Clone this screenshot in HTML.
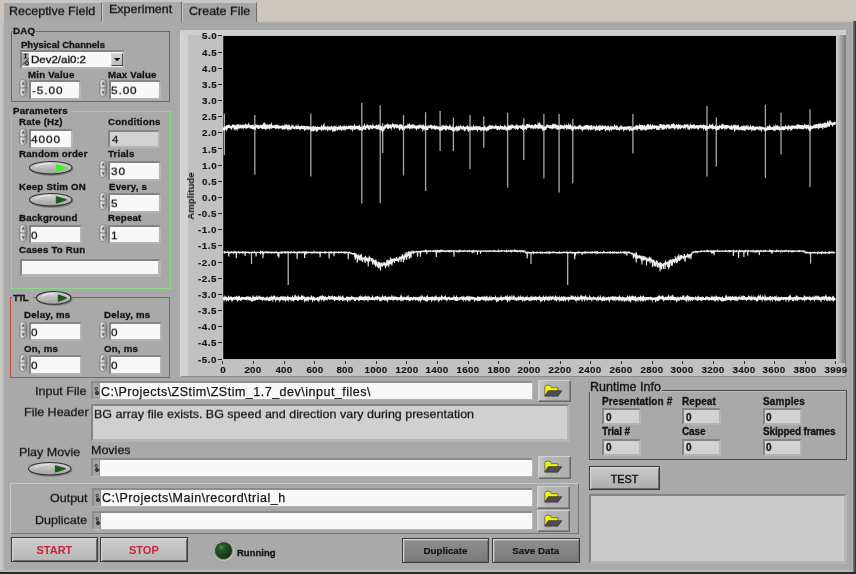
<!DOCTYPE html><html><head><meta charset="utf-8"><style>
*{margin:0;padding:0}
html,body{width:856px;height:574px;overflow:hidden;background:#a9a9a9;font-family:"Liberation Sans",sans-serif}
.r,.t,.tab,.fr,.pc,.fb,.btn,.dd{position:absolute}
.t{white-space:nowrap;will-change:transform}
.tab{box-sizing:border-box;border-top:1.5px solid #c8c8c8;border-left:1.5px solid #c8c8c8;border-right:1.5px solid #6a6a6a}
.fr{box-sizing:border-box;border-style:solid;border-color:#848484 #b4b4b4 #b4b4b4 #848484}
.fr .fi{position:absolute;left:0;top:0;right:0;bottom:0}
.pc{box-sizing:border-box;background:#8c8c8c;border-style:solid;border-width:0 1.8px 1.8px 0;border-color:#b4b4b4}
.pc .pw{position:absolute;left:9px;top:2.2px;right:0;bottom:0;background:#f8f8f8}
.pc:before{content:'';position:absolute;left:2px;top:2.2px;width:7px;bottom:0;background:#a4a4a4;box-shadow:inset -1px 0 0 #8e8e8e}
.pc i{position:absolute;background:#303030;border-radius:50%}
.pc .d1{left:3.5px;top:6px;width:2.2px;height:2.2px}
.pc .d2{left:5px;top:9.5px;width:3px;height:3px}
.dpct{position:absolute;left:2px;top:2px;font-size:9px;line-height:9px;color:#202020;font-weight:bold;transform:scaleX(0.7)}
.fb{box-sizing:border-box;background:linear-gradient(90deg,#c8c8c8,#b4b4b4 30%,#b0b0b0);border:1px solid #6a6a6a;border-top-color:#d0d0d0;border-left-color:#d0d0d0;box-shadow:inset -1px -1px 0 #8a8a8a}
.btn{box-sizing:border-box;text-align:center;border:1px solid #3c3c3c;box-shadow:inset 1.2px 1.2px 0 #d6d6d6, inset -1px -1px 0 #6a6a6a;will-change:transform}
.dd{box-sizing:border-box;background:#8e8e8e;border-top:1px solid #7e7e7e;border-left:1px solid #7e7e7e}
.dd .ddw{position:absolute;left:9px;top:1px;width:81px;bottom:1px;background:#fafafa}
.dd .dda{position:absolute;left:90px;top:1px;width:12px;bottom:1px;background:#c4c4c4;border:1px solid #606060;border-top-color:#e0e0e0;border-left-color:#e0e0e0;box-sizing:border-box}
.dd .dda:after{content:"";position:absolute;left:2px;top:5px;border-left:3.5px solid transparent;border-right:3.5px solid transparent;border-top:4px solid #111}
.yl{font-size:9.8px;line-height:11px;font-weight:bold;color:#141414;text-align:right;letter-spacing:0.5px;-webkit-text-stroke:0.15px #141414}
.xl{width:60px;text-align:center;font-size:9.8px;line-height:10px;font-weight:bold;color:#141414;letter-spacing:0.3px;-webkit-text-stroke:0.15px #141414}
</style></head><body><div class="r" style="left:0;top:0;width:856px;height:574px;background:#a9a9a9"></div>
<div class="r" style="left:0;top:0;width:856px;height:20px;background:#ccc6be"></div>
<div class="r" style="left:0;top:0;width:1.5px;height:574px;background:#ccc6be"></div>
<div class="r" style="left:1.5px;top:21px;width:2.5px;height:553px;background:#bfbfbf"></div>
<div class="r" style="left:1.5px;top:20px;width:854.5px;height:2px;background:#c2c2c2"></div>
<div class="r" style="left:0;top:569.5px;width:856px;height:2.8px;background:#b9b9b9"></div>
<div class="r" style="left:852.5px;top:21px;width:3.5px;height:553px;background:linear-gradient(90deg,#7a7a7a,#2e2e2e)"></div>
<div class="r" style="left:0;top:572.3px;width:856px;height:2px;background:#2c2c2c"></div>
<div class="tab" style="left:3px;top:2px;width:99px;height:19.5px;background:#a6a6a6"></div>
<div class="tab sel" style="left:102px;top:0.5px;width:79.5px;height:22.5px;background:#a9a9a9"></div>
<div class="tab" style="left:182px;top:2px;width:75px;height:19.5px;background:#a6a6a6"></div>
<div class="t" style="left:9.2px;top:4.72px;font-size:12.5px;line-height:12.5px;font-weight:normal;color:#141414;-webkit-text-stroke:0.25px #141414;transform:scaleY(0.92);transform-origin:0 10.58px;-webkit-text-stroke:0.3px #141414">Receptive Field</div>
<div class="t" style="left:109px;top:3.42px;font-size:12.5px;line-height:12.5px;font-weight:normal;color:#141414;-webkit-text-stroke:0.25px #141414;transform:scaleY(0.92);transform-origin:0 10.58px;-webkit-text-stroke:0.3px #141414">Experiment</div>
<div class="t" style="left:188.5px;top:4.72px;font-size:12.5px;line-height:12.5px;font-weight:normal;color:#141414;-webkit-text-stroke:0.25px #141414;transform:scaleY(0.92);transform-origin:0 10.58px;-webkit-text-stroke:0.3px #141414">Create File</div>
<div class="r" style="left:11px;top:30.5px;width:159.00px;height:71.50px;border:1.5px solid #4a66c8;box-sizing:border-box"></div>
<div class="r" style="left:12px;top:25px;width:23.50px;height:11.00px;background:#a9a9a9"></div>
<div class="t" style="left:12.8px;top:25.79px;font-size:9.7px;line-height:9.7px;font-weight:bold;color:#141414;letter-spacing:0.2px;-webkit-text-stroke:0.3px #141414;">DAQ</div>
<div class="t" style="left:20.5px;top:40.26px;font-size:9.5px;line-height:9.5px;font-weight:bold;color:#141414;-webkit-text-stroke:0.3px #141414;">Physical Channels</div>
<div class="fr" style="left:19.5px;top:50.3px;width:105.50px;height:18.30px;border-width:2.3px 2.8px 2.8px 2.3px;background:#f8f8f8"></div>
<div class="r" style="left:21.8px;top:52.6px;width:7.50px;height:13.70px;background:#a6a6a6"></div>
<svg class="r" style="left:22px;top:53px" width="8" height="13" viewBox="0 0 8 13"><path d="M2 1.2 H5 M3.5 1.2 V5 M2 5 H5" stroke="#2a2a2a" stroke-width="1.1" fill="none"/><path d="M1 11.5 L6.5 5.5" stroke="#3a3a3a" stroke-width="0.9"/><ellipse cx="5" cy="10.3" rx="1.5" ry="1.8" fill="none" stroke="#2a2a2a" stroke-width="1.1"/></svg>
<div class="r" style="left:110.5px;top:52.6px;width:12.50px;height:13.70px;background:linear-gradient(#d0d0d0,#bcbcbc);box-sizing:border-box;border-style:solid;border-width:1px 1.5px 1.5px 1px;border-color:#e0e0e0 #4a4a4a #4a4a4a #d8d8d8"></div>
<svg class="r" style="left:113.5px;top:57.8px" width="6.5" height="3.6" viewBox="0 0 6.5 3.6"><path d="M0 0 H6.2 L3.1 3.4 Z" fill="#101010"/></svg>
<div class="t" style="left:30.6px;top:53.67px;font-size:11.5px;line-height:11.5px;font-weight:normal;color:#141414;-webkit-text-stroke:0.25px #141414;transform:scaleY(0.9);transform-origin:0 9.73px;-webkit-text-stroke:0.4px #141414">Dev2/ai0:2</div>
<div class="t" style="left:27.5px;top:70.29px;font-size:9.7px;line-height:9.7px;font-weight:bold;color:#141414;letter-spacing:0.2px;-webkit-text-stroke:0.3px #141414;">Min Value</div>
<div class="t" style="left:107.5px;top:70.29px;font-size:9.7px;line-height:9.7px;font-weight:bold;color:#141414;letter-spacing:0.2px;-webkit-text-stroke:0.3px #141414;">Max Value</div>
<svg class="r" style="left:19.2px;top:79.1px" width="9.2" height="19" viewBox="0 0 9.2 19"><defs><linearGradient id="pg" x1="0" x2="1"><stop offset="0" stop-color="#a8a8a8"/><stop offset="0.22" stop-color="#e8e8e8"/><stop offset="0.55" stop-color="#c6c6c6"/><stop offset="1" stop-color="#777"/></linearGradient></defs><path d="M0.7 9.0 V5.3999999999999995 Q0.7 0.6 4.1 0.6 Q7.699999999999999 0.6 7.699999999999999 5.3999999999999995 V9.0 Z" fill="url(#pg)" stroke="#6e6e6e" stroke-width="0.6"/><path d="M0.7 9.0 V12.600000000000001 Q0.7 17.4 4.1 17.4 Q7.699999999999999 17.4 7.699999999999999 12.600000000000001 V9.0 Z" fill="url(#pg)" stroke="#6e6e6e" stroke-width="0.6"/><path d="M2.3 6.12 L4.3999999999999995 2.5200000000000005 L5.699999999999999 5.58 Z" fill="#6a6a6a"/><path d="M2.3 11.879999999999999 L4.3999999999999995 15.48 L5.699999999999999 12.42 Z" fill="#6a6a6a"/></svg>
<div class="fr" style="left:28.5px;top:79.9px;width:52.70px;height:19.80px;border-width:2.3px 2.8px 2.8px 2.3px;background:#f8f8f8"></div>
<div class="t" style="left:32px;top:84.71px;font-size:11.8px;line-height:11.8px;font-weight:normal;color:#141414;-webkit-text-stroke:0.25px #141414;transform:scaleY(0.92);transform-origin:0 9.99px;letter-spacing:0.9px;-webkit-text-stroke:0.3px #141414">-5.00</div>
<svg class="r" style="left:99.2px;top:79.1px" width="9.2" height="19" viewBox="0 0 9.2 19"><defs><linearGradient id="pg" x1="0" x2="1"><stop offset="0" stop-color="#a8a8a8"/><stop offset="0.22" stop-color="#e8e8e8"/><stop offset="0.55" stop-color="#c6c6c6"/><stop offset="1" stop-color="#777"/></linearGradient></defs><path d="M0.7 9.0 V5.3999999999999995 Q0.7 0.6 4.1 0.6 Q7.699999999999999 0.6 7.699999999999999 5.3999999999999995 V9.0 Z" fill="url(#pg)" stroke="#6e6e6e" stroke-width="0.6"/><path d="M0.7 9.0 V12.600000000000001 Q0.7 17.4 4.1 17.4 Q7.699999999999999 17.4 7.699999999999999 12.600000000000001 V9.0 Z" fill="url(#pg)" stroke="#6e6e6e" stroke-width="0.6"/><path d="M2.3 6.12 L4.3999999999999995 2.5200000000000005 L5.699999999999999 5.58 Z" fill="#6a6a6a"/><path d="M2.3 11.879999999999999 L4.3999999999999995 15.48 L5.699999999999999 12.42 Z" fill="#6a6a6a"/></svg>
<div class="fr" style="left:108.5px;top:79.9px;width:52.70px;height:19.80px;border-width:2.3px 2.8px 2.8px 2.3px;background:#f8f8f8"></div>
<div class="t" style="left:111px;top:84.71px;font-size:11.8px;line-height:11.8px;font-weight:normal;color:#141414;-webkit-text-stroke:0.25px #141414;transform:scaleY(0.92);transform-origin:0 9.99px;letter-spacing:0.9px;-webkit-text-stroke:0.3px #141414">5.00</div>
<div class="r" style="left:11px;top:110.5px;width:160.00px;height:178.50px;border:1.6px solid #8ada8a;box-sizing:border-box"></div>
<div class="r" style="left:12px;top:105px;width:59.00px;height:11.00px;background:#a9a9a9"></div>
<div class="t" style="left:13px;top:105.79px;font-size:9.7px;line-height:9.7px;font-weight:bold;color:#141414;letter-spacing:0.2px;-webkit-text-stroke:0.3px #141414;">Parameters</div>
<div class="t" style="left:19px;top:116.79px;font-size:9.7px;line-height:9.7px;font-weight:bold;color:#141414;letter-spacing:0.2px;-webkit-text-stroke:0.3px #141414;">Rate (Hz)</div>
<div class="t" style="left:108.3px;top:116.79px;font-size:9.7px;line-height:9.7px;font-weight:bold;color:#141414;letter-spacing:0.2px;-webkit-text-stroke:0.3px #141414;">Conditions</div>
<svg class="r" style="left:19.2px;top:128.1px" width="9.2" height="19" viewBox="0 0 9.2 19"><defs><linearGradient id="pg" x1="0" x2="1"><stop offset="0" stop-color="#a8a8a8"/><stop offset="0.22" stop-color="#e8e8e8"/><stop offset="0.55" stop-color="#c6c6c6"/><stop offset="1" stop-color="#777"/></linearGradient></defs><path d="M0.7 9.0 V5.3999999999999995 Q0.7 0.6 4.1 0.6 Q7.699999999999999 0.6 7.699999999999999 5.3999999999999995 V9.0 Z" fill="url(#pg)" stroke="#6e6e6e" stroke-width="0.6"/><path d="M0.7 9.0 V12.600000000000001 Q0.7 17.4 4.1 17.4 Q7.699999999999999 17.4 7.699999999999999 12.600000000000001 V9.0 Z" fill="url(#pg)" stroke="#6e6e6e" stroke-width="0.6"/><path d="M2.3 6.12 L4.3999999999999995 2.5200000000000005 L5.699999999999999 5.58 Z" fill="#6a6a6a"/><path d="M2.3 11.879999999999999 L4.3999999999999995 15.48 L5.699999999999999 12.42 Z" fill="#6a6a6a"/></svg>
<div class="fr" style="left:28.5px;top:128.9px;width:44.20px;height:19.80px;border-width:2.3px 2.8px 2.8px 2.3px;background:#f8f8f8"></div>
<div class="t" style="left:31px;top:133.71px;font-size:11.8px;line-height:11.8px;font-weight:normal;color:#141414;-webkit-text-stroke:0.25px #141414;transform:scaleY(0.92);transform-origin:0 9.99px;letter-spacing:0.9px;-webkit-text-stroke:0.3px #141414">4000</div>
<div class="fr" style="left:108px;top:129.5px;width:52.00px;height:18.50px;border-width:2px 2.5px 2.5px 2px;background:#d2d2d2"></div>
<div class="t" style="left:112px;top:134.47px;font-size:11.5px;line-height:11.5px;font-weight:normal;color:#141414;-webkit-text-stroke:0.25px #141414;transform:scaleY(0.92);transform-origin:0 9.73px;letter-spacing:0.4px">4</div>
<div class="t" style="left:19.3px;top:148.79px;font-size:9.7px;line-height:9.7px;font-weight:bold;color:#141414;letter-spacing:0.2px;-webkit-text-stroke:0.3px #141414;">Random order</div>
<div class="t" style="left:108.3px;top:148.79px;font-size:9.7px;line-height:9.7px;font-weight:bold;color:#141414;letter-spacing:0.2px;-webkit-text-stroke:0.3px #141414;">Trials</div>
<svg class="r" style="left:27.5px;top:159.8px" width="47.5" height="17.599999999999994" viewBox="-1 -1 47.5 17.599999999999994"><defs><linearGradient id="tg28_160" x1="0" y1="0" x2="0" y2="1"><stop offset="0" stop-color="#dadada"/><stop offset="0.55" stop-color="#b8b8b8"/><stop offset="1" stop-color="#a0a0a0"/></linearGradient></defs><ellipse cx="22.75" cy="8.099999999999998" rx="21.75" ry="6.799999999999997" fill="#7c7c7c" opacity="0.8"/><ellipse cx="21.75" cy="6.799999999999997" rx="21.25" ry="6.299999999999997" fill="url(#tg28_160)" stroke="#2e2e2e" stroke-width="1.1"/><path d="M6.96 5.711999999999997 Q13.049999999999999 1.9039999999999995 21.75 2.719999999999999" stroke="#f0f0f0" stroke-width="1" fill="none" opacity="0.8"/><path d="M27.6225 4.079999999999998 L36.975 6.799999999999997 L27.6225 9.791999999999996 Z" fill="#3ef02a" stroke="#3ef02a" stroke-width="1.6" stroke-linejoin="round"/></svg>
<svg class="r" style="left:98.7px;top:160.1px" width="9.2" height="19" viewBox="0 0 9.2 19"><defs><linearGradient id="pg" x1="0" x2="1"><stop offset="0" stop-color="#a8a8a8"/><stop offset="0.22" stop-color="#e8e8e8"/><stop offset="0.55" stop-color="#c6c6c6"/><stop offset="1" stop-color="#777"/></linearGradient></defs><path d="M0.7 9.0 V5.3999999999999995 Q0.7 0.6 4.1 0.6 Q7.699999999999999 0.6 7.699999999999999 5.3999999999999995 V9.0 Z" fill="url(#pg)" stroke="#6e6e6e" stroke-width="0.6"/><path d="M0.7 9.0 V12.600000000000001 Q0.7 17.4 4.1 17.4 Q7.699999999999999 17.4 7.699999999999999 12.600000000000001 V9.0 Z" fill="url(#pg)" stroke="#6e6e6e" stroke-width="0.6"/><path d="M2.3 6.12 L4.3999999999999995 2.5200000000000005 L5.699999999999999 5.58 Z" fill="#6a6a6a"/><path d="M2.3 11.879999999999999 L4.3999999999999995 15.48 L5.699999999999999 12.42 Z" fill="#6a6a6a"/></svg>
<div class="fr" style="left:108.0px;top:160.9px;width:52.70px;height:19.80px;border-width:2.3px 2.8px 2.8px 2.3px;background:#f8f8f8"></div>
<div class="t" style="left:110.5px;top:165.71px;font-size:11.8px;line-height:11.8px;font-weight:normal;color:#141414;-webkit-text-stroke:0.25px #141414;transform:scaleY(0.92);transform-origin:0 9.99px;letter-spacing:0.9px;-webkit-text-stroke:0.3px #141414">30</div>
<div class="t" style="left:19.3px;top:181.79px;font-size:9.7px;line-height:9.7px;font-weight:bold;color:#141414;letter-spacing:0.2px;-webkit-text-stroke:0.3px #141414;">Keep Stim ON</div>
<div class="t" style="left:109px;top:181.79px;font-size:9.7px;line-height:9.7px;font-weight:bold;color:#141414;letter-spacing:0.2px;-webkit-text-stroke:0.3px #141414;">Every, s</div>
<svg class="r" style="left:27.5px;top:191.8px" width="47.5" height="17.599999999999994" viewBox="-1 -1 47.5 17.599999999999994"><defs><linearGradient id="tg28_192" x1="0" y1="0" x2="0" y2="1"><stop offset="0" stop-color="#dadada"/><stop offset="0.55" stop-color="#b8b8b8"/><stop offset="1" stop-color="#a0a0a0"/></linearGradient></defs><ellipse cx="22.75" cy="8.099999999999998" rx="21.75" ry="6.799999999999997" fill="#7c7c7c" opacity="0.8"/><ellipse cx="21.75" cy="6.799999999999997" rx="21.25" ry="6.299999999999997" fill="url(#tg28_192)" stroke="#2e2e2e" stroke-width="1.1"/><path d="M6.96 5.711999999999997 Q13.049999999999999 1.9039999999999995 21.75 2.719999999999999" stroke="#f0f0f0" stroke-width="1" fill="none" opacity="0.8"/><path d="M27.6225 4.079999999999998 L36.975 6.799999999999997 L27.6225 9.791999999999996 Z" fill="#1d5a1d" stroke="#1d5a1d" stroke-width="1.6" stroke-linejoin="round"/></svg>
<svg class="r" style="left:98.7px;top:192.4px" width="9.2" height="19" viewBox="0 0 9.2 19"><defs><linearGradient id="pg" x1="0" x2="1"><stop offset="0" stop-color="#a8a8a8"/><stop offset="0.22" stop-color="#e8e8e8"/><stop offset="0.55" stop-color="#c6c6c6"/><stop offset="1" stop-color="#777"/></linearGradient></defs><path d="M0.7 9.0 V5.3999999999999995 Q0.7 0.6 4.1 0.6 Q7.699999999999999 0.6 7.699999999999999 5.3999999999999995 V9.0 Z" fill="url(#pg)" stroke="#6e6e6e" stroke-width="0.6"/><path d="M0.7 9.0 V12.600000000000001 Q0.7 17.4 4.1 17.4 Q7.699999999999999 17.4 7.699999999999999 12.600000000000001 V9.0 Z" fill="url(#pg)" stroke="#6e6e6e" stroke-width="0.6"/><path d="M2.3 6.12 L4.3999999999999995 2.5200000000000005 L5.699999999999999 5.58 Z" fill="#6a6a6a"/><path d="M2.3 11.879999999999999 L4.3999999999999995 15.48 L5.699999999999999 12.42 Z" fill="#6a6a6a"/></svg>
<div class="fr" style="left:108.0px;top:193.20000000000002px;width:52.70px;height:19.80px;border-width:2.3px 2.8px 2.8px 2.3px;background:#f8f8f8"></div>
<div class="t" style="left:110.5px;top:198.01px;font-size:11.8px;line-height:11.8px;font-weight:normal;color:#141414;-webkit-text-stroke:0.25px #141414;transform:scaleY(0.92);transform-origin:0 9.99px;letter-spacing:0.9px;-webkit-text-stroke:0.3px #141414">5</div>
<div class="t" style="left:19.3px;top:213.29px;font-size:9.7px;line-height:9.7px;font-weight:bold;color:#141414;letter-spacing:0.2px;-webkit-text-stroke:0.3px #141414;">Background</div>
<div class="t" style="left:108px;top:213.29px;font-size:9.7px;line-height:9.7px;font-weight:bold;color:#141414;letter-spacing:0.2px;-webkit-text-stroke:0.3px #141414;">Repeat</div>
<svg class="r" style="left:19.2px;top:223.9px" width="9.2" height="19" viewBox="0 0 9.2 19"><defs><linearGradient id="pg" x1="0" x2="1"><stop offset="0" stop-color="#a8a8a8"/><stop offset="0.22" stop-color="#e8e8e8"/><stop offset="0.55" stop-color="#c6c6c6"/><stop offset="1" stop-color="#777"/></linearGradient></defs><path d="M0.7 9.0 V5.3999999999999995 Q0.7 0.6 4.1 0.6 Q7.699999999999999 0.6 7.699999999999999 5.3999999999999995 V9.0 Z" fill="url(#pg)" stroke="#6e6e6e" stroke-width="0.6"/><path d="M0.7 9.0 V12.600000000000001 Q0.7 17.4 4.1 17.4 Q7.699999999999999 17.4 7.699999999999999 12.600000000000001 V9.0 Z" fill="url(#pg)" stroke="#6e6e6e" stroke-width="0.6"/><path d="M2.3 6.12 L4.3999999999999995 2.5200000000000005 L5.699999999999999 5.58 Z" fill="#6a6a6a"/><path d="M2.3 11.879999999999999 L4.3999999999999995 15.48 L5.699999999999999 12.42 Z" fill="#6a6a6a"/></svg>
<div class="fr" style="left:28.5px;top:224.70000000000002px;width:53.20px;height:19.80px;border-width:2.3px 2.8px 2.8px 2.3px;background:#f8f8f8"></div>
<div class="t" style="left:31px;top:229.51px;font-size:11.8px;line-height:11.8px;font-weight:normal;color:#141414;-webkit-text-stroke:0.25px #141414;transform:scaleY(0.92);transform-origin:0 9.99px;letter-spacing:0.9px;-webkit-text-stroke:0.3px #141414">0</div>
<svg class="r" style="left:98.7px;top:223.9px" width="9.2" height="19" viewBox="0 0 9.2 19"><defs><linearGradient id="pg" x1="0" x2="1"><stop offset="0" stop-color="#a8a8a8"/><stop offset="0.22" stop-color="#e8e8e8"/><stop offset="0.55" stop-color="#c6c6c6"/><stop offset="1" stop-color="#777"/></linearGradient></defs><path d="M0.7 9.0 V5.3999999999999995 Q0.7 0.6 4.1 0.6 Q7.699999999999999 0.6 7.699999999999999 5.3999999999999995 V9.0 Z" fill="url(#pg)" stroke="#6e6e6e" stroke-width="0.6"/><path d="M0.7 9.0 V12.600000000000001 Q0.7 17.4 4.1 17.4 Q7.699999999999999 17.4 7.699999999999999 12.600000000000001 V9.0 Z" fill="url(#pg)" stroke="#6e6e6e" stroke-width="0.6"/><path d="M2.3 6.12 L4.3999999999999995 2.5200000000000005 L5.699999999999999 5.58 Z" fill="#6a6a6a"/><path d="M2.3 11.879999999999999 L4.3999999999999995 15.48 L5.699999999999999 12.42 Z" fill="#6a6a6a"/></svg>
<div class="fr" style="left:108.0px;top:224.70000000000002px;width:52.70px;height:19.80px;border-width:2.3px 2.8px 2.8px 2.3px;background:#f8f8f8"></div>
<div class="t" style="left:110.5px;top:229.51px;font-size:11.8px;line-height:11.8px;font-weight:normal;color:#141414;-webkit-text-stroke:0.25px #141414;transform:scaleY(0.92);transform-origin:0 9.99px;letter-spacing:0.9px;-webkit-text-stroke:0.3px #141414">1</div>
<div class="t" style="left:19.3px;top:244.79px;font-size:9.7px;line-height:9.7px;font-weight:bold;color:#141414;letter-spacing:0.2px;-webkit-text-stroke:0.3px #141414;">Cases To Run</div>
<div class="fr" style="left:20px;top:258.5px;width:141.00px;height:18.00px;border-width:2.5px 3.0px 3.0px 2.5px;background:#f8f8f8"></div>
<div class="r" style="left:10.2px;top:297px;width:160.30px;height:80.50px;border:1.8px solid #c84444;box-sizing:border-box"></div>
<div class="r" style="left:12px;top:292px;width:21.00px;height:12.00px;background:#a9a9a9"></div>
<div class="t" style="left:12.5px;top:293.29px;font-size:9.7px;line-height:9.7px;font-weight:bold;color:#141414;-webkit-text-stroke:0.3px #141414;letter-spacing:-1px">TTL</div>
<svg class="r" style="left:35px;top:290.2px" width="39.5" height="17.80000000000001" viewBox="-1 -1 39.5 17.80000000000001"><defs><linearGradient id="tg36_291" x1="0" y1="0" x2="0" y2="1"><stop offset="0" stop-color="#dadada"/><stop offset="0.55" stop-color="#b8b8b8"/><stop offset="1" stop-color="#a0a0a0"/></linearGradient></defs><ellipse cx="18.75" cy="8.200000000000006" rx="17.75" ry="6.900000000000006" fill="#7c7c7c" opacity="0.8"/><ellipse cx="17.75" cy="6.900000000000006" rx="17.25" ry="6.400000000000006" fill="url(#tg36_291)" stroke="#2e2e2e" stroke-width="1.1"/><path d="M5.68 5.796000000000005 Q10.65 1.9320000000000017 17.75 2.7600000000000025" stroke="#f0f0f0" stroke-width="1" fill="none" opacity="0.8"/><path d="M22.5425 4.140000000000003 L30.175 6.900000000000006 L22.5425 9.936000000000007 Z" fill="#1d5a1d" stroke="#1d5a1d" stroke-width="1.6" stroke-linejoin="round"/></svg>
<div class="t" style="left:24px;top:310.09px;font-size:9.7px;line-height:9.7px;font-weight:bold;color:#141414;letter-spacing:0.2px;-webkit-text-stroke:0.3px #141414;">Delay, ms</div>
<div class="t" style="left:104px;top:310.09px;font-size:9.7px;line-height:9.7px;font-weight:bold;color:#141414;letter-spacing:0.2px;-webkit-text-stroke:0.3px #141414;">Delay, ms</div>
<svg class="r" style="left:19.2px;top:320.90000000000003px" width="9.2" height="19" viewBox="0 0 9.2 19"><defs><linearGradient id="pg" x1="0" x2="1"><stop offset="0" stop-color="#a8a8a8"/><stop offset="0.22" stop-color="#e8e8e8"/><stop offset="0.55" stop-color="#c6c6c6"/><stop offset="1" stop-color="#777"/></linearGradient></defs><path d="M0.7 9.0 V5.3999999999999995 Q0.7 0.6 4.1 0.6 Q7.699999999999999 0.6 7.699999999999999 5.3999999999999995 V9.0 Z" fill="url(#pg)" stroke="#6e6e6e" stroke-width="0.6"/><path d="M0.7 9.0 V12.600000000000001 Q0.7 17.4 4.1 17.4 Q7.699999999999999 17.4 7.699999999999999 12.600000000000001 V9.0 Z" fill="url(#pg)" stroke="#6e6e6e" stroke-width="0.6"/><path d="M2.3 6.12 L4.3999999999999995 2.5200000000000005 L5.699999999999999 5.58 Z" fill="#6a6a6a"/><path d="M2.3 11.879999999999999 L4.3999999999999995 15.48 L5.699999999999999 12.42 Z" fill="#6a6a6a"/></svg>
<div class="fr" style="left:28.5px;top:321.7px;width:53.20px;height:19.80px;border-width:2.3px 2.8px 2.8px 2.3px;background:#f8f8f8"></div>
<div class="t" style="left:31px;top:326.51px;font-size:11.8px;line-height:11.8px;font-weight:normal;color:#141414;-webkit-text-stroke:0.25px #141414;transform:scaleY(0.92);transform-origin:0 9.99px;letter-spacing:0.9px;-webkit-text-stroke:0.3px #141414">0</div>
<svg class="r" style="left:99.2px;top:320.90000000000003px" width="9.2" height="19" viewBox="0 0 9.2 19"><defs><linearGradient id="pg" x1="0" x2="1"><stop offset="0" stop-color="#a8a8a8"/><stop offset="0.22" stop-color="#e8e8e8"/><stop offset="0.55" stop-color="#c6c6c6"/><stop offset="1" stop-color="#777"/></linearGradient></defs><path d="M0.7 9.0 V5.3999999999999995 Q0.7 0.6 4.1 0.6 Q7.699999999999999 0.6 7.699999999999999 5.3999999999999995 V9.0 Z" fill="url(#pg)" stroke="#6e6e6e" stroke-width="0.6"/><path d="M0.7 9.0 V12.600000000000001 Q0.7 17.4 4.1 17.4 Q7.699999999999999 17.4 7.699999999999999 12.600000000000001 V9.0 Z" fill="url(#pg)" stroke="#6e6e6e" stroke-width="0.6"/><path d="M2.3 6.12 L4.3999999999999995 2.5200000000000005 L5.699999999999999 5.58 Z" fill="#6a6a6a"/><path d="M2.3 11.879999999999999 L4.3999999999999995 15.48 L5.699999999999999 12.42 Z" fill="#6a6a6a"/></svg>
<div class="fr" style="left:108.5px;top:321.7px;width:53.20px;height:19.80px;border-width:2.3px 2.8px 2.8px 2.3px;background:#f8f8f8"></div>
<div class="t" style="left:111px;top:326.51px;font-size:11.8px;line-height:11.8px;font-weight:normal;color:#141414;-webkit-text-stroke:0.25px #141414;transform:scaleY(0.92);transform-origin:0 9.99px;letter-spacing:0.9px;-webkit-text-stroke:0.3px #141414">0</div>
<div class="t" style="left:24px;top:343.59px;font-size:9.7px;line-height:9.7px;font-weight:bold;color:#141414;letter-spacing:0.2px;-webkit-text-stroke:0.3px #141414;">On, ms</div>
<div class="t" style="left:104px;top:343.59px;font-size:9.7px;line-height:9.7px;font-weight:bold;color:#141414;letter-spacing:0.2px;-webkit-text-stroke:0.3px #141414;">On, ms</div>
<svg class="r" style="left:19.2px;top:354.40000000000003px" width="9.2" height="19" viewBox="0 0 9.2 19"><defs><linearGradient id="pg" x1="0" x2="1"><stop offset="0" stop-color="#a8a8a8"/><stop offset="0.22" stop-color="#e8e8e8"/><stop offset="0.55" stop-color="#c6c6c6"/><stop offset="1" stop-color="#777"/></linearGradient></defs><path d="M0.7 9.0 V5.3999999999999995 Q0.7 0.6 4.1 0.6 Q7.699999999999999 0.6 7.699999999999999 5.3999999999999995 V9.0 Z" fill="url(#pg)" stroke="#6e6e6e" stroke-width="0.6"/><path d="M0.7 9.0 V12.600000000000001 Q0.7 17.4 4.1 17.4 Q7.699999999999999 17.4 7.699999999999999 12.600000000000001 V9.0 Z" fill="url(#pg)" stroke="#6e6e6e" stroke-width="0.6"/><path d="M2.3 6.12 L4.3999999999999995 2.5200000000000005 L5.699999999999999 5.58 Z" fill="#6a6a6a"/><path d="M2.3 11.879999999999999 L4.3999999999999995 15.48 L5.699999999999999 12.42 Z" fill="#6a6a6a"/></svg>
<div class="fr" style="left:28.5px;top:355.2px;width:53.20px;height:19.80px;border-width:2.3px 2.8px 2.8px 2.3px;background:#f8f8f8"></div>
<div class="t" style="left:31px;top:360.01px;font-size:11.8px;line-height:11.8px;font-weight:normal;color:#141414;-webkit-text-stroke:0.25px #141414;transform:scaleY(0.92);transform-origin:0 9.99px;letter-spacing:0.9px;-webkit-text-stroke:0.3px #141414">0</div>
<svg class="r" style="left:99.2px;top:354.40000000000003px" width="9.2" height="19" viewBox="0 0 9.2 19"><defs><linearGradient id="pg" x1="0" x2="1"><stop offset="0" stop-color="#a8a8a8"/><stop offset="0.22" stop-color="#e8e8e8"/><stop offset="0.55" stop-color="#c6c6c6"/><stop offset="1" stop-color="#777"/></linearGradient></defs><path d="M0.7 9.0 V5.3999999999999995 Q0.7 0.6 4.1 0.6 Q7.699999999999999 0.6 7.699999999999999 5.3999999999999995 V9.0 Z" fill="url(#pg)" stroke="#6e6e6e" stroke-width="0.6"/><path d="M0.7 9.0 V12.600000000000001 Q0.7 17.4 4.1 17.4 Q7.699999999999999 17.4 7.699999999999999 12.600000000000001 V9.0 Z" fill="url(#pg)" stroke="#6e6e6e" stroke-width="0.6"/><path d="M2.3 6.12 L4.3999999999999995 2.5200000000000005 L5.699999999999999 5.58 Z" fill="#6a6a6a"/><path d="M2.3 11.879999999999999 L4.3999999999999995 15.48 L5.699999999999999 12.42 Z" fill="#6a6a6a"/></svg>
<div class="fr" style="left:108.5px;top:355.2px;width:53.20px;height:19.80px;border-width:2.3px 2.8px 2.8px 2.3px;background:#f8f8f8"></div>
<div class="t" style="left:111px;top:360.01px;font-size:11.8px;line-height:11.8px;font-weight:normal;color:#141414;-webkit-text-stroke:0.25px #141414;transform:scaleY(0.92);transform-origin:0 9.99px;letter-spacing:0.9px;-webkit-text-stroke:0.3px #141414">0</div>
<div class="r" style="left:180px;top:30px;width:666px;height:347px;background:#c1c1c1;box-shadow:inset 1px 1px 0 #d8d8d8, inset -1px -1px 0 #8a8a8a"></div>
<div class="r" style="left:181px;top:31px;width:7px;height:345px;background:#d2d2d2"></div>
<div class="r" style="left:180px;top:30px;width:666px;height:5px;background:#cfcfcf"></div>
<div class="r" style="left:836px;top:35px;width:10px;height:328px;background:linear-gradient(90deg,#d0d0d0,#7a7a7a)"></div>
<div class="r" style="left:222.5px;top:35.6px;width:613.5px;height:323.2px;background:#000"></div>
<div class="r" style="left:222.5px;top:35.6px;width:1.5px;height:323.2px;background:#8a0a0a"></div>
<div class="t yl" style="right:639px;top:30.40px">5.0</div>
<div class="r" style="left:217.5px;top:35.0px;width:4.00px;height:1.00px;background:#202020"></div>
<div class="t yl" style="right:639px;top:46.56px">4.5</div>
<div class="r" style="left:217.5px;top:51.5px;width:4.00px;height:1.00px;background:#202020"></div>
<div class="t yl" style="right:639px;top:62.72px">4.0</div>
<div class="r" style="left:217.5px;top:67.5px;width:4.00px;height:1.00px;background:#202020"></div>
<div class="t yl" style="right:639px;top:78.88px">3.5</div>
<div class="r" style="left:217.5px;top:83.5px;width:4.00px;height:1.00px;background:#202020"></div>
<div class="t yl" style="right:639px;top:95.04px">3.0</div>
<div class="r" style="left:217.5px;top:99.5px;width:4.00px;height:1.00px;background:#202020"></div>
<div class="t yl" style="right:639px;top:111.20px">2.5</div>
<div class="r" style="left:217.5px;top:116.0px;width:4.00px;height:1.00px;background:#202020"></div>
<div class="t yl" style="right:639px;top:127.36px">2.0</div>
<div class="r" style="left:217.5px;top:132.0px;width:4.00px;height:1.00px;background:#202020"></div>
<div class="t yl" style="right:639px;top:143.52px">1.5</div>
<div class="r" style="left:217.5px;top:148.0px;width:4.00px;height:1.00px;background:#202020"></div>
<div class="t yl" style="right:639px;top:159.68px">1.0</div>
<div class="r" style="left:217.5px;top:164.5px;width:4.00px;height:1.00px;background:#202020"></div>
<div class="t yl" style="right:639px;top:175.84px">0.5</div>
<div class="r" style="left:217.5px;top:180.5px;width:4.00px;height:1.00px;background:#202020"></div>
<div class="t yl" style="right:639px;top:192.00px">0.0</div>
<div class="r" style="left:217.5px;top:196.5px;width:4.00px;height:1.00px;background:#202020"></div>
<div class="t yl" style="right:639px;top:208.16px">-0.5</div>
<div class="r" style="left:217.5px;top:213.0px;width:4.00px;height:1.00px;background:#202020"></div>
<div class="t yl" style="right:639px;top:224.32px">-1.0</div>
<div class="r" style="left:217.5px;top:229.0px;width:4.00px;height:1.00px;background:#202020"></div>
<div class="t yl" style="right:639px;top:240.48px">-1.5</div>
<div class="r" style="left:217.5px;top:245.0px;width:4.00px;height:1.00px;background:#202020"></div>
<div class="t yl" style="right:639px;top:256.64px">-2.0</div>
<div class="r" style="left:217.5px;top:261.5px;width:4.00px;height:1.00px;background:#202020"></div>
<div class="t yl" style="right:639px;top:272.80px">-2.5</div>
<div class="r" style="left:217.5px;top:277.5px;width:4.00px;height:1.00px;background:#202020"></div>
<div class="t yl" style="right:639px;top:288.96px">-3.0</div>
<div class="r" style="left:217.5px;top:293.5px;width:4.00px;height:1.00px;background:#202020"></div>
<div class="t yl" style="right:639px;top:305.12px">-3.5</div>
<div class="r" style="left:217.5px;top:310.0px;width:4.00px;height:1.00px;background:#202020"></div>
<div class="t yl" style="right:639px;top:321.28px">-4.0</div>
<div class="r" style="left:217.5px;top:326.0px;width:4.00px;height:1.00px;background:#202020"></div>
<div class="t yl" style="right:639px;top:337.44px">-4.5</div>
<div class="r" style="left:217.5px;top:342.0px;width:4.00px;height:1.00px;background:#202020"></div>
<div class="t yl" style="right:639px;top:353.60px">-5.0</div>
<div class="r" style="left:217.5px;top:358.5px;width:4.00px;height:1.00px;background:#202020"></div>
<div class="t" style="left:190.5px;top:196px;font-size:9.7px;line-height:10px;font-weight:bold;color:#141414;transform:translate(-50%,-50%) rotate(-90deg);white-space:nowrap">Amplitude</div>
<div class="t xl" style="left:192.60px;top:365px">0</div>
<div class="r" style="left:222.0px;top:360.5px;width:1.00px;height:3.00px;background:#303030"></div>
<div class="t xl" style="left:223.26px;top:365px">200</div>
<div class="r" style="left:253.0px;top:360.5px;width:1.00px;height:3.00px;background:#303030"></div>
<div class="t xl" style="left:253.92px;top:365px">400</div>
<div class="r" style="left:283.5px;top:360.5px;width:1.00px;height:3.00px;background:#303030"></div>
<div class="t xl" style="left:284.57px;top:365px">600</div>
<div class="r" style="left:314.0px;top:360.5px;width:1.00px;height:3.00px;background:#303030"></div>
<div class="t xl" style="left:315.23px;top:365px">800</div>
<div class="r" style="left:344.5px;top:360.5px;width:1.00px;height:3.00px;background:#303030"></div>
<div class="t xl" style="left:345.89px;top:365px">1000</div>
<div class="r" style="left:375.5px;top:360.5px;width:1.00px;height:3.00px;background:#303030"></div>
<div class="t xl" style="left:376.55px;top:365px">1200</div>
<div class="r" style="left:406.0px;top:360.5px;width:1.00px;height:3.00px;background:#303030"></div>
<div class="t xl" style="left:407.20px;top:365px">1400</div>
<div class="r" style="left:436.5px;top:360.5px;width:1.00px;height:3.00px;background:#303030"></div>
<div class="t xl" style="left:437.86px;top:365px">1600</div>
<div class="r" style="left:467.5px;top:360.5px;width:1.00px;height:3.00px;background:#303030"></div>
<div class="t xl" style="left:468.52px;top:365px">1800</div>
<div class="r" style="left:498.0px;top:360.5px;width:1.00px;height:3.00px;background:#303030"></div>
<div class="t xl" style="left:499.18px;top:365px">2000</div>
<div class="r" style="left:528.5px;top:360.5px;width:1.00px;height:3.00px;background:#303030"></div>
<div class="t xl" style="left:529.83px;top:365px">2200</div>
<div class="r" style="left:559.5px;top:360.5px;width:1.00px;height:3.00px;background:#303030"></div>
<div class="t xl" style="left:560.49px;top:365px">2400</div>
<div class="r" style="left:590.0px;top:360.5px;width:1.00px;height:3.00px;background:#303030"></div>
<div class="t xl" style="left:591.15px;top:365px">2600</div>
<div class="r" style="left:620.5px;top:360.5px;width:1.00px;height:3.00px;background:#303030"></div>
<div class="t xl" style="left:621.81px;top:365px">2800</div>
<div class="r" style="left:651.5px;top:360.5px;width:1.00px;height:3.00px;background:#303030"></div>
<div class="t xl" style="left:652.46px;top:365px">3000</div>
<div class="r" style="left:682.0px;top:360.5px;width:1.00px;height:3.00px;background:#303030"></div>
<div class="t xl" style="left:683.12px;top:365px">3200</div>
<div class="r" style="left:712.5px;top:360.5px;width:1.00px;height:3.00px;background:#303030"></div>
<div class="t xl" style="left:713.78px;top:365px">3400</div>
<div class="r" style="left:743.5px;top:360.5px;width:1.00px;height:3.00px;background:#303030"></div>
<div class="t xl" style="left:744.44px;top:365px">3600</div>
<div class="r" style="left:774.0px;top:360.5px;width:1.00px;height:3.00px;background:#303030"></div>
<div class="t xl" style="left:775.10px;top:365px">3800</div>
<div class="r" style="left:804.5px;top:360.5px;width:1.00px;height:3.00px;background:#303030"></div>
<div class="t xl" style="left:805.60px;top:365px">3999</div>
<div class="r" style="left:835.0px;top:360.5px;width:1.00px;height:3.00px;background:#303030"></div>
<svg class="r" style="left:0;top:0" width="856" height="574" viewBox="0 0 856 574"><line x1="224.4" y1="113.4" x2="224.4" y2="155" stroke="#a8a8a8" stroke-width="1.3"/><line x1="254.8" y1="115.1" x2="254.8" y2="174.7" stroke="#a8a8a8" stroke-width="1.3"/><line x1="310.8" y1="113.4" x2="310.8" y2="176.5" stroke="#a8a8a8" stroke-width="1.3"/><line x1="361.8" y1="102.9" x2="361.8" y2="203.4" stroke="#a8a8a8" stroke-width="1.3"/><line x1="380.2" y1="105.3" x2="380.2" y2="203" stroke="#a8a8a8" stroke-width="1.3"/><line x1="382.7" y1="123" x2="382.7" y2="153" stroke="#a8a8a8" stroke-width="1.3"/><line x1="403.5" y1="115.1" x2="403.5" y2="175.5" stroke="#a8a8a8" stroke-width="1.3"/><line x1="425.6" y1="112.2" x2="425.6" y2="191" stroke="#a8a8a8" stroke-width="1.3"/><line x1="440.1" y1="111" x2="440.1" y2="151" stroke="#a8a8a8" stroke-width="1.3"/><line x1="453.4" y1="117.6" x2="453.4" y2="151" stroke="#a8a8a8" stroke-width="1.3"/><line x1="470" y1="115.1" x2="470" y2="169.3" stroke="#a8a8a8" stroke-width="1.3"/><line x1="483.8" y1="116.6" x2="483.8" y2="147.7" stroke="#a8a8a8" stroke-width="1.3"/><line x1="507.6" y1="112.7" x2="507.6" y2="187.7" stroke="#a8a8a8" stroke-width="1.3"/><line x1="523.8" y1="118.3" x2="523.8" y2="160" stroke="#a8a8a8" stroke-width="1.3"/><line x1="543.9" y1="114.1" x2="543.9" y2="178.4" stroke="#a8a8a8" stroke-width="1.3"/><line x1="559.1" y1="114.1" x2="559.1" y2="192.6" stroke="#a8a8a8" stroke-width="1.3"/><line x1="572.8" y1="119" x2="572.8" y2="183.3" stroke="#a8a8a8" stroke-width="1.3"/><line x1="632.9" y1="114.1" x2="632.9" y2="153.4" stroke="#a8a8a8" stroke-width="1.3"/><line x1="707" y1="106" x2="707" y2="176.5" stroke="#a8a8a8" stroke-width="1.3"/><line x1="716.3" y1="117.6" x2="716.3" y2="166.6" stroke="#a8a8a8" stroke-width="1.3"/><line x1="765.4" y1="104.8" x2="765.4" y2="178" stroke="#a8a8a8" stroke-width="1.3"/><line x1="781" y1="112.7" x2="781" y2="154.4" stroke="#a8a8a8" stroke-width="1.3"/><line x1="810" y1="109.2" x2="810" y2="187" stroke="#a8a8a8" stroke-width="1.3"/><line x1="288.2" y1="253" x2="288.2" y2="285" stroke="#c0c0c0" stroke-width="1.2"/><line x1="567.7" y1="253" x2="567.7" y2="285" stroke="#c0c0c0" stroke-width="1.2"/><line x1="251.5" y1="253" x2="251.5" y2="264" stroke="#c0c0c0" stroke-width="1.2"/><line x1="531" y1="253" x2="531" y2="264" stroke="#c0c0c0" stroke-width="1.2"/><line x1="810.6" y1="253" x2="810.6" y2="263.4" stroke="#c0c0c0" stroke-width="1.2"/><polyline points="223.5,127.9 223.7,128.7 223.9,129.3 224.1,128.9 224.3,126.9 224.5,130.0 224.7,128.7 224.9,127.7 225.1,127.8 225.3,129.4 225.5,127.2 225.7,127.2 225.9,127.6 226.1,128.3 226.4,128.9 226.6,126.5 226.8,126.4 227.0,126.8 227.2,125.3 227.4,127.9 227.6,127.2 227.8,126.4 228.0,127.8 228.2,125.7 228.4,125.7 228.6,127.4 228.8,126.3 229.0,127.8 229.2,125.8 229.4,125.9 229.6,126.5 229.8,127.0 230.0,126.9 230.2,127.4 230.4,127.3 230.6,127.2 230.8,126.4 231.0,127.5 231.2,127.9 231.4,126.8 231.7,126.6 231.9,128.2 232.1,127.1 232.3,125.4 232.5,125.9 232.7,126.9 232.9,124.7 233.1,126.5 233.3,127.1 233.5,125.9 233.7,125.7 233.9,125.7 234.1,127.5 234.3,128.1 234.5,127.9 234.7,128.2 234.9,126.3 235.1,126.5 235.3,128.0 235.5,127.5 235.7,126.3 235.9,127.5 236.1,127.7 236.3,126.7 236.5,127.2 236.7,126.4 237.0,127.6 237.2,128.3 237.4,127.6 237.6,126.6 237.8,124.4 238.0,125.1 238.2,126.9 238.4,126.8 238.6,127.1 238.8,125.3 239.0,127.1 239.2,126.9 239.4,125.8 239.6,128.0 239.8,127.5 240.0,126.6 240.2,127.2 240.4,125.9 240.6,126.9 240.8,126.0 241.0,126.2 241.2,126.1 241.4,128.3 241.6,127.6 241.8,125.9 242.0,126.8 242.3,126.6 242.5,127.4 242.7,126.5 242.9,126.9 243.1,124.8 243.3,126.5 243.5,126.2 243.7,126.8 243.9,126.5 244.1,124.9 244.3,126.3 244.5,126.8 244.7,126.6 244.9,126.6 245.1,126.9 245.3,127.1 245.5,126.7 245.7,125.1 245.9,125.3 246.1,125.2 246.3,125.5 246.5,127.4 246.7,127.1 246.9,125.2 247.1,126.2 247.3,126.0 247.6,128.2 247.8,126.5 248.0,126.5 248.2,125.9 248.4,125.7 248.6,125.2 248.8,126.5 249.0,126.4 249.2,126.0 249.4,126.4 249.6,127.3 249.8,126.6 250.0,126.4 250.2,127.7 250.4,127.7 250.6,125.5 250.8,126.6 251.0,126.7 251.2,126.5 251.4,126.1 251.6,126.3 251.8,126.5 252.0,127.0 252.2,128.9 252.4,127.2 252.6,125.8 252.9,125.6 253.1,126.1 253.3,129.3 253.5,127.5 253.7,127.3 253.9,127.2 254.1,128.6 254.3,126.0 254.5,128.6 254.7,128.7 254.9,127.1 255.1,128.5 255.3,128.5 255.5,127.2 255.7,125.3 255.9,127.3 256.1,126.1 256.3,126.5 256.5,127.6 256.7,125.0 256.9,125.8 257.1,126.2 257.3,127.2 257.5,126.2 257.7,126.0 257.9,126.6 258.2,127.3 258.4,128.9 258.6,125.1 258.8,127.9 259.0,126.0 259.2,128.1 259.4,127.3 259.6,127.2 259.8,125.9 260.0,127.2 260.2,127.1 260.4,126.6 260.6,126.2 260.8,127.1 261.0,126.1 261.2,127.1 261.4,127.0 261.6,127.4 261.8,127.6 262.0,126.3 262.2,125.1 262.4,126.6 262.6,126.5 262.8,128.9 263.0,126.3 263.2,125.9 263.5,124.2 263.7,127.1 263.9,127.3 264.1,125.1 264.3,125.5 264.5,128.1 264.7,125.8 264.9,124.7 265.1,125.1 265.3,127.6 265.5,127.4 265.7,126.0 265.9,126.8 266.1,128.2 266.3,127.8 266.5,125.3 266.7,127.4 266.9,126.8 267.1,124.7 267.3,125.9 267.5,127.7 267.7,127.6 267.9,125.5 268.1,126.7 268.3,127.2 268.5,126.8 268.8,127.2 269.0,127.1 269.2,125.9 269.4,124.3 269.6,126.7 269.8,127.5 270.0,126.8 270.2,125.1 270.4,126.2 270.6,126.4 270.8,127.3 271.0,125.8 271.2,125.2 271.4,126.2 271.6,127.8 271.8,127.7 272.0,126.8 272.2,127.1 272.4,127.7 272.6,126.2 272.8,126.2 273.0,127.0 273.2,127.0 273.4,126.9 273.6,125.7 273.8,126.5 274.1,127.9 274.3,126.7 274.5,127.1 274.7,127.0 274.9,127.2 275.1,126.3 275.3,127.5 275.5,127.6 275.7,127.1 275.9,125.0 276.1,125.5 276.3,126.0 276.5,128.2 276.7,126.2 276.9,127.0 277.1,126.6 277.3,128.2 277.5,127.0 277.7,125.9 277.9,127.4 278.1,127.6 278.3,126.3 278.5,128.4 278.7,127.3 278.9,126.4 279.1,126.6 279.4,126.9 279.6,127.3 279.8,127.0 280.0,126.8 280.2,125.9 280.4,127.8 280.6,127.0 280.8,126.0 281.0,127.6 281.2,128.4 281.4,126.9 281.6,125.9 281.8,127.5 282.0,127.8 282.2,126.2 282.4,129.1 282.6,128.1 282.8,125.3 283.0,126.9 283.2,128.1 283.4,127.9 283.6,127.2 283.8,127.1 284.0,128.5 284.2,128.6 284.4,127.5 284.6,127.7 284.9,126.6 285.1,127.4 285.3,127.3 285.5,126.1 285.7,126.1 285.9,127.3 286.1,127.0 286.3,127.2 286.5,124.6 286.7,127.4 286.9,128.7 287.1,127.6 287.3,128.1 287.5,127.6 287.7,127.8 287.9,127.9 288.1,126.6 288.3,126.1 288.5,125.9 288.7,128.1 288.9,128.2 289.1,125.4 289.3,128.1 289.5,127.7 289.7,127.2 289.9,127.3 290.2,127.9 290.4,126.8 290.6,127.8 290.8,127.7 291.0,126.6 291.2,127.3 291.4,126.7 291.6,128.6 291.8,126.2 292.0,127.1 292.2,125.9 292.4,126.1 292.6,125.5 292.8,126.6 293.0,127.7 293.2,127.0 293.4,127.1 293.6,126.5 293.8,128.9 294.0,128.4 294.2,128.4 294.4,127.2 294.6,129.0 294.8,127.8 295.0,128.7 295.2,126.9 295.5,128.6 295.7,127.2 295.9,126.8 296.1,127.5 296.3,127.6 296.5,126.6 296.7,126.8 296.9,128.5 297.1,129.0 297.3,127.2 297.5,128.1 297.7,129.0 297.9,126.8 298.1,128.0 298.3,126.5 298.5,126.9 298.7,128.5 298.9,126.5 299.1,127.6 299.3,126.7 299.5,128.8 299.7,128.9 299.9,127.3 300.1,127.9 300.3,127.1 300.5,126.1 300.8,128.1 301.0,128.1 301.2,128.8 301.4,127.3 301.6,127.0 301.8,128.6 302.0,127.8 302.2,126.8 302.4,126.9 302.6,127.5 302.8,128.2 303.0,128.1 303.2,129.1 303.4,127.4 303.6,128.3 303.8,128.2 304.0,126.8 304.2,125.9 304.4,127.9 304.6,127.9 304.8,129.5 305.0,129.3 305.2,127.2 305.4,128.8 305.6,126.7 305.8,129.3 306.1,126.4 306.3,128.8 306.5,128.2 306.7,128.9 306.9,126.8 307.1,129.4 307.3,128.2 307.5,127.2 307.7,126.8 307.9,126.9 308.1,127.0 308.3,127.0 308.5,128.1 308.7,127.7 308.9,127.1 309.1,127.0 309.3,126.5 309.5,128.1 309.7,127.2 309.9,129.1 310.1,127.9 310.3,129.4 310.5,128.5 310.7,129.6 310.9,129.7 311.1,128.6 311.4,129.2 311.6,128.4 311.8,130.0 312.0,128.9 312.2,129.2 312.4,126.5 312.6,129.1 312.8,128.4 313.0,128.0 313.2,131.2 313.4,128.4 313.6,128.3 313.8,126.7 314.0,128.1 314.2,129.2 314.4,128.0 314.6,128.6 314.8,127.9 315.0,127.7 315.2,128.7 315.4,127.2 315.6,128.5 315.8,128.6 316.0,129.2 316.2,128.3 316.4,128.6 316.7,127.8 316.9,127.7 317.1,128.8 317.3,130.2 317.5,130.0 317.7,128.2 317.9,128.5 318.1,128.5 318.3,129.3 318.5,127.9 318.7,128.7 318.9,126.9 319.1,127.8 319.3,128.0 319.5,129.6 319.7,129.0 319.9,128.7 320.1,127.2 320.3,128.5 320.5,128.6 320.7,129.2 320.9,126.9 321.1,128.0 321.3,128.7 321.5,128.2 321.7,127.1 322.0,127.7 322.2,128.9 322.4,128.6 322.6,128.4 322.8,127.5 323.0,126.5 323.2,129.5 323.4,127.6 323.6,126.1 323.8,125.7 324.0,129.1 324.2,129.0 324.4,128.2 324.6,126.9 324.8,127.9 325.0,127.9 325.2,127.6 325.4,127.9 325.6,129.0 325.8,127.0 326.0,128.5 326.2,128.1 326.4,127.0 326.6,127.8 326.8,127.4 327.0,127.2 327.3,128.2 327.5,127.3 327.7,129.7 327.9,127.8 328.1,128.7 328.3,128.1 328.5,129.2 328.7,126.5 328.9,127.0 329.1,129.4 329.3,127.5 329.5,128.5 329.7,128.8 329.9,127.1 330.1,129.6 330.3,128.4 330.5,127.5 330.7,129.1 330.9,129.0 331.1,127.1 331.3,126.9 331.5,127.7 331.7,127.6 331.9,128.8 332.1,127.6 332.3,126.8 332.6,129.0 332.8,129.8 333.0,129.3 333.2,128.8 333.4,129.2 333.6,127.2 333.8,128.0 334.0,127.5 334.2,127.0 334.4,127.3 334.6,127.4 334.8,128.9 335.0,128.4 335.2,128.1 335.4,127.2 335.6,128.0 335.8,127.6 336.0,129.0 336.2,128.5 336.4,128.5 336.6,127.3 336.8,128.7 337.0,127.3 337.2,128.2 337.4,128.5 337.6,128.9 337.9,128.2 338.1,128.0 338.3,128.2 338.5,127.9 338.7,127.5 338.9,128.4 339.1,129.6 339.3,128.1 339.5,127.2 339.7,128.0 339.9,127.6 340.1,128.1 340.3,127.6 340.5,128.4 340.7,128.7 340.9,128.7 341.1,129.0 341.3,128.2 341.5,128.5 341.7,127.3 341.9,127.2 342.1,128.1 342.3,126.4 342.5,128.1 342.7,128.1 342.9,126.5 343.2,128.4 343.4,128.0 343.6,126.8 343.8,128.0 344.0,127.4 344.2,128.2 344.4,127.5 344.6,128.5 344.8,128.3 345.0,128.9 345.2,126.2 345.4,127.0 345.6,128.1 345.8,128.8 346.0,128.5 346.2,127.3 346.4,128.7 346.6,127.8 346.8,127.2 347.0,127.5 347.2,128.0 347.4,128.4 347.6,128.2 347.8,127.7 348.0,127.6 348.2,128.2 348.4,126.7 348.7,127.7 348.9,125.9 349.1,128.9 349.3,126.0 349.5,128.1 349.7,127.4 349.9,126.5 350.1,125.7 350.3,128.1 350.5,128.4 350.7,127.9 350.9,129.1 351.1,127.9 351.3,126.7 351.5,126.7 351.7,128.3 351.9,127.8 352.1,128.2 352.3,128.9 352.5,128.1 352.7,128.6 352.9,128.4 353.1,127.1 353.3,126.8 353.5,126.7 353.7,129.4 354.0,128.0 354.2,127.3 354.4,127.3 354.6,126.6 354.8,127.4 355.0,129.6 355.2,127.2 355.4,128.3 355.6,126.2 355.8,128.9 356.0,127.1 356.2,127.2 356.4,127.0 356.6,128.4 356.8,127.5 357.0,128.9 357.2,127.1 357.4,128.3 357.6,126.1 357.8,126.6 358.0,129.4 358.2,128.2 358.4,127.4 358.6,127.4 358.8,128.5 359.0,126.7 359.3,126.4 359.5,129.4 359.7,129.3 359.9,128.9 360.1,130.5 360.3,128.9 360.5,128.5 360.7,128.6 360.9,128.0 361.1,127.1 361.3,128.3 361.5,128.8 361.7,129.7 361.9,128.2 362.1,129.4 362.3,129.6 362.5,129.2 362.7,127.5 362.9,129.1 363.1,128.3 363.3,127.1 363.5,127.4 363.7,127.1 363.9,126.9 364.1,129.1 364.3,127.1 364.6,126.0 364.8,126.8 365.0,127.0 365.2,128.6 365.4,129.9 365.6,126.1 365.8,126.8 366.0,127.6 366.2,126.6 366.4,127.8 366.6,127.1 366.8,126.6 367.0,128.1 367.2,126.5 367.4,126.5 367.6,124.8 367.8,127.1 368.0,127.4 368.2,126.3 368.4,125.7 368.6,127.2 368.8,126.7 369.0,128.3 369.2,127.6 369.4,129.4 369.6,127.7 369.9,127.7 370.1,126.0 370.3,125.9 370.5,126.8 370.7,127.0 370.9,126.4 371.1,125.6 371.3,128.2 371.5,127.0 371.7,126.9 371.9,126.0 372.1,128.1 372.3,129.0 372.5,127.0 372.7,126.7 372.9,126.0 373.1,126.7 373.3,127.3 373.5,125.8 373.7,126.9 373.9,126.3 374.1,127.8 374.3,126.7 374.5,127.5 374.7,126.4 374.9,127.1 375.2,127.8 375.4,127.7 375.6,125.9 375.8,127.6 376.0,127.0 376.2,127.4 376.4,126.7 376.6,127.2 376.8,127.3 377.0,127.6 377.2,125.7 377.4,125.2 377.6,128.0 377.8,127.9 378.0,127.1 378.2,125.5 378.4,128.1 378.6,126.9 378.8,127.4 379.0,126.9 379.2,128.4 379.4,127.6 379.6,129.9 379.8,126.8 380.0,130.0 380.2,128.2 380.5,128.0 380.7,129.1 380.9,130.2 381.1,125.9 381.3,127.9 381.5,127.4 381.7,129.9 381.9,129.3 382.1,129.0 382.3,128.7 382.5,130.6 382.7,130.3 382.9,128.4 383.1,128.3 383.3,126.6 383.5,128.5 383.7,128.6 383.9,129.1 384.1,128.5 384.3,128.0 384.5,127.7 384.7,129.0 384.9,127.1 385.1,126.3 385.3,126.7 385.5,128.0 385.8,125.0 386.0,125.8 386.2,126.7 386.4,125.2 386.6,127.2 386.8,125.5 387.0,125.2 387.2,126.2 387.4,126.3 387.6,125.8 387.8,126.0 388.0,128.9 388.2,126.2 388.4,127.6 388.6,125.2 388.8,124.5 389.0,125.8 389.2,126.6 389.4,127.2 389.6,128.0 389.8,125.6 390.0,126.3 390.2,126.3 390.4,125.9 390.6,126.5 390.8,126.5 391.1,127.4 391.3,126.4 391.5,127.1 391.7,125.4 391.9,125.9 392.1,125.4 392.3,125.0 392.5,125.9 392.7,126.8 392.9,125.7 393.1,125.1 393.3,125.1 393.5,125.0 393.7,126.1 393.9,126.8 394.1,127.3 394.3,126.7 394.5,126.3 394.7,125.4 394.9,125.4 395.1,127.4 395.3,126.0 395.5,126.1 395.7,127.0 395.9,126.1 396.1,125.4 396.4,125.6 396.6,128.3 396.8,126.2 397.0,126.5 397.2,126.2 397.4,127.7 397.6,125.6 397.8,127.6 398.0,127.0 398.2,126.9 398.4,127.6 398.6,126.5 398.8,125.9 399.0,127.8 399.2,128.2 399.4,126.4 399.6,126.7 399.8,127.2 400.0,126.5 400.2,127.0 400.4,125.5 400.6,127.2 400.8,128.1 401.0,124.3 401.2,125.4 401.4,125.7 401.7,124.9 401.9,128.8 402.1,127.6 402.3,126.5 402.5,128.3 402.7,127.9 402.9,128.3 403.1,127.9 403.3,128.0 403.5,127.9 403.7,128.1 403.9,128.1 404.1,128.1 404.3,128.3 404.5,126.2 404.7,127.5 404.9,127.3 405.1,126.1 405.3,126.9 405.5,128.4 405.7,127.5 405.9,126.6 406.1,126.7 406.3,126.7 406.5,125.7 406.7,127.5 406.9,125.6 407.2,126.8 407.4,127.4 407.6,127.2 407.8,126.4 408.0,125.4 408.2,125.7 408.4,125.6 408.6,125.8 408.8,127.1 409.0,127.0 409.2,125.9 409.4,127.3 409.6,125.2 409.8,125.5 410.0,127.8 410.2,127.6 410.4,127.8 410.6,128.6 410.8,126.6 411.0,125.0 411.2,127.4 411.4,125.6 411.6,126.8 411.8,127.0 412.0,126.4 412.2,127.1 412.5,126.6 412.7,128.2 412.9,127.7 413.1,126.8 413.3,126.0 413.5,127.2 413.7,126.0 413.9,126.8 414.1,125.7 414.3,126.0 414.5,126.7 414.7,127.8 414.9,126.0 415.1,127.1 415.3,126.8 415.5,127.4 415.7,126.2 415.9,126.9 416.1,127.9 416.3,128.3 416.5,127.0 416.7,126.7 416.9,127.4 417.1,127.2 417.3,127.2 417.5,128.7 417.8,126.6 418.0,125.6 418.2,126.5 418.4,126.3 418.6,127.1 418.8,126.6 419.0,127.2 419.2,125.7 419.4,127.5 419.6,126.7 419.8,127.2 420.0,126.9 420.2,126.1 420.4,127.0 420.6,126.8 420.8,126.4 421.0,127.2 421.2,125.9 421.4,126.0 421.6,126.0 421.8,127.8 422.0,126.7 422.2,128.8 422.4,126.6 422.6,127.5 422.8,126.2 423.1,129.0 423.3,128.6 423.5,126.0 423.7,126.2 423.9,128.7 424.1,126.4 424.3,127.9 424.5,128.9 424.7,128.0 424.9,127.7 425.1,128.8 425.3,128.5 425.5,127.6 425.7,129.5 425.9,126.7 426.1,127.1 426.3,128.7 426.5,129.9 426.7,127.5 426.9,127.6 427.1,127.8 427.3,129.2 427.5,129.9 427.7,128.5 427.9,127.4 428.1,127.7 428.4,127.6 428.6,127.2 428.8,128.0 429.0,126.5 429.2,126.6 429.4,125.6 429.6,126.7 429.8,126.9 430.0,126.1 430.2,127.5 430.4,126.7 430.6,128.0 430.8,127.4 431.0,124.9 431.2,127.2 431.4,127.4 431.6,128.0 431.8,128.0 432.0,125.6 432.2,127.7 432.4,127.4 432.6,125.7 432.8,128.5 433.0,127.7 433.2,127.7 433.4,126.7 433.7,126.9 433.9,128.7 434.1,127.6 434.3,128.3 434.5,127.4 434.7,127.8 434.9,127.2 435.1,127.8 435.3,127.0 435.5,129.6 435.7,127.4 435.9,127.3 436.1,127.4 436.3,128.3 436.5,125.8 436.7,129.0 436.9,126.8 437.1,127.9 437.3,128.8 437.5,126.8 437.7,128.0 437.9,129.1 438.1,128.4 438.3,126.5 438.5,127.6 438.7,127.4 439.0,128.8 439.2,129.1 439.4,128.8 439.6,129.4 439.8,129.6 440.0,127.5 440.2,128.3 440.4,129.7 440.6,127.1 440.8,129.6 441.0,130.1 441.2,128.0 441.4,126.7 441.6,128.9 441.8,130.4 442.0,129.2 442.2,127.3 442.4,127.6 442.6,129.1 442.8,129.7 443.0,126.3 443.2,127.8 443.4,125.4 443.6,128.7 443.8,127.6 444.0,127.6 444.3,127.3 444.5,128.8 444.7,128.0 444.9,126.2 445.1,128.0 445.3,127.8 445.5,128.4 445.7,127.7 445.9,128.2 446.1,128.2 446.3,127.3 446.5,127.9 446.7,127.1 446.9,128.2 447.1,127.0 447.3,128.9 447.5,127.7 447.7,126.9 447.9,127.0 448.1,126.5 448.3,128.8 448.5,127.0 448.7,128.0 448.9,127.6 449.1,126.5 449.3,127.4 449.6,126.8 449.8,128.7 450.0,127.1 450.2,127.3 450.4,129.4 450.6,128.2 450.8,130.0 451.0,127.9 451.2,128.2 451.4,129.4 451.6,128.8 451.8,128.8 452.0,129.2 452.2,128.6 452.4,128.9 452.6,128.9 452.8,128.2 453.0,128.9 453.2,128.4 453.4,128.9 453.6,130.3 453.8,130.0 454.0,129.4 454.2,129.7 454.4,131.2 454.6,128.3 454.9,129.2 455.1,128.5 455.3,128.1 455.5,128.5 455.7,128.3 455.9,127.3 456.1,129.5 456.3,128.5 456.5,127.9 456.7,128.6 456.9,127.8 457.1,126.8 457.3,128.0 457.5,129.3 457.7,128.9 457.9,127.9 458.1,127.5 458.3,128.2 458.5,129.0 458.7,126.5 458.9,129.2 459.1,129.0 459.3,126.4 459.5,127.7 459.7,128.2 459.9,127.2 460.2,127.4 460.4,128.4 460.6,127.6 460.8,128.5 461.0,127.2 461.2,127.7 461.4,128.6 461.6,127.9 461.8,128.2 462.0,127.2 462.2,129.3 462.4,127.0 462.6,128.8 462.8,128.1 463.0,129.4 463.2,126.1 463.4,128.4 463.6,127.9 463.8,129.1 464.0,128.1 464.2,128.8 464.4,128.0 464.6,129.7 464.8,129.1 465.0,126.8 465.2,128.0 465.5,127.2 465.7,128.6 465.9,128.3 466.1,127.5 466.3,129.0 466.5,127.4 466.7,127.2 466.9,127.4 467.1,126.0 467.3,128.6 467.5,127.7 467.7,128.3 467.9,127.6 468.1,128.9 468.3,128.4 468.5,129.3 468.7,128.7 468.9,128.2 469.1,129.8 469.3,129.6 469.5,129.2 469.7,130.3 469.9,126.8 470.1,130.2 470.3,127.7 470.5,128.6 470.7,130.2 471.0,127.9 471.2,129.7 471.4,128.2 471.6,128.6 471.8,128.7 472.0,128.2 472.2,128.0 472.4,127.2 472.6,130.2 472.8,129.5 473.0,127.8 473.2,127.3 473.4,128.8 473.6,127.8 473.8,129.7 474.0,128.1 474.2,128.6 474.4,126.6 474.6,128.3 474.8,128.0 475.0,126.7 475.2,128.0 475.4,128.6 475.6,128.3 475.8,129.1 476.0,127.9 476.3,126.9 476.5,127.1 476.7,128.7 476.9,129.3 477.1,129.6 477.3,127.2 477.5,128.2 477.7,128.1 477.9,127.6 478.1,127.9 478.3,127.7 478.5,128.9 478.7,127.4 478.9,127.3 479.1,129.9 479.3,127.2 479.5,126.4 479.7,128.3 479.9,129.3 480.1,126.7 480.3,129.6 480.5,127.4 480.7,128.5 480.9,127.7 481.1,129.2 481.3,128.8 481.6,129.5 481.8,129.3 482.0,127.6 482.2,128.1 482.4,129.5 482.6,127.9 482.8,127.9 483.0,129.7 483.2,127.9 483.4,129.9 483.6,130.7 483.8,128.6 484.0,130.2 484.2,128.7 484.4,127.9 484.6,127.6 484.8,129.7 485.0,128.6 485.2,128.4 485.4,129.1 485.6,127.8 485.8,128.8 486.0,128.5 486.2,127.8 486.4,128.8 486.6,129.0 486.9,130.0 487.1,129.7 487.3,126.7 487.5,128.1 487.7,127.7 487.9,127.5 488.1,130.2 488.3,129.4 488.5,127.2 488.7,127.3 488.9,129.6 489.1,128.3 489.3,127.4 489.5,126.9 489.7,127.8 489.9,126.6 490.1,129.0 490.3,127.0 490.5,125.7 490.7,127.2 490.9,127.1 491.1,128.2 491.3,128.2 491.5,127.8 491.7,127.3 491.9,127.7 492.2,127.0 492.4,127.5 492.6,127.3 492.8,127.7 493.0,128.3 493.2,126.6 493.4,128.2 493.6,127.2 493.8,128.0 494.0,127.1 494.2,127.3 494.4,128.2 494.6,128.8 494.8,126.5 495.0,127.0 495.2,127.8 495.4,126.3 495.6,127.3 495.8,126.6 496.0,127.0 496.2,128.6 496.4,126.0 496.6,127.3 496.8,127.2 497.0,127.6 497.2,128.5 497.5,130.1 497.7,126.3 497.9,127.7 498.1,126.1 498.3,128.5 498.5,127.6 498.7,127.8 498.9,127.5 499.1,128.0 499.3,128.3 499.5,128.1 499.7,127.0 499.9,127.9 500.1,127.5 500.3,128.2 500.5,127.0 500.7,128.6 500.9,126.8 501.1,127.1 501.3,128.3 501.5,126.5 501.7,129.4 501.9,127.2 502.1,128.8 502.3,127.3 502.5,126.9 502.8,127.0 503.0,126.5 503.2,129.6 503.4,126.9 503.6,128.1 503.8,129.0 504.0,127.8 504.2,129.0 504.4,129.0 504.6,127.9 504.8,126.9 505.0,127.3 505.2,127.0 505.4,127.5 505.6,127.9 505.8,127.9 506.0,128.7 506.2,127.1 506.4,130.6 506.6,129.6 506.8,126.7 507.0,129.1 507.2,128.9 507.4,127.8 507.6,127.6 507.8,129.3 508.1,127.9 508.3,127.4 508.5,128.7 508.7,127.4 508.9,128.9 509.1,126.4 509.3,130.1 509.5,128.8 509.7,127.3 509.9,127.6 510.1,128.2 510.3,127.9 510.5,127.2 510.7,126.3 510.9,126.5 511.1,126.9 511.3,127.9 511.5,127.5 511.7,126.0 511.9,128.1 512.1,126.2 512.3,126.5 512.5,126.5 512.7,128.1 512.9,127.2 513.1,126.3 513.4,126.7 513.6,127.3 513.8,127.3 514.0,127.2 514.2,126.5 514.4,127.7 514.6,127.6 514.8,127.3 515.0,128.1 515.2,126.0 515.4,127.3 515.6,126.6 515.8,125.9 516.0,127.4 516.2,127.0 516.4,127.1 516.6,124.5 516.8,126.4 517.0,125.9 517.2,128.2 517.4,128.4 517.6,127.0 517.8,128.5 518.0,127.6 518.2,127.2 518.4,127.5 518.7,126.2 518.9,127.0 519.1,125.7 519.3,126.7 519.5,127.7 519.7,125.9 519.9,126.5 520.1,126.8 520.3,126.3 520.5,125.5 520.7,127.2 520.9,126.4 521.1,128.0 521.3,128.0 521.5,128.8 521.7,127.5 521.9,126.5 522.1,126.5 522.3,126.1 522.5,126.9 522.7,126.3 522.9,128.9 523.1,128.8 523.3,129.1 523.5,127.8 523.7,125.7 524.0,128.5 524.2,128.6 524.4,128.4 524.6,127.1 524.8,126.9 525.0,127.2 525.2,127.5 525.4,126.8 525.6,128.9 525.8,127.6 526.0,127.9 526.2,125.7 526.4,127.5 526.6,127.9 526.8,127.3 527.0,125.7 527.2,124.1 527.4,127.8 527.6,125.8 527.8,126.7 528.0,126.0 528.2,125.8 528.4,127.2 528.6,125.4 528.8,127.4 529.0,126.1 529.2,127.7 529.5,125.9 529.7,126.3 529.9,126.5 530.1,126.7 530.3,126.8 530.5,126.7 530.7,127.3 530.9,127.2 531.1,125.0 531.3,128.4 531.5,126.3 531.7,126.3 531.9,126.4 532.1,125.8 532.3,125.9 532.5,127.9 532.7,127.3 532.9,126.1 533.1,126.9 533.3,126.2 533.5,128.5 533.7,125.9 533.9,126.5 534.1,126.4 534.3,126.2 534.5,127.1 534.8,126.8 535.0,126.7 535.2,124.2 535.4,126.4 535.6,128.7 535.8,125.5 536.0,126.5 536.2,126.5 536.4,125.9 536.6,127.7 536.8,127.0 537.0,125.2 537.2,126.0 537.4,126.0 537.6,126.6 537.8,125.7 538.0,126.5 538.2,127.0 538.4,124.6 538.6,124.9 538.8,125.3 539.0,127.3 539.2,127.0 539.4,125.0 539.6,124.5 539.8,125.5 540.1,127.2 540.3,127.0 540.5,124.7 540.7,126.7 540.9,126.0 541.1,125.0 541.3,128.6 541.5,127.5 541.7,126.4 541.9,125.6 542.1,126.9 542.3,127.8 542.5,125.3 542.7,127.1 542.9,128.9 543.1,128.5 543.3,127.9 543.5,129.8 543.7,128.7 543.9,127.3 544.1,128.3 544.3,127.1 544.5,127.8 544.7,128.4 544.9,127.7 545.1,126.4 545.4,128.1 545.6,129.8 545.8,127.0 546.0,128.1 546.2,127.3 546.4,126.8 546.6,126.6 546.8,126.3 547.0,125.6 547.2,124.6 547.4,126.9 547.6,125.4 547.8,126.5 548.0,126.4 548.2,125.3 548.4,126.9 548.6,126.2 548.8,128.0 549.0,126.9 549.2,127.1 549.4,127.4 549.6,127.2 549.8,126.3 550.0,127.0 550.2,125.2 550.4,128.3 550.7,126.8 550.9,125.9 551.1,127.2 551.3,126.3 551.5,128.3 551.7,125.4 551.9,126.6 552.1,127.5 552.3,127.1 552.5,127.1 552.7,126.3 552.9,127.0 553.1,126.5 553.3,125.7 553.5,126.1 553.7,125.8 553.9,128.3 554.1,126.2 554.3,127.0 554.5,125.4 554.7,126.8 554.9,126.1 555.1,124.6 555.3,127.3 555.5,126.3 555.7,126.8 556.0,125.5 556.2,126.2 556.4,124.9 556.6,128.2 556.8,126.8 557.0,127.7 557.2,129.0 557.4,126.9 557.6,129.8 557.8,127.2 558.0,125.2 558.2,127.6 558.4,128.9 558.6,126.9 558.8,127.5 559.0,128.3 559.2,128.9 559.4,126.7 559.6,127.8 559.8,127.9 560.0,128.3 560.2,128.4 560.4,127.7 560.6,124.8 560.8,128.6 561.0,127.5 561.3,126.4 561.5,126.5 561.7,125.0 561.9,127.8 562.1,128.6 562.3,126.0 562.5,127.1 562.7,126.4 562.9,128.3 563.1,126.0 563.3,127.0 563.5,126.6 563.7,125.8 563.9,126.8 564.1,127.5 564.3,126.9 564.5,127.9 564.7,125.5 564.9,127.4 565.1,126.8 565.3,125.7 565.5,126.3 565.7,127.3 565.9,126.1 566.1,125.8 566.3,126.3 566.6,129.4 566.8,127.5 567.0,125.6 567.2,126.6 567.4,125.4 567.6,128.0 567.8,126.9 568.0,127.2 568.2,127.5 568.4,126.8 568.6,127.0 568.8,128.8 569.0,125.7 569.2,126.1 569.4,129.1 569.6,125.5 569.8,126.4 570.0,129.3 570.2,127.0 570.4,126.4 570.6,127.2 570.8,127.1 571.0,128.2 571.2,127.4 571.4,126.5 571.6,126.6 571.9,129.5 572.1,129.0 572.3,130.6 572.5,127.3 572.7,128.5 572.9,130.3 573.1,128.1 573.3,128.8 573.5,127.8 573.7,127.0 573.9,128.0 574.1,126.4 574.3,128.7 574.5,128.1 574.7,127.9 574.9,127.2 575.1,127.7 575.3,127.5 575.5,127.4 575.7,127.9 575.9,127.2 576.1,126.6 576.3,128.0 576.5,127.8 576.7,126.6 576.9,127.4 577.2,127.3 577.4,129.1 577.6,128.0 577.8,126.7 578.0,127.5 578.2,126.3 578.4,127.6 578.6,127.9 578.8,127.1 579.0,126.7 579.2,127.0 579.4,128.6 579.6,126.6 579.8,125.0 580.0,125.8 580.2,126.7 580.4,127.5 580.6,127.5 580.8,129.1 581.0,126.4 581.2,128.5 581.4,127.8 581.6,126.6 581.8,127.3 582.0,128.2 582.2,128.9 582.5,127.7 582.7,129.1 582.9,126.7 583.1,127.7 583.3,128.9 583.5,126.9 583.7,128.0 583.9,127.7 584.1,128.4 584.3,125.9 584.5,127.9 584.7,127.6 584.9,128.5 585.1,127.1 585.3,127.4 585.5,127.5 585.7,129.4 585.9,128.1 586.1,127.1 586.3,127.4 586.5,127.9 586.7,127.8 586.9,125.1 587.1,127.7 587.3,127.9 587.5,127.7 587.8,128.2 588.0,127.9 588.2,128.5 588.4,127.9 588.6,126.9 588.8,127.2 589.0,126.0 589.2,127.3 589.4,129.0 589.6,128.2 589.8,127.8 590.0,128.4 590.2,128.7 590.4,127.8 590.6,128.2 590.8,127.9 591.0,126.2 591.2,129.0 591.4,125.3 591.6,128.9 591.8,128.9 592.0,126.7 592.2,127.7 592.4,129.4 592.6,128.8 592.8,128.1 593.0,127.4 593.3,127.3 593.5,127.4 593.7,128.0 593.9,125.8 594.1,127.7 594.3,128.7 594.5,127.0 594.7,128.0 594.9,127.0 595.1,128.5 595.3,129.3 595.5,129.5 595.7,127.5 595.9,129.0 596.1,127.9 596.3,128.2 596.5,128.7 596.7,127.1 596.9,127.5 597.1,127.5 597.3,130.3 597.5,127.3 597.7,128.1 597.9,128.5 598.1,128.2 598.3,127.8 598.6,126.7 598.8,126.5 599.0,129.3 599.2,126.9 599.4,128.0 599.6,131.0 599.8,127.5 600.0,127.2 600.2,129.7 600.4,127.9 600.6,128.9 600.8,128.2 601.0,126.9 601.2,127.6 601.4,126.5 601.6,127.7 601.8,127.6 602.0,129.7 602.2,129.0 602.4,127.1 602.6,127.5 602.8,127.8 603.0,127.5 603.2,127.8 603.4,127.5 603.6,128.6 603.9,127.5 604.1,128.4 604.3,126.7 604.5,128.8 604.7,127.8 604.9,127.3 605.1,127.8 605.3,128.7 605.5,128.2 605.7,129.4 605.9,129.0 606.1,127.1 606.3,127.9 606.5,128.0 606.7,129.7 606.9,127.3 607.1,128.8 607.3,127.8 607.5,128.3 607.7,127.6 607.9,128.8 608.1,127.4 608.3,127.2 608.5,128.8 608.7,129.0 608.9,127.4 609.2,128.7 609.4,130.4 609.6,127.5 609.8,129.0 610.0,128.5 610.2,129.5 610.4,127.5 610.6,128.4 610.8,128.4 611.0,128.3 611.2,127.4 611.4,127.8 611.6,128.5 611.8,127.8 612.0,127.7 612.2,128.6 612.4,127.9 612.6,127.9 612.8,129.3 613.0,127.9 613.2,128.2 613.4,128.3 613.6,127.8 613.8,127.0 614.0,129.5 614.2,128.2 614.5,126.7 614.7,127.3 614.9,128.4 615.1,128.3 615.3,128.2 615.5,128.2 615.7,127.2 615.9,126.9 616.1,128.9 616.3,128.2 616.5,128.3 616.7,128.7 616.9,128.3 617.1,127.9 617.3,127.4 617.5,127.8 617.7,128.1 617.9,128.7 618.1,128.6 618.3,127.9 618.5,130.0 618.7,129.0 618.9,128.7 619.1,129.2 619.3,129.4 619.5,127.9 619.8,127.5 620.0,127.3 620.2,127.6 620.4,129.7 620.6,128.0 620.8,128.1 621.0,128.1 621.2,127.2 621.4,127.7 621.6,127.0 621.8,128.7 622.0,128.2 622.2,129.0 622.4,127.7 622.6,127.8 622.8,127.2 623.0,129.0 623.2,127.3 623.4,128.7 623.6,129.2 623.8,128.0 624.0,126.9 624.2,130.0 624.4,128.6 624.6,126.5 624.8,128.5 625.1,127.0 625.3,127.9 625.5,128.0 625.7,128.8 625.9,127.9 626.1,128.6 626.3,128.3 626.5,128.6 626.7,127.6 626.9,127.8 627.1,129.1 627.3,128.5 627.5,127.9 627.7,127.7 627.9,129.4 628.1,127.8 628.3,128.1 628.5,128.2 628.7,127.9 628.9,128.7 629.1,129.2 629.3,129.5 629.5,127.6 629.7,127.8 629.9,129.2 630.1,126.3 630.4,128.7 630.6,128.9 630.8,126.3 631.0,128.4 631.2,129.6 631.4,128.4 631.6,129.7 631.8,129.6 632.0,128.6 632.2,130.4 632.4,129.9 632.6,129.3 632.8,128.3 633.0,130.5 633.2,128.6 633.4,128.4 633.6,127.9 633.8,127.9 634.0,127.1 634.2,128.3 634.4,128.5 634.6,126.8 634.8,128.1 635.0,126.7 635.2,128.5 635.4,128.5 635.7,127.9 635.9,127.8 636.1,129.3 636.3,125.4 636.5,127.7 636.7,128.9 636.9,129.2 637.1,128.3 637.3,126.1 637.5,126.1 637.7,128.6 637.9,127.6 638.1,129.0 638.3,128.4 638.5,127.0 638.7,127.0 638.9,127.6 639.1,126.1 639.3,128.9 639.5,126.8 639.7,126.2 639.9,127.1 640.1,127.3 640.3,128.0 640.5,127.3 640.7,128.6 641.0,128.4 641.2,126.3 641.4,126.4 641.6,127.8 641.8,128.0 642.0,125.0 642.2,129.2 642.4,129.0 642.6,126.7 642.8,128.5 643.0,127.5 643.2,128.2 643.4,129.5 643.6,126.2 643.8,129.1 644.0,128.5 644.2,125.2 644.4,127.0 644.6,128.2 644.8,128.4 645.0,126.8 645.2,128.8 645.4,130.5 645.6,126.3 645.8,127.6 646.0,128.2 646.3,127.1 646.5,127.5 646.7,126.5 646.9,126.6 647.1,128.0 647.3,127.9 647.5,129.5 647.7,127.4 647.9,124.2 648.1,126.3 648.3,127.6 648.5,127.5 648.7,127.4 648.9,129.3 649.1,128.0 649.3,126.4 649.5,126.2 649.7,127.3 649.9,126.2 650.1,129.0 650.3,126.1 650.5,127.4 650.7,126.6 650.9,127.3 651.1,126.2 651.3,127.3 651.5,128.8 651.8,128.6 652.0,126.1 652.2,126.9 652.4,128.4 652.6,127.5 652.8,126.0 653.0,126.3 653.2,128.7 653.4,125.6 653.6,127.0 653.8,126.3 654.0,127.6 654.2,128.7 654.4,128.1 654.6,126.3 654.8,126.8 655.0,126.7 655.2,125.5 655.4,127.3 655.6,126.0 655.8,126.9 656.0,126.8 656.2,127.6 656.4,126.2 656.6,126.9 656.8,129.6 657.1,125.6 657.3,128.3 657.5,128.6 657.7,128.4 657.9,127.9 658.1,126.3 658.3,127.6 658.5,127.1 658.7,126.1 658.9,130.0 659.1,127.3 659.3,127.1 659.5,125.9 659.7,127.1 659.9,128.5 660.1,126.8 660.3,124.0 660.5,126.5 660.7,127.2 660.9,124.4 661.1,127.7 661.3,126.9 661.5,125.6 661.7,125.6 661.9,127.9 662.1,126.1 662.4,129.6 662.6,126.4 662.8,127.0 663.0,126.5 663.2,127.3 663.4,125.9 663.6,125.7 663.8,129.4 664.0,127.9 664.2,125.2 664.4,126.8 664.6,127.4 664.8,126.0 665.0,126.7 665.2,126.6 665.4,128.3 665.6,125.4 665.8,126.5 666.0,125.9 666.2,127.2 666.4,127.6 666.6,126.9 666.8,128.0 667.0,124.5 667.2,127.2 667.4,125.1 667.7,126.7 667.9,125.8 668.1,127.1 668.3,124.4 668.5,125.8 668.7,126.7 668.9,126.2 669.1,126.6 669.3,127.4 669.5,127.2 669.7,126.7 669.9,127.2 670.1,126.5 670.3,126.7 670.5,128.4 670.7,127.2 670.9,128.1 671.1,126.3 671.3,127.6 671.5,128.2 671.7,124.2 671.9,125.6 672.1,126.7 672.3,128.1 672.5,126.1 672.7,127.3 673.0,125.6 673.2,128.3 673.4,126.1 673.6,124.4 673.8,124.5 674.0,127.3 674.2,126.1 674.4,125.5 674.6,128.4 674.8,127.1 675.0,128.0 675.2,127.6 675.4,126.3 675.6,126.2 675.8,127.6 676.0,125.3 676.2,126.1 676.4,125.6 676.6,125.8 676.8,126.6 677.0,125.0 677.2,126.3 677.4,126.8 677.6,125.4 677.8,126.4 678.0,127.1 678.3,128.0 678.5,127.6 678.7,126.1 678.9,126.5 679.1,126.3 679.3,128.5 679.5,125.1 679.7,126.0 679.9,125.8 680.1,127.3 680.3,127.4 680.5,127.7 680.7,126.6 680.9,128.1 681.1,125.8 681.3,126.8 681.5,126.9 681.7,126.3 681.9,126.5 682.1,126.3 682.3,126.5 682.5,126.6 682.7,126.8 682.9,125.6 683.1,127.1 683.3,125.9 683.6,127.0 683.8,126.6 684.0,126.3 684.2,127.3 684.4,126.3 684.6,126.5 684.8,126.6 685.0,127.2 685.2,126.4 685.4,127.0 685.6,126.9 685.8,125.9 686.0,127.3 686.2,126.3 686.4,124.9 686.6,125.6 686.8,127.4 687.0,125.5 687.2,127.3 687.4,124.4 687.6,126.1 687.8,126.0 688.0,126.7 688.2,128.5 688.4,128.4 688.6,126.6 688.9,125.7 689.1,128.3 689.3,128.5 689.5,125.9 689.7,127.2 689.9,128.2 690.1,126.6 690.3,125.7 690.5,125.4 690.7,126.4 690.9,125.1 691.1,127.2 691.3,128.1 691.5,125.5 691.7,127.8 691.9,127.7 692.1,126.2 692.3,125.9 692.5,125.1 692.7,127.8 692.9,125.8 693.1,126.4 693.3,125.4 693.5,126.2 693.7,124.5 693.9,125.4 694.2,125.8 694.4,126.9 694.6,127.5 694.8,128.6 695.0,126.7 695.2,128.0 695.4,126.8 695.6,127.0 695.8,126.2 696.0,125.7 696.2,127.6 696.4,126.1 696.6,127.4 696.8,126.3 697.0,127.2 697.2,125.1 697.4,127.7 697.6,128.4 697.8,127.4 698.0,128.2 698.2,125.5 698.4,127.8 698.6,127.4 698.8,126.6 699.0,125.7 699.2,126.7 699.5,126.0 699.7,125.3 699.9,127.6 700.1,126.8 700.3,126.4 700.5,126.5 700.7,125.1 700.9,127.5 701.1,126.6 701.3,127.1 701.5,126.8 701.7,126.0 701.9,126.0 702.1,126.2 702.3,125.4 702.5,127.2 702.7,126.4 702.9,126.2 703.1,128.3 703.3,126.9 703.5,127.6 703.7,126.8 703.9,126.3 704.1,126.8 704.3,125.2 704.5,126.9 704.8,126.1 705.0,127.6 705.2,127.5 705.4,127.0 705.6,126.8 705.8,128.8 706.0,128.5 706.2,127.3 706.4,127.6 706.6,128.8 706.8,127.8 707.0,128.4 707.2,127.7 707.4,128.7 707.6,126.1 707.8,128.9 708.0,127.1 708.2,128.5 708.4,127.4 708.6,128.3 708.8,126.1 709.0,126.8 709.2,126.7 709.4,127.8 709.6,128.4 709.8,126.2 710.1,126.8 710.3,127.5 710.5,126.2 710.7,128.1 710.9,124.8 711.1,126.7 711.3,127.8 711.5,126.0 711.7,128.8 711.9,126.2 712.1,124.8 712.3,126.1 712.5,125.7 712.7,126.9 712.9,127.6 713.1,126.8 713.3,127.2 713.5,128.4 713.7,126.2 713.9,127.4 714.1,127.8 714.3,127.8 714.5,126.6 714.7,129.0 714.9,126.6 715.1,127.8 715.3,128.8 715.6,127.5 715.8,128.1 716.0,127.3 716.2,129.1 716.4,127.5 716.6,127.4 716.8,128.2 717.0,129.8 717.2,128.6 717.4,127.9 717.6,128.5 717.8,128.2 718.0,128.1 718.2,126.9 718.4,127.9 718.6,127.5 718.8,126.2 719.0,127.7 719.2,126.0 719.4,127.3 719.6,126.8 719.8,126.1 720.0,126.3 720.2,127.4 720.4,127.5 720.6,127.5 720.9,127.5 721.1,126.6 721.3,126.3 721.5,127.7 721.7,128.0 721.9,129.2 722.1,126.4 722.3,126.7 722.5,128.7 722.7,126.3 722.9,126.7 723.1,126.3 723.3,128.2 723.5,126.4 723.7,127.0 723.9,126.8 724.1,128.2 724.3,126.6 724.5,127.3 724.7,125.6 724.9,127.0 725.1,127.9 725.3,127.4 725.5,125.2 725.7,128.3 725.9,127.6 726.2,126.9 726.4,127.3 726.6,125.9 726.8,125.8 727.0,125.9 727.2,128.2 727.4,126.9 727.6,126.9 727.8,126.2 728.0,127.4 728.2,127.3 728.4,125.3 728.6,127.1 728.8,126.6 729.0,126.7 729.2,127.6 729.4,126.9 729.6,126.4 729.8,128.7 730.0,127.1 730.2,127.8 730.4,129.3 730.6,127.7 730.8,128.0 731.0,126.9 731.2,126.6 731.5,126.3 731.7,127.7 731.9,127.8 732.1,127.9 732.3,129.7 732.5,127.3 732.7,126.6 732.9,128.4 733.1,127.3 733.3,126.8 733.5,127.4 733.7,128.3 733.9,126.7 734.1,126.5 734.3,127.7 734.5,128.6 734.7,129.3 734.9,128.5 735.1,126.9 735.3,128.5 735.5,126.8 735.7,127.2 735.9,126.9 736.1,127.9 736.3,128.2 736.5,129.5 736.8,126.7 737.0,126.5 737.2,127.6 737.4,127.5 737.6,128.1 737.8,127.9 738.0,129.6 738.2,127.9 738.4,127.4 738.6,128.9 738.8,128.1 739.0,128.1 739.2,128.9 739.4,128.5 739.6,127.8 739.8,129.4 740.0,128.3 740.2,128.3 740.4,128.5 740.6,127.2 740.8,128.3 741.0,128.6 741.2,128.9 741.4,129.9 741.6,126.1 741.8,128.4 742.1,128.0 742.3,126.9 742.5,127.8 742.7,128.9 742.9,129.4 743.1,126.7 743.3,129.1 743.5,128.9 743.7,125.6 743.9,129.0 744.1,128.4 744.3,128.0 744.5,127.8 744.7,130.6 744.9,127.4 745.1,126.8 745.3,129.0 745.5,127.4 745.7,126.7 745.9,128.0 746.1,127.6 746.3,125.6 746.5,128.0 746.7,128.5 746.9,128.7 747.1,128.7 747.4,127.3 747.6,128.0 747.8,128.5 748.0,128.7 748.2,127.2 748.4,127.6 748.6,127.9 748.8,129.0 749.0,129.0 749.2,127.6 749.4,129.5 749.6,128.6 749.8,128.2 750.0,127.7 750.2,127.3 750.4,128.8 750.6,126.8 750.8,127.9 751.0,127.6 751.2,126.7 751.4,128.0 751.6,128.4 751.8,129.0 752.0,128.2 752.2,129.5 752.4,126.9 752.7,128.7 752.9,127.0 753.1,125.8 753.3,126.9 753.5,129.6 753.7,126.9 753.9,130.4 754.1,128.7 754.3,128.4 754.5,129.0 754.7,127.8 754.9,129.3 755.1,129.4 755.3,127.2 755.5,127.9 755.7,128.4 755.9,127.8 756.1,126.6 756.3,129.1 756.5,128.5 756.7,127.9 756.9,126.5 757.1,128.7 757.3,127.7 757.5,128.9 757.7,127.9 758.0,128.2 758.2,129.4 758.4,128.7 758.6,127.3 758.8,128.0 759.0,128.8 759.2,128.5 759.4,126.4 759.6,127.5 759.8,129.1 760.0,127.9 760.2,126.7 760.4,128.4 760.6,128.0 760.8,127.5 761.0,127.4 761.2,127.6 761.4,128.7 761.6,129.3 761.8,128.4 762.0,127.3 762.2,129.1 762.4,127.4 762.6,128.2 762.8,129.1 763.0,128.0 763.3,128.2 763.5,127.5 763.7,128.4 763.9,129.2 764.1,127.8 764.3,128.4 764.5,130.2 764.7,128.3 764.9,129.2 765.1,128.8 765.3,129.1 765.5,129.5 765.7,129.6 765.9,129.4 766.1,130.7 766.3,129.6 766.5,128.0 766.7,128.5 766.9,129.6 767.1,128.0 767.3,127.7 767.5,128.9 767.7,127.6 767.9,127.7 768.1,129.1 768.3,129.0 768.6,126.9 768.8,127.6 769.0,127.4 769.2,126.9 769.4,127.9 769.6,129.9 769.8,126.0 770.0,128.5 770.2,127.8 770.4,128.0 770.6,129.8 770.8,128.0 771.0,129.1 771.2,128.1 771.4,128.3 771.6,128.9 771.8,128.9 772.0,128.0 772.2,128.9 772.4,127.3 772.6,129.0 772.8,128.5 773.0,129.1 773.2,129.3 773.4,128.3 773.6,128.3 773.9,127.4 774.1,128.0 774.3,128.9 774.5,128.5 774.7,128.3 774.9,128.7 775.1,126.3 775.3,128.1 775.5,127.8 775.7,127.2 775.9,128.2 776.1,126.6 776.3,129.3 776.5,128.2 776.7,129.6 776.9,127.7 777.1,128.7 777.3,126.3 777.5,125.6 777.7,127.4 777.9,128.3 778.1,126.5 778.3,130.0 778.5,127.0 778.7,128.1 778.9,128.3 779.1,128.2 779.4,127.8 779.6,128.9 779.8,128.5 780.0,129.2 780.2,129.2 780.4,128.5 780.6,129.7 780.8,128.8 781.0,128.7 781.2,127.8 781.4,129.1 781.6,128.1 781.8,126.9 782.0,129.7 782.2,126.3 782.4,129.1 782.6,129.2 782.8,127.2 783.0,128.2 783.2,126.3 783.4,128.6 783.6,130.0 783.8,128.4 784.0,129.0 784.2,127.6 784.4,130.0 784.7,127.9 784.9,127.9 785.1,127.1 785.3,127.1 785.5,127.4 785.7,126.6 785.9,126.9 786.1,127.9 786.3,128.7 786.5,127.8 786.7,127.2 786.9,128.4 787.1,126.9 787.3,127.9 787.5,128.3 787.7,126.7 787.9,127.6 788.1,127.1 788.3,128.2 788.5,126.4 788.7,128.0 788.9,126.9 789.1,128.3 789.3,128.0 789.5,127.6 789.7,128.5 790.0,127.2 790.2,128.6 790.4,126.9 790.6,127.7 790.8,128.4 791.0,127.7 791.2,128.4 791.4,127.9 791.6,128.7 791.8,126.5 792.0,128.6 792.2,128.4 792.4,126.3 792.6,128.0 792.8,128.5 793.0,125.5 793.2,126.0 793.4,127.8 793.6,127.2 793.8,127.3 794.0,127.5 794.2,127.7 794.4,126.6 794.6,126.1 794.8,128.6 795.0,128.0 795.3,127.4 795.5,125.8 795.7,128.6 795.9,125.9 796.1,127.7 796.3,126.6 796.5,126.8 796.7,126.4 796.9,128.0 797.1,128.2 797.3,127.5 797.5,126.5 797.7,126.9 797.9,126.6 798.1,126.3 798.3,127.1 798.5,124.5 798.7,127.0 798.9,127.6 799.1,127.5 799.3,128.6 799.5,125.6 799.7,126.1 799.9,125.2 800.1,126.4 800.3,127.8 800.6,127.6 800.8,126.8 801.0,127.8 801.2,125.4 801.4,128.9 801.6,128.2 801.8,127.0 802.0,127.3 802.2,125.9 802.4,125.9 802.6,127.0 802.8,126.5 803.0,129.2 803.2,126.9 803.4,126.8 803.6,128.5 803.8,126.9 804.0,128.2 804.2,126.0 804.4,125.7 804.6,127.1 804.8,128.5 805.0,125.3 805.2,127.4 805.4,126.8 805.6,128.3 805.9,127.2 806.1,128.0 806.3,127.1 806.5,127.5 806.7,126.7 806.9,126.6 807.1,126.8 807.3,125.0 807.5,126.4 807.7,126.4 807.9,126.7 808.1,126.4 808.3,128.8 808.5,126.3 808.7,127.8 808.9,129.0 809.1,129.3 809.3,126.6 809.5,128.1 809.7,128.7 809.9,129.1 810.1,129.8 810.3,129.8 810.5,125.4 810.7,128.0 810.9,128.1 811.2,126.3 811.4,127.5 811.6,128.3 811.8,126.8 812.0,128.8 812.2,127.6 812.4,127.7 812.6,127.0 812.8,126.2 813.0,127.7 813.2,126.9 813.4,126.8 813.6,126.5 813.8,126.9 814.0,126.7 814.2,126.4 814.4,126.1 814.6,128.1 814.8,127.1 815.0,128.4 815.2,126.5 815.4,125.7 815.6,126.5 815.8,126.7 816.0,124.4 816.2,125.6 816.5,125.8 816.7,124.2 816.9,125.1 817.1,126.1 817.3,125.8 817.5,125.2 817.7,126.7 817.9,125.1 818.1,126.7 818.3,128.5 818.5,124.8 818.7,126.4 818.9,123.6 819.1,126.9 819.3,126.5 819.5,126.1 819.7,126.9 819.9,126.7 820.1,126.7 820.3,123.8 820.5,127.6 820.7,126.2 820.9,127.4 821.1,125.0 821.3,125.3 821.5,125.5 821.8,125.6 822.0,126.6 822.2,127.0 822.4,125.9 822.6,123.9 822.8,125.5 823.0,123.5 823.2,124.8 823.4,126.7 823.6,125.3 823.8,123.7 824.0,124.8 824.2,126.4 824.4,126.0 824.6,122.7 824.8,125.0 825.0,124.8 825.2,124.1 825.4,124.5 825.6,127.8 825.8,124.3 826.0,124.2 826.2,125.5 826.4,124.2 826.6,123.4 826.8,125.4 827.1,123.7 827.3,125.5 827.5,125.2 827.7,123.2 827.9,123.6 828.1,125.4 828.3,123.9 828.5,123.8 828.7,124.5 828.9,124.8 829.1,126.7 829.3,125.3 829.5,122.7 829.7,123.1 829.9,124.0 830.1,123.5 830.3,122.5 830.5,123.6 830.7,124.4 830.9,122.9 831.1,123.4 831.3,123.7 831.5,124.1 831.7,124.0 831.9,124.9 832.1,123.7 832.4,123.8 832.6,122.9 832.8,124.2 833.0,123.7 833.2,123.9 833.4,123.7 833.6,124.5 833.8,123.2 834.0,124.2 834.2,122.8 834.4,123.8 834.6,122.2 834.8,124.6 835.0,121.8" fill="none" stroke="#f4f4f4" stroke-width="1.7"/><polyline points="223.5,252.5 223.7,252.3 223.9,252.5 224.1,252.5 224.3,252.0 224.5,252.8 224.7,252.5 224.9,252.1 225.1,252.4 225.3,252.2 225.5,252.5 225.7,252.2 225.9,252.2 226.1,252.4 226.4,252.5 226.6,252.3 226.8,252.3 227.0,252.4 227.2,251.8 227.4,252.4 227.6,252.5 227.8,252.4 228.0,252.5 228.2,252.5 228.4,252.8 228.6,252.4 228.8,256.4 229.0,252.7 229.2,252.2 229.4,252.7 229.6,252.5 229.8,252.4 230.0,252.4 230.2,252.8 230.4,252.5 230.6,252.8 230.8,252.4 231.0,252.5 231.2,252.3 231.4,251.8 231.7,252.2 231.9,252.0 232.1,252.8 232.3,252.6 232.5,252.4 232.7,252.4 232.9,252.6 233.1,252.4 233.3,252.7 233.5,252.2 233.7,252.0 233.9,252.6 234.1,251.8 234.3,252.4 234.5,252.8 234.7,252.7 234.9,252.4 235.1,251.9 235.3,252.1 235.5,252.4 235.7,252.5 235.9,252.0 236.1,252.3 236.3,258.3 236.5,252.6 236.7,252.1 237.0,252.6 237.2,252.1 237.4,252.3 237.6,252.3 237.8,252.5 238.0,252.4 238.2,252.3 238.4,252.4 238.6,251.9 238.8,252.7 239.0,252.9 239.2,252.5 239.4,252.4 239.6,252.7 239.8,252.4 240.0,252.8 240.2,252.5 240.4,252.6 240.6,252.2 240.8,252.4 241.0,252.2 241.2,252.4 241.4,252.6 241.6,252.6 241.8,252.4 242.0,252.5 242.3,252.2 242.5,252.6 242.7,252.1 242.9,252.7 243.1,252.4 243.3,252.6 243.5,252.1 243.7,252.5 243.9,252.5 244.1,252.3 244.3,252.6 244.5,253.0 244.7,253.0 244.9,252.2 245.1,256.0 245.3,252.4 245.5,252.7 245.7,252.3 245.9,253.0 246.1,252.8 246.3,252.1 246.5,252.0 246.7,252.1 246.9,252.4 247.1,252.5 247.3,252.2 247.6,252.4 247.8,252.4 248.0,252.5 248.2,252.4 248.4,252.6 248.6,252.3 248.8,252.8 249.0,252.6 249.2,252.1 249.4,252.3 249.6,253.0 249.8,252.6 250.0,252.5 250.2,252.6 250.4,252.7 250.6,252.5 250.8,252.4 251.0,252.5 251.2,252.4 251.4,252.7 251.6,252.6 251.8,252.3 252.0,252.4 252.2,252.4 252.4,252.6 252.6,252.1 252.9,252.3 253.1,252.4 253.3,252.6 253.5,252.3 253.7,252.7 253.9,252.5 254.1,252.3 254.3,252.3 254.5,252.5 254.7,252.0 254.9,252.5 255.1,252.6 255.3,252.6 255.5,252.4 255.7,252.6 255.9,252.7 256.1,256.4 256.3,252.8 256.5,252.5 256.7,252.3 256.9,252.5 257.1,252.7 257.3,252.5 257.5,252.6 257.7,252.5 257.9,251.9 258.2,252.2 258.4,252.3 258.6,252.4 258.8,252.5 259.0,252.6 259.2,252.4 259.4,252.4 259.6,252.4 259.8,252.4 260.0,252.5 260.2,253.0 260.4,252.0 260.6,251.6 260.8,252.7 261.0,252.2 261.2,252.6 261.4,252.4 261.6,252.6 261.8,252.5 262.0,252.1 262.2,252.6 262.4,252.9 262.6,251.9 262.8,252.3 263.0,258.3 263.2,252.4 263.5,252.5 263.7,252.2 263.9,252.8 264.1,252.2 264.3,252.7 264.5,252.4 264.7,252.3 264.9,252.4 265.1,252.4 265.3,252.2 265.5,252.1 265.7,252.2 265.9,252.6 266.1,252.2 266.3,252.4 266.5,252.5 266.7,252.0 266.9,252.5 267.1,252.1 267.3,252.4 267.5,252.6 267.7,252.5 267.9,252.2 268.1,252.3 268.3,252.8 268.5,252.2 268.8,252.5 269.0,252.2 269.2,252.3 269.4,252.3 269.6,252.4 269.8,252.0 270.0,252.4 270.2,252.7 270.4,252.4 270.6,252.6 270.8,252.4 271.0,252.3 271.2,252.7 271.4,252.4 271.6,252.1 271.8,252.2 272.0,252.8 272.2,252.4 272.4,252.6 272.6,252.1 272.8,252.2 273.0,252.2 273.2,252.2 273.4,252.6 273.6,252.5 273.8,252.4 274.1,252.5 274.3,252.9 274.5,252.3 274.7,252.5 274.9,252.4 275.1,252.5 275.3,252.6 275.5,252.2 275.7,252.5 275.9,252.6 276.1,252.3 276.3,252.0 276.5,252.4 276.7,252.7 276.9,252.2 277.1,252.5 277.3,252.4 277.5,252.5 277.7,252.5 277.9,256.1 278.1,252.5 278.3,252.5 278.5,252.8 278.7,252.1 278.9,257.7 279.1,252.3 279.4,252.2 279.6,252.3 279.8,252.4 280.0,252.5 280.2,252.1 280.4,252.8 280.6,252.4 280.8,252.4 281.0,252.5 281.2,252.3 281.4,252.7 281.6,252.4 281.8,252.8 282.0,252.4 282.2,252.8 282.4,252.2 282.6,252.4 282.8,252.1 283.0,252.5 283.2,252.4 283.4,252.3 283.6,252.3 283.8,252.3 284.0,252.6 284.2,252.0 284.4,252.4 284.6,252.1 284.9,252.5 285.1,252.6 285.3,252.3 285.5,252.9 285.7,252.6 285.9,252.2 286.1,252.5 286.3,252.4 286.5,252.7 286.7,252.3 286.9,252.4 287.1,252.7 287.3,252.7 287.5,252.1 287.7,252.5 287.9,252.4 288.1,252.1 288.3,252.5 288.5,252.3 288.7,252.1 288.9,252.4 289.1,252.5 289.3,252.3 289.5,252.5 289.7,252.3 289.9,252.3 290.2,252.8 290.4,252.5 290.6,252.4 290.8,252.1 291.0,252.6 291.2,251.9 291.4,252.3 291.6,252.1 291.8,252.2 292.0,252.3 292.2,252.3 292.4,252.5 292.6,252.5 292.8,252.6 293.0,252.6 293.2,252.4 293.4,252.1 293.6,252.4 293.8,252.1 294.0,252.4 294.2,252.6 294.4,252.2 294.6,252.7 294.8,252.2 295.0,252.5 295.2,252.3 295.5,252.6 295.7,252.7 295.9,252.5 296.1,252.6 296.3,252.4 296.5,252.4 296.7,252.8 296.9,252.0 297.1,259.1 297.3,252.3 297.5,252.4 297.7,252.2 297.9,252.5 298.1,252.0 298.3,252.4 298.5,252.3 298.7,252.6 298.9,252.4 299.1,252.5 299.3,252.0 299.5,252.7 299.7,252.5 299.9,252.7 300.1,252.4 300.3,252.5 300.5,252.3 300.8,252.0 301.0,252.2 301.2,252.7 301.4,252.6 301.6,252.4 301.8,252.2 302.0,252.6 302.2,252.1 302.4,252.2 302.6,252.3 302.8,252.5 303.0,251.9 303.2,252.5 303.4,252.6 303.6,252.5 303.8,252.4 304.0,252.4 304.2,252.1 304.4,252.7 304.6,257.9 304.8,252.8 305.0,252.4 305.2,252.8 305.4,252.1 305.6,251.9 305.8,254.4 306.1,252.6 306.3,252.8 306.5,252.2 306.7,252.7 306.9,252.2 307.1,252.3 307.3,252.7 307.5,252.7 307.7,252.3 307.9,252.6 308.1,252.4 308.3,252.5 308.5,252.6 308.7,252.3 308.9,252.6 309.1,252.3 309.3,252.4 309.5,252.4 309.7,252.3 309.9,252.2 310.1,252.2 310.3,252.5 310.5,252.2 310.7,252.5 310.9,252.1 311.1,252.3 311.4,252.8 311.6,252.3 311.8,252.4 312.0,252.5 312.2,252.7 312.4,252.5 312.6,252.3 312.8,252.7 313.0,252.2 313.2,252.3 313.4,252.1 313.6,252.3 313.8,252.5 314.0,251.9 314.2,252.4 314.4,252.5 314.6,252.6 314.8,252.3 315.0,252.8 315.2,252.6 315.4,252.2 315.6,252.2 315.8,252.7 316.0,252.8 316.2,252.3 316.4,252.6 316.7,252.5 316.9,252.3 317.1,252.5 317.3,252.4 317.5,252.7 317.7,252.4 317.9,252.8 318.1,252.6 318.3,252.5 318.5,252.3 318.7,252.2 318.9,252.2 319.1,252.7 319.3,252.3 319.5,252.6 319.7,252.3 319.9,252.5 320.1,257.2 320.3,252.7 320.5,252.3 320.7,252.8 320.9,252.4 321.1,252.6 321.3,252.5 321.5,252.4 321.7,252.2 322.0,252.6 322.2,252.6 322.4,252.3 322.6,252.3 322.8,252.6 323.0,252.6 323.2,252.4 323.4,252.6 323.6,252.6 323.8,252.3 324.0,252.3 324.2,252.5 324.4,252.8 324.6,252.1 324.8,252.3 325.0,252.7 325.2,252.2 325.4,252.6 325.6,252.7 325.8,252.5 326.0,252.3 326.2,252.5 326.4,252.1 326.6,252.2 326.8,252.3 327.0,252.4 327.3,252.5 327.5,252.4 327.7,252.4 327.9,252.4 328.1,252.5 328.3,252.3 328.5,252.1 328.7,252.4 328.9,252.5 329.1,258.5 329.3,252.7 329.5,252.0 329.7,252.1 329.9,252.6 330.1,252.6 330.3,252.6 330.5,252.8 330.7,252.1 330.9,252.4 331.1,252.3 331.3,252.7 331.5,252.2 331.7,252.7 331.9,252.5 332.1,252.8 332.3,252.5 332.6,252.5 332.8,252.3 333.0,252.2 333.2,252.3 333.4,252.3 333.6,252.2 333.8,252.6 334.0,256.2 334.2,252.3 334.4,252.3 334.6,252.2 334.8,252.7 335.0,252.0 335.2,252.3 335.4,252.4 335.6,252.5 335.8,252.2 336.0,252.2 336.2,252.4 336.4,252.2 336.6,252.0 336.8,252.3 337.0,252.2 337.2,252.2 337.4,252.6 337.6,252.6 337.9,252.7 338.1,252.5 338.3,252.3 338.5,252.3 338.7,252.0 338.9,252.6 339.1,252.5 339.3,252.6 339.5,252.6 339.7,252.7 339.9,252.1 340.1,252.2 340.3,252.3 340.5,252.2 340.7,252.2 340.9,252.5 341.1,252.4 341.3,252.0 341.5,252.7 341.7,252.6 341.9,252.5 342.1,252.5 342.3,252.5 342.5,252.6 342.7,252.3 342.9,252.3 343.2,252.4 343.4,252.2 343.6,252.6 343.8,252.3 344.0,252.3 344.2,252.2 344.4,252.7 344.6,252.1 344.8,252.2 345.0,252.7 345.2,252.4 345.4,252.2 345.6,252.3 345.8,252.7 346.0,252.2 346.2,252.5 346.4,252.2 346.6,252.3 346.8,252.4 347.0,252.6 347.2,252.5 347.4,252.5 347.6,252.4 347.8,252.3 348.0,252.6 348.2,259.3 348.4,252.7 348.7,252.5 348.9,252.4 349.1,252.0 349.3,252.4 349.5,252.2 349.7,252.5 349.9,252.4 350.1,253.1 350.3,253.0 350.5,253.1 350.7,253.1 350.9,253.5 351.1,253.0 351.3,253.1 351.5,253.0 351.7,253.1 351.9,253.6 352.1,253.9 352.3,253.6 352.5,253.6 352.7,253.7 352.9,253.9 353.1,253.7 353.3,253.8 353.5,254.0 353.7,253.5 354.0,253.2 354.2,253.8 354.4,254.0 354.6,256.2 354.8,257.7 355.0,253.3 355.2,259.7 355.4,255.6 355.6,253.3 355.8,255.6 356.0,255.0 356.2,254.6 356.4,257.3 356.6,257.3 356.8,256.0 357.0,254.9 357.2,262.6 357.4,261.1 357.6,255.1 357.8,260.8 358.0,255.1 358.2,254.9 358.4,255.4 358.6,258.3 358.8,257.3 359.0,257.4 359.3,256.1 359.5,260.3 359.7,257.5 359.9,255.7 360.1,254.8 360.3,256.1 360.5,255.5 360.7,257.7 360.9,261.0 361.1,257.0 361.3,254.0 361.5,257.8 361.7,258.9 361.9,260.2 362.1,258.3 362.3,259.4 362.5,258.9 362.7,262.3 362.9,256.7 363.1,259.3 363.3,258.0 363.5,259.0 363.7,258.0 363.9,259.3 364.1,258.7 364.3,257.5 364.6,258.7 364.8,261.7 365.0,259.1 365.2,263.0 365.4,255.9 365.6,259.6 365.8,258.3 366.0,257.5 366.2,259.1 366.4,260.4 366.6,257.8 366.8,261.1 367.0,259.2 367.2,257.5 367.4,261.7 367.6,258.4 367.8,259.2 368.0,258.6 368.2,266.4 368.4,260.1 368.6,262.5 368.8,257.7 369.0,261.6 369.2,255.7 369.4,261.5 369.6,258.9 369.9,258.4 370.1,257.4 370.3,258.4 370.5,258.6 370.7,258.7 370.9,259.8 371.1,259.4 371.3,258.4 371.5,261.5 371.7,259.8 371.9,258.1 372.1,259.0 372.3,258.2 372.5,264.4 372.7,261.4 372.9,261.0 373.1,260.6 373.3,261.1 373.5,260.2 373.7,259.9 373.9,261.7 374.1,264.2 374.3,264.2 374.5,262.1 374.7,260.8 374.9,260.9 375.2,262.6 375.4,262.9 375.6,266.8 375.8,259.4 376.0,261.1 376.2,264.2 376.4,263.5 376.6,261.2 376.8,265.6 377.0,262.2 377.2,265.0 377.4,266.4 377.6,266.3 377.8,265.7 378.0,264.1 378.2,267.4 378.4,261.4 378.6,268.2 378.8,262.6 379.0,265.3 379.2,265.2 379.4,264.0 379.6,262.3 379.8,264.2 380.0,268.6 380.2,264.0 380.5,270.6 380.7,263.3 380.9,265.2 381.1,263.5 381.3,263.1 381.5,263.8 381.7,266.2 381.9,265.1 382.1,265.9 382.3,266.2 382.5,265.2 382.7,263.3 382.9,264.0 383.1,262.8 383.3,262.7 383.5,265.5 383.7,264.1 383.9,265.1 384.1,265.1 384.3,265.2 384.5,262.6 384.7,265.0 384.9,262.0 385.1,262.9 385.3,263.3 385.5,268.1 385.8,264.6 386.0,264.5 386.2,264.9 386.4,264.1 386.6,264.5 386.8,260.1 387.0,264.7 387.2,263.2 387.4,262.7 387.6,264.8 387.8,265.2 388.0,259.6 388.2,264.6 388.4,263.4 388.6,261.5 388.8,267.3 389.0,261.0 389.2,261.8 389.4,260.4 389.6,263.9 389.8,262.2 390.0,262.0 390.2,264.4 390.4,257.6 390.6,261.7 390.8,262.3 391.1,262.8 391.3,264.0 391.5,258.7 391.7,260.4 391.9,265.7 392.1,258.9 392.3,261.2 392.5,262.4 392.7,261.9 392.9,258.8 393.1,260.4 393.3,260.2 393.5,259.6 393.7,260.1 393.9,259.6 394.1,260.2 394.3,260.5 394.5,263.0 394.7,260.3 394.9,257.9 395.1,260.9 395.3,259.0 395.5,259.8 395.7,260.8 395.9,259.8 396.1,259.9 396.4,258.2 396.6,257.0 396.8,258.2 397.0,258.9 397.2,261.3 397.4,259.6 397.6,260.4 397.8,259.1 398.0,259.0 398.2,259.7 398.4,260.6 398.6,262.1 398.8,260.0 399.0,257.6 399.2,260.5 399.4,257.3 399.6,257.3 399.8,256.6 400.0,258.0 400.2,258.8 400.4,256.9 400.6,258.2 400.8,257.8 401.0,260.1 401.2,262.0 401.4,257.5 401.7,256.4 401.9,258.1 402.1,257.9 402.3,254.1 402.5,255.0 402.7,258.7 402.9,255.9 403.1,258.0 403.3,262.2 403.5,256.7 403.7,256.7 403.9,255.2 404.1,255.9 404.3,257.0 404.5,257.5 404.7,260.3 404.9,255.1 405.1,254.1 405.3,254.6 405.5,255.9 405.7,255.6 405.9,256.8 406.1,257.1 406.3,252.1 406.5,257.6 406.7,259.7 406.9,256.0 407.2,254.8 407.4,256.9 407.6,253.9 407.8,253.4 408.0,251.8 408.2,255.9 408.4,253.2 408.6,254.0 408.8,254.1 409.0,251.1 409.2,259.1 409.4,252.6 409.6,254.0 409.8,252.2 410.0,253.0 410.2,253.2 410.4,257.8 410.6,253.4 410.8,251.6 411.0,257.6 411.2,254.5 411.4,252.5 411.6,252.5 411.8,251.9 412.0,252.8 412.2,252.1 412.5,252.3 412.7,252.7 412.9,251.9 413.1,252.4 413.3,251.9 413.5,252.6 413.7,251.8 413.9,252.1 414.1,252.3 414.3,251.8 414.5,252.3 414.7,251.9 414.9,252.0 415.1,252.2 415.3,251.9 415.5,251.8 415.7,251.8 415.9,252.0 416.1,251.7 416.3,251.4 416.5,251.7 416.7,251.9 416.9,251.8 417.1,251.9 417.3,252.0 417.5,256.8 417.8,251.7 418.0,251.7 418.2,251.5 418.4,251.8 418.6,251.7 418.8,251.6 419.0,251.7 419.2,251.3 419.4,251.5 419.6,250.8 419.8,251.9 420.0,251.6 420.2,251.6 420.4,256.7 420.6,251.7 420.8,251.4 421.0,251.5 421.2,251.6 421.4,251.3 421.6,251.7 421.8,251.3 422.0,251.5 422.2,251.2 422.4,251.4 422.6,251.4 422.8,251.7 423.1,251.5 423.3,251.3 423.5,251.2 423.7,250.9 423.9,251.2 424.1,251.4 424.3,251.4 424.5,251.6 424.7,251.0 424.9,251.2 425.1,251.2 425.3,250.7 425.5,251.4 425.7,251.4 425.9,251.5 426.1,250.9 426.3,251.5 426.5,250.8 426.7,251.0 426.9,254.0 427.1,251.1 427.3,251.1 427.5,250.9 427.7,251.0 427.9,251.2 428.1,250.9 428.4,250.8 428.6,251.4 428.8,251.4 429.0,251.2 429.2,251.0 429.4,251.1 429.6,251.1 429.8,251.0 430.0,251.2 430.2,251.1 430.4,250.8 430.6,251.0 430.8,251.5 431.0,251.2 431.2,251.0 431.4,251.0 431.6,250.9 431.8,250.9 432.0,251.0 432.2,250.9 432.4,251.3 432.6,250.9 432.8,251.0 433.0,251.1 433.2,251.0 433.4,251.4 433.7,251.1 433.9,251.3 434.1,251.2 434.3,251.2 434.5,250.9 434.7,251.2 434.9,250.6 435.1,251.0 435.3,250.8 435.5,251.4 435.7,251.3 435.9,251.2 436.1,250.9 436.3,257.1 436.5,250.8 436.7,251.2 436.9,251.2 437.1,251.3 437.3,250.9 437.5,251.5 437.7,250.9 437.9,251.3 438.1,250.9 438.3,251.4 438.5,250.8 438.7,250.9 439.0,250.7 439.2,251.3 439.4,250.9 439.6,251.2 439.8,250.6 440.0,250.6 440.2,251.5 440.4,251.2 440.6,251.3 440.8,250.7 441.0,251.4 441.2,251.1 441.4,251.0 441.6,251.1 441.8,250.6 442.0,251.2 442.2,251.4 442.4,251.0 442.6,251.1 442.8,250.7 443.0,251.5 443.2,251.5 443.4,251.1 443.6,251.2 443.8,251.3 444.0,251.1 444.3,250.7 444.5,251.2 444.7,251.4 444.9,251.1 445.1,251.1 445.3,251.5 445.5,251.3 445.7,251.1 445.9,251.3 446.1,251.1 446.3,251.3 446.5,251.4 446.7,251.1 446.9,251.4 447.1,251.2 447.3,251.0 447.5,251.1 447.7,250.8 447.9,251.2 448.1,251.2 448.3,250.8 448.5,251.4 448.7,251.2 448.9,251.0 449.1,251.5 449.3,250.9 449.6,251.3 449.8,250.9 450.0,251.1 450.2,251.1 450.4,251.2 450.6,251.1 450.8,250.8 451.0,251.3 451.2,250.7 451.4,251.1 451.6,251.1 451.8,251.0 452.0,251.4 452.2,251.3 452.4,251.3 452.6,251.2 452.8,251.4 453.0,251.3 453.2,251.0 453.4,250.7 453.6,251.0 453.8,251.1 454.0,256.8 454.2,250.8 454.4,251.0 454.6,251.0 454.9,250.7 455.1,250.9 455.3,251.0 455.5,251.2 455.7,251.0 455.9,250.9 456.1,251.3 456.3,251.3 456.5,251.5 456.7,251.1 456.9,251.3 457.1,250.8 457.3,250.9 457.5,251.0 457.7,251.4 457.9,251.1 458.1,251.2 458.3,251.5 458.5,251.2 458.7,250.8 458.9,251.4 459.1,251.0 459.3,251.2 459.5,251.4 459.7,250.8 459.9,251.5 460.2,250.8 460.4,251.6 460.6,250.8 460.8,250.8 461.0,251.3 461.2,251.3 461.4,251.1 461.6,250.9 461.8,251.2 462.0,251.4 462.2,251.0 462.4,250.9 462.6,251.1 462.8,251.0 463.0,251.4 463.2,251.4 463.4,251.1 463.6,251.1 463.8,250.9 464.0,251.3 464.2,251.0 464.4,251.3 464.6,251.3 464.8,251.1 465.0,250.6 465.2,251.0 465.5,251.0 465.7,251.2 465.9,251.0 466.1,250.9 466.3,251.2 466.5,251.2 466.7,251.1 466.9,250.9 467.1,251.1 467.3,251.3 467.5,250.9 467.7,251.1 467.9,251.5 468.1,251.2 468.3,251.0 468.5,251.0 468.7,250.8 468.9,251.0 469.1,251.1 469.3,250.8 469.5,251.4 469.7,251.0 469.9,250.9 470.1,251.0 470.3,251.1 470.5,251.0 470.7,251.3 471.0,251.4 471.2,251.2 471.4,250.9 471.6,250.9 471.8,251.4 472.0,251.0 472.2,253.1 472.4,251.5 472.6,251.2 472.8,251.0 473.0,250.8 473.2,251.3 473.4,250.8 473.6,251.0 473.8,251.0 474.0,251.6 474.2,250.8 474.4,251.1 474.6,251.0 474.8,251.0 475.0,251.0 475.2,251.2 475.4,250.8 475.6,251.0 475.8,251.1 476.0,251.4 476.3,251.3 476.5,251.6 476.7,251.5 476.9,250.7 477.1,251.0 477.3,251.2 477.5,254.8 477.7,250.9 477.9,251.4 478.1,251.2 478.3,250.9 478.5,251.1 478.7,251.2 478.9,251.2 479.1,251.1 479.3,251.0 479.5,251.1 479.7,251.1 479.9,251.2 480.1,251.4 480.3,250.5 480.5,253.6 480.7,250.9 480.9,250.8 481.1,250.9 481.3,251.5 481.6,250.9 481.8,251.0 482.0,251.0 482.2,251.3 482.4,251.3 482.6,251.2 482.8,251.2 483.0,251.1 483.2,250.9 483.4,251.4 483.6,251.3 483.8,251.1 484.0,251.0 484.2,250.9 484.4,251.1 484.6,251.0 484.8,251.2 485.0,251.1 485.2,251.1 485.4,250.9 485.6,251.3 485.8,251.0 486.0,251.1 486.2,251.0 486.4,251.5 486.6,251.1 486.9,251.2 487.1,251.4 487.3,251.3 487.5,250.9 487.7,251.1 487.9,250.9 488.1,250.9 488.3,251.2 488.5,251.2 488.7,250.9 488.9,250.8 489.1,251.4 489.3,251.0 489.5,251.3 489.7,251.2 489.9,251.0 490.1,251.0 490.3,250.7 490.5,251.1 490.7,251.1 490.9,251.2 491.1,251.3 491.3,251.1 491.5,251.2 491.7,251.2 491.9,250.9 492.2,251.0 492.4,251.0 492.6,251.3 492.8,251.2 493.0,251.1 493.2,251.4 493.4,251.3 493.6,250.7 493.8,251.1 494.0,251.2 494.2,250.9 494.4,250.9 494.6,250.8 494.8,251.2 495.0,251.3 495.2,251.1 495.4,251.0 495.6,250.8 495.8,251.1 496.0,251.4 496.2,251.0 496.4,251.0 496.6,251.1 496.8,251.2 497.0,251.3 497.2,251.1 497.5,251.0 497.7,251.3 497.9,250.7 498.1,251.2 498.3,250.6 498.5,251.4 498.7,251.3 498.9,251.0 499.1,251.1 499.3,251.3 499.5,251.2 499.7,251.1 499.9,251.1 500.1,251.0 500.3,251.2 500.5,250.8 500.7,251.2 500.9,251.0 501.1,251.2 501.3,251.3 501.5,250.7 501.7,251.0 501.9,251.2 502.1,251.1 502.3,251.2 502.5,251.0 502.8,251.0 503.0,250.8 503.2,250.9 503.4,250.8 503.6,251.0 503.8,251.0 504.0,251.1 504.2,250.9 504.4,250.9 504.6,250.7 504.8,251.3 505.0,251.2 505.2,251.2 505.4,251.3 505.6,251.1 505.8,251.1 506.0,251.2 506.2,251.0 506.4,250.6 506.6,251.4 506.8,251.0 507.0,251.3 507.2,251.0 507.4,250.9 507.6,250.9 507.8,251.2 508.1,250.8 508.3,251.2 508.5,250.8 508.7,250.7 508.9,250.8 509.1,251.2 509.3,251.1 509.5,251.1 509.7,251.3 509.9,251.3 510.1,250.9 510.3,251.1 510.5,251.3 510.7,250.6 510.9,251.3 511.1,251.0 511.3,251.0 511.5,250.8 511.7,251.5 511.9,250.9 512.1,251.2 512.3,251.2 512.5,250.6 512.7,251.0 512.9,250.8 513.1,250.9 513.4,251.1 513.6,251.0 513.8,251.2 514.0,251.4 514.2,250.6 514.4,251.1 514.6,251.1 514.8,250.6 515.0,251.2 515.2,251.3 515.4,251.2 515.6,250.8 515.8,251.4 516.0,251.6 516.2,251.4 516.4,250.7 516.6,250.9 516.8,251.4 517.0,251.1 517.2,251.4 517.4,251.0 517.6,250.9 517.8,250.7 518.0,251.2 518.2,251.1 518.4,251.2 518.7,251.0 518.9,251.5 519.1,251.1 519.3,251.3 519.5,251.0 519.7,251.1 519.9,250.7 520.1,251.2 520.3,250.5 520.5,251.4 520.7,250.9 520.9,250.9 521.1,250.6 521.3,251.0 521.5,250.8 521.7,251.1 521.9,251.2 522.1,251.1 522.3,251.6 522.5,251.3 522.7,251.0 522.9,251.2 523.1,250.9 523.3,251.6 523.5,251.1 523.7,251.3 524.0,251.2 524.2,251.0 524.4,251.0 524.6,250.8 524.8,251.1 525.0,251.0 525.2,252.6 525.4,252.7 525.6,252.3 525.8,252.3 526.0,252.8 526.2,252.5 526.4,252.6 526.6,252.3 526.8,252.5 527.0,252.9 527.2,258.5 527.4,252.7 527.6,252.7 527.8,252.3 528.0,252.6 528.2,252.3 528.4,252.5 528.6,252.4 528.8,252.8 529.0,252.5 529.2,252.7 529.5,252.6 529.7,252.6 529.9,253.1 530.1,252.5 530.3,252.6 530.5,252.7 530.7,252.7 530.9,252.4 531.1,252.5 531.3,252.7 531.5,252.7 531.7,253.0 531.9,252.4 532.1,252.3 532.3,252.4 532.5,252.8 532.7,252.8 532.9,252.3 533.1,253.0 533.3,252.2 533.5,252.5 533.7,252.9 533.9,252.3 534.1,252.7 534.3,252.4 534.5,252.3 534.8,252.4 535.0,253.0 535.2,252.9 535.4,252.5 535.6,252.6 535.8,252.6 536.0,252.7 536.2,252.6 536.4,252.3 536.6,252.8 536.8,252.6 537.0,252.9 537.2,252.6 537.4,252.8 537.6,252.8 537.8,252.3 538.0,252.6 538.2,252.5 538.4,252.6 538.6,252.5 538.8,252.5 539.0,252.8 539.2,252.7 539.4,252.4 539.6,252.4 539.8,252.2 540.1,252.8 540.3,252.5 540.5,253.0 540.7,252.4 540.9,252.7 541.1,252.5 541.3,252.8 541.5,252.5 541.7,252.7 541.9,252.8 542.1,252.4 542.3,253.0 542.5,252.7 542.7,252.4 542.9,252.4 543.1,252.4 543.3,252.5 543.5,252.8 543.7,252.7 543.9,252.7 544.1,252.8 544.3,252.6 544.5,252.5 544.7,252.7 544.9,252.8 545.1,252.4 545.4,252.5 545.6,252.3 545.8,252.7 546.0,252.3 546.2,252.8 546.4,252.5 546.6,252.8 546.8,252.6 547.0,252.9 547.2,252.5 547.4,252.7 547.6,252.5 547.8,252.4 548.0,252.7 548.2,253.0 548.4,252.8 548.6,252.4 548.8,252.9 549.0,252.8 549.2,252.4 549.4,253.0 549.6,252.4 549.8,252.1 550.0,252.8 550.2,252.4 550.4,252.6 550.7,252.4 550.9,252.7 551.1,252.8 551.3,252.6 551.5,252.4 551.7,252.7 551.9,252.7 552.1,252.5 552.3,252.2 552.5,252.6 552.7,252.7 552.9,252.5 553.1,252.1 553.3,252.8 553.5,252.7 553.7,252.7 553.9,252.7 554.1,252.4 554.3,252.6 554.5,252.7 554.7,252.6 554.9,252.2 555.1,252.5 555.3,252.5 555.5,252.4 555.7,252.3 556.0,252.7 556.2,253.1 556.4,252.6 556.6,252.7 556.8,252.5 557.0,252.5 557.2,252.8 557.4,252.5 557.6,252.5 557.8,252.7 558.0,252.9 558.2,252.6 558.4,252.7 558.6,252.4 558.8,252.3 559.0,252.8 559.2,253.0 559.4,252.5 559.6,252.0 559.8,252.4 560.0,252.4 560.2,252.9 560.4,252.5 560.6,252.7 560.8,252.6 561.0,252.8 561.3,252.8 561.5,252.6 561.7,252.9 561.9,252.6 562.1,252.9 562.3,252.7 562.5,252.4 562.7,252.4 562.9,252.6 563.1,252.2 563.3,252.6 563.5,252.8 563.7,252.8 563.9,252.6 564.1,252.2 564.3,252.6 564.5,252.6 564.7,252.6 564.9,252.7 565.1,252.5 565.3,252.8 565.5,252.8 565.7,252.5 565.9,252.8 566.1,252.6 566.3,252.7 566.6,252.2 566.8,252.4 567.0,251.8 567.2,252.3 567.4,253.1 567.6,252.6 567.8,252.6 568.0,252.9 568.2,253.0 568.4,252.4 568.6,252.6 568.8,252.5 569.0,252.3 569.2,252.4 569.4,252.6 569.6,252.6 569.8,252.3 570.0,252.6 570.2,252.7 570.4,252.8 570.6,252.2 570.8,252.7 571.0,252.4 571.2,252.6 571.4,252.8 571.6,252.7 571.9,252.8 572.1,252.7 572.3,253.1 572.5,252.6 572.7,252.3 572.9,252.6 573.1,252.6 573.3,252.9 573.5,252.5 573.7,252.6 573.9,252.7 574.1,252.7 574.3,252.7 574.5,252.3 574.7,259.3 574.9,252.7 575.1,252.6 575.3,255.8 575.5,252.8 575.7,253.0 575.9,252.6 576.1,252.7 576.3,252.8 576.5,252.4 576.7,252.5 576.9,252.9 577.2,252.5 577.4,252.8 577.6,252.5 577.8,252.5 578.0,252.7 578.2,252.2 578.4,252.9 578.6,252.8 578.8,252.5 579.0,252.7 579.2,252.5 579.4,252.4 579.6,252.7 579.8,252.6 580.0,252.2 580.2,252.4 580.4,252.4 580.6,252.5 580.8,252.6 581.0,252.8 581.2,252.6 581.4,252.5 581.6,252.7 581.8,252.6 582.0,252.6 582.2,254.9 582.5,252.8 582.7,252.3 582.9,252.4 583.1,252.9 583.3,252.7 583.5,252.8 583.7,252.5 583.9,252.7 584.1,252.7 584.3,252.9 584.5,252.4 584.7,252.8 584.9,253.0 585.1,252.4 585.3,253.1 585.5,253.0 585.7,252.7 585.9,252.3 586.1,252.6 586.3,252.9 586.5,252.6 586.7,252.6 586.9,252.6 587.1,252.3 587.3,252.8 587.5,252.9 587.8,252.5 588.0,252.7 588.2,252.6 588.4,252.5 588.6,252.7 588.8,252.7 589.0,252.2 589.2,252.7 589.4,252.6 589.6,252.4 589.8,252.6 590.0,252.7 590.2,252.4 590.4,252.3 590.6,252.7 590.8,252.6 591.0,253.0 591.2,252.7 591.4,252.3 591.6,252.5 591.8,252.6 592.0,252.3 592.2,252.9 592.4,252.4 592.6,252.2 592.8,252.6 593.0,252.4 593.3,252.3 593.5,252.5 593.7,252.4 593.9,252.4 594.1,252.1 594.3,252.6 594.5,252.1 594.7,252.6 594.9,252.5 595.1,252.3 595.3,252.5 595.5,252.4 595.7,252.2 595.9,252.9 596.1,252.1 596.3,252.5 596.5,252.7 596.7,252.3 596.9,252.8 597.1,252.6 597.3,252.1 597.5,252.9 597.7,252.3 597.9,252.8 598.1,252.8 598.3,252.7 598.6,252.9 598.8,252.6 599.0,252.7 599.2,252.5 599.4,252.6 599.6,252.8 599.8,252.7 600.0,252.4 600.2,252.2 600.4,252.8 600.6,252.5 600.8,252.5 601.0,252.4 601.2,252.4 601.4,252.6 601.6,252.7 601.8,252.5 602.0,252.7 602.2,252.5 602.4,252.4 602.6,253.0 602.8,252.5 603.0,252.0 603.2,252.5 603.4,252.6 603.6,252.1 603.9,252.7 604.1,252.8 604.3,252.4 604.5,252.7 604.7,252.3 604.9,252.4 605.1,252.4 605.3,252.8 605.5,252.7 605.7,252.7 605.9,252.6 606.1,252.8 606.3,252.8 606.5,252.5 606.7,252.5 606.9,252.6 607.1,252.5 607.3,252.3 607.5,252.7 607.7,252.4 607.9,252.7 608.1,252.5 608.3,252.3 608.5,252.7 608.7,252.9 608.9,252.8 609.2,252.8 609.4,252.4 609.6,252.7 609.8,252.4 610.0,252.8 610.2,252.9 610.4,252.4 610.6,252.9 610.8,252.3 611.0,252.7 611.2,252.6 611.4,252.4 611.6,252.4 611.8,252.6 612.0,252.6 612.2,252.4 612.4,253.0 612.6,252.6 612.8,252.1 613.0,252.6 613.2,253.0 613.4,252.8 613.6,252.6 613.8,252.4 614.0,252.2 614.2,252.3 614.5,252.8 614.7,252.2 614.9,252.7 615.1,252.6 615.3,252.7 615.5,252.7 615.7,252.4 615.9,252.6 616.1,252.9 616.3,252.3 616.5,252.2 616.7,252.9 616.9,252.7 617.1,252.4 617.3,252.5 617.5,252.4 617.7,252.8 617.9,252.6 618.1,252.8 618.3,252.9 618.5,252.4 618.7,252.8 618.9,252.5 619.1,252.4 619.3,252.6 619.5,252.8 619.8,252.6 620.0,252.8 620.2,252.7 620.4,252.1 620.6,252.7 620.8,252.5 621.0,252.5 621.2,252.9 621.4,252.8 621.6,252.5 621.8,252.7 622.0,252.3 622.2,252.3 622.4,252.4 622.6,252.5 622.8,252.4 623.0,252.2 623.2,252.6 623.4,252.7 623.6,252.4 623.8,252.9 624.0,252.6 624.2,252.5 624.4,252.5 624.6,253.0 624.8,252.3 625.1,253.2 625.3,252.3 625.5,252.6 625.7,252.3 625.9,252.6 626.1,252.6 626.3,252.6 626.5,252.2 626.7,252.1 626.9,255.8 627.1,252.6 627.3,252.9 627.5,252.8 627.7,252.4 627.9,252.5 628.1,252.6 628.3,252.7 628.5,252.4 628.7,252.1 628.9,252.5 629.1,252.8 629.3,252.6 629.5,252.3 629.7,252.6 629.9,252.6 630.1,252.6 630.4,253.2 630.6,253.1 630.8,253.2 631.0,253.4 631.2,253.2 631.4,253.4 631.6,253.4 631.8,253.2 632.0,254.0 632.2,253.4 632.4,253.8 632.6,254.0 632.8,253.7 633.0,253.6 633.2,254.0 633.4,258.6 633.6,254.2 633.8,255.6 634.0,254.0 634.2,256.3 634.4,254.0 634.6,254.2 634.8,255.3 635.0,257.5 635.2,256.4 635.4,257.1 635.7,256.4 635.9,252.3 636.1,261.0 636.3,262.4 636.5,252.5 636.7,256.0 636.9,254.7 637.1,256.0 637.3,258.7 637.5,255.3 637.7,258.4 637.9,257.6 638.1,255.7 638.3,256.8 638.5,258.0 638.7,256.8 638.9,255.9 639.1,255.6 639.3,256.0 639.5,256.9 639.7,258.4 639.9,257.4 640.1,257.7 640.3,255.6 640.5,257.9 640.7,256.9 641.0,255.9 641.2,258.9 641.4,261.0 641.6,256.3 641.8,260.6 642.0,264.4 642.2,257.5 642.4,257.3 642.6,257.1 642.8,259.3 643.0,255.9 643.2,257.6 643.4,260.5 643.6,257.1 643.8,259.2 644.0,259.8 644.2,256.0 644.4,257.7 644.6,259.4 644.8,259.1 645.0,259.1 645.2,258.9 645.4,259.7 645.6,258.4 645.8,256.8 646.0,259.8 646.3,258.9 646.5,265.4 646.7,257.6 646.9,259.4 647.1,258.0 647.3,260.5 647.5,258.9 647.7,260.9 647.9,259.6 648.1,261.7 648.3,259.3 648.5,259.0 648.7,261.0 648.9,259.4 649.1,258.2 649.3,257.8 649.5,257.5 649.7,258.4 649.9,260.5 650.1,263.4 650.3,258.0 650.5,259.0 650.7,258.5 650.9,258.2 651.1,261.5 651.3,260.3 651.5,260.3 651.8,262.5 652.0,259.3 652.2,262.7 652.4,261.0 652.6,267.1 652.8,261.2 653.0,259.9 653.2,261.9 653.4,262.0 653.6,261.5 653.8,259.7 654.0,260.4 654.2,266.3 654.4,261.9 654.6,261.7 654.8,262.0 655.0,264.2 655.2,263.2 655.4,266.5 655.6,263.1 655.8,262.2 656.0,266.3 656.2,263.5 656.4,260.3 656.6,264.2 656.8,263.6 657.1,261.4 657.3,261.4 657.5,267.4 657.7,263.5 657.9,263.4 658.1,263.8 658.3,264.4 658.5,262.7 658.7,264.7 658.9,267.4 659.1,266.7 659.3,264.4 659.5,263.6 659.7,262.8 659.9,263.7 660.1,271.4 660.3,262.1 660.5,265.8 660.7,266.4 660.9,267.4 661.1,266.9 661.3,263.0 661.5,269.4 661.7,264.6 661.9,263.6 662.1,264.7 662.4,265.0 662.6,266.2 662.8,265.3 663.0,263.9 663.2,264.9 663.4,269.0 663.6,263.2 663.8,264.2 664.0,264.1 664.2,263.8 664.4,264.0 664.6,262.8 664.8,264.3 665.0,269.0 665.2,265.4 665.4,260.7 665.6,264.0 665.8,265.4 666.0,263.2 666.2,264.0 666.4,264.1 666.6,263.5 666.8,262.0 667.0,264.1 667.2,261.6 667.4,262.2 667.7,267.0 667.9,263.5 668.1,262.7 668.3,264.3 668.5,261.8 668.7,269.3 668.9,262.7 669.1,260.0 669.3,262.6 669.5,267.6 669.7,262.3 669.9,263.3 670.1,261.8 670.3,260.0 670.5,260.2 670.7,259.5 670.9,263.1 671.1,260.3 671.3,265.8 671.5,262.2 671.7,265.1 671.9,265.6 672.1,259.6 672.3,265.8 672.5,262.0 672.7,261.3 673.0,258.7 673.2,261.9 673.4,259.8 673.6,260.3 673.8,259.9 674.0,259.8 674.2,261.3 674.4,263.1 674.6,260.8 674.8,261.0 675.0,261.5 675.2,256.3 675.4,258.3 675.6,258.7 675.8,260.0 676.0,258.5 676.2,262.6 676.4,258.7 676.6,263.2 676.8,257.4 677.0,260.6 677.2,259.2 677.4,262.4 677.6,258.1 677.8,255.7 678.0,258.3 678.3,259.5 678.5,259.2 678.7,257.7 678.9,254.2 679.1,261.1 679.3,256.8 679.5,258.7 679.7,261.0 679.9,256.5 680.1,258.1 680.3,259.5 680.5,255.3 680.7,256.4 680.9,258.8 681.1,257.5 681.3,259.6 681.5,255.0 681.7,257.1 681.9,256.4 682.1,258.2 682.3,255.8 682.5,258.3 682.7,256.0 682.9,257.6 683.1,257.4 683.3,256.9 683.6,257.6 683.8,255.7 684.0,256.3 684.2,257.2 684.4,254.1 684.6,255.8 684.8,261.2 685.0,256.4 685.2,261.7 685.4,255.7 685.6,256.5 685.8,257.9 686.0,255.9 686.2,255.9 686.4,256.0 686.6,256.3 686.8,256.1 687.0,256.8 687.2,255.9 687.4,254.7 687.6,255.1 687.8,257.7 688.0,253.9 688.2,254.4 688.4,256.1 688.6,255.0 688.9,256.9 689.1,258.4 689.3,255.5 689.5,255.1 689.7,255.7 689.9,254.9 690.1,256.4 690.3,254.1 690.5,254.9 690.7,256.0 690.9,259.3 691.1,257.8 691.3,254.2 691.5,254.3 691.7,253.8 691.9,254.4 692.1,252.6 692.3,252.4 692.5,252.4 692.7,252.5 692.9,252.0 693.1,252.3 693.3,251.9 693.5,252.2 693.7,252.3 693.9,252.0 694.2,252.1 694.4,251.8 694.6,251.7 694.8,251.7 695.0,251.8 695.2,251.8 695.4,251.5 695.6,252.1 695.8,251.7 696.0,251.9 696.2,252.0 696.4,251.6 696.6,251.4 696.8,251.5 697.0,252.1 697.2,251.7 697.4,252.1 697.6,251.6 697.8,251.7 698.0,251.6 698.2,251.4 698.4,251.6 698.6,251.7 698.8,251.9 699.0,252.0 699.2,251.7 699.5,251.7 699.7,251.7 699.9,251.7 700.1,251.8 700.3,251.8 700.5,251.2 700.7,251.4 700.9,251.3 701.1,251.5 701.3,251.5 701.5,251.1 701.7,251.4 701.9,251.2 702.1,251.3 702.3,251.5 702.5,251.4 702.7,251.3 702.9,251.3 703.1,251.3 703.3,251.4 703.5,251.1 703.7,251.0 703.9,251.2 704.1,251.1 704.3,251.0 704.5,251.6 704.8,251.3 705.0,251.0 705.2,251.0 705.4,251.0 705.6,251.3 705.8,251.3 706.0,251.0 706.2,251.0 706.4,250.9 706.6,251.3 706.8,250.8 707.0,251.0 707.2,251.2 707.4,251.3 707.6,250.6 707.8,251.1 708.0,251.4 708.2,250.9 708.4,251.2 708.6,251.3 708.8,251.1 709.0,251.3 709.2,251.0 709.4,251.0 709.6,251.0 709.8,251.0 710.1,251.5 710.3,251.2 710.5,251.2 710.7,251.2 710.9,250.8 711.1,251.5 711.3,251.1 711.5,251.2 711.7,251.1 711.9,253.6 712.1,251.3 712.3,251.2 712.5,251.1 712.7,251.2 712.9,253.3 713.1,251.1 713.3,250.9 713.5,250.6 713.7,250.9 713.9,251.0 714.1,255.2 714.3,251.0 714.5,251.0 714.7,251.1 714.9,251.0 715.1,250.9 715.3,251.2 715.6,251.3 715.8,250.9 716.0,251.1 716.2,251.3 716.4,251.2 716.6,250.9 716.8,251.0 717.0,251.0 717.2,251.1 717.4,250.9 717.6,250.5 717.8,251.3 718.0,251.0 718.2,251.0 718.4,251.4 718.6,251.3 718.8,250.9 719.0,250.9 719.2,251.0 719.4,250.9 719.6,251.3 719.8,251.1 720.0,251.2 720.2,251.4 720.4,251.3 720.6,250.9 720.9,251.1 721.1,250.9 721.3,250.8 721.5,251.0 721.7,251.0 721.9,251.1 722.1,251.3 722.3,251.1 722.5,251.0 722.7,251.3 722.9,251.2 723.1,251.0 723.3,251.3 723.5,251.3 723.7,251.3 723.9,251.3 724.1,251.0 724.3,250.9 724.5,251.2 724.7,251.2 724.9,250.9 725.1,251.0 725.3,251.3 725.5,251.1 725.7,250.8 725.9,251.3 726.2,250.9 726.4,251.4 726.6,251.2 726.8,251.2 727.0,251.2 727.2,251.4 727.4,251.2 727.6,251.1 727.8,250.9 728.0,250.8 728.2,251.3 728.4,251.0 728.6,250.8 728.8,251.1 729.0,251.2 729.2,251.0 729.4,250.8 729.6,251.4 729.8,250.9 730.0,251.3 730.2,251.0 730.4,250.9 730.6,251.2 730.8,250.9 731.0,251.2 731.2,251.0 731.5,251.2 731.7,250.9 731.9,250.9 732.1,250.8 732.3,251.0 732.5,251.0 732.7,251.1 732.9,251.1 733.1,250.8 733.3,256.1 733.5,250.9 733.7,251.2 733.9,251.0 734.1,251.6 734.3,251.2 734.5,251.3 734.7,251.3 734.9,251.1 735.1,251.3 735.3,251.1 735.5,251.3 735.7,251.6 735.9,251.5 736.1,251.0 736.3,250.7 736.5,251.5 736.8,251.1 737.0,251.1 737.2,251.1 737.4,251.0 737.6,250.9 737.8,250.9 738.0,251.2 738.2,251.3 738.4,250.9 738.6,258.0 738.8,251.4 739.0,250.9 739.2,251.1 739.4,250.5 739.6,250.9 739.8,250.9 740.0,251.1 740.2,251.1 740.4,251.6 740.6,251.3 740.8,250.8 741.0,251.0 741.2,251.3 741.4,250.8 741.6,250.9 741.8,250.9 742.1,251.3 742.3,250.8 742.5,250.9 742.7,251.1 742.9,250.9 743.1,251.1 743.3,251.4 743.5,251.0 743.7,251.0 743.9,257.0 744.1,251.2 744.3,251.3 744.5,251.0 744.7,251.4 744.9,251.1 745.1,251.4 745.3,251.4 745.5,250.7 745.7,251.4 745.9,251.1 746.1,251.2 746.3,251.0 746.5,251.1 746.7,251.1 746.9,250.9 747.1,250.9 747.4,251.3 747.6,251.0 747.8,255.8 748.0,251.4 748.2,250.7 748.4,251.2 748.6,251.0 748.8,250.9 749.0,251.2 749.2,251.1 749.4,251.0 749.6,251.0 749.8,250.9 750.0,250.9 750.2,250.8 750.4,251.0 750.6,250.7 750.8,251.4 751.0,251.2 751.2,251.2 751.4,250.9 751.6,251.0 751.8,251.1 752.0,251.5 752.2,250.8 752.4,250.8 752.7,251.1 752.9,251.2 753.1,250.8 753.3,251.3 753.5,250.8 753.7,251.0 753.9,251.0 754.1,251.2 754.3,251.3 754.5,251.0 754.7,250.9 754.9,251.6 755.1,250.9 755.3,251.2 755.5,251.2 755.7,251.2 755.9,251.7 756.1,250.9 756.3,250.7 756.5,251.1 756.7,251.4 756.9,251.1 757.1,250.8 757.3,251.7 757.5,251.5 757.7,251.2 758.0,251.2 758.2,250.7 758.4,251.1 758.6,251.3 758.8,251.5 759.0,251.2 759.2,251.5 759.4,254.9 759.6,251.0 759.8,251.0 760.0,251.1 760.2,250.9 760.4,250.7 760.6,251.1 760.8,251.2 761.0,251.4 761.2,251.0 761.4,251.2 761.6,250.8 761.8,251.0 762.0,251.1 762.2,251.2 762.4,251.1 762.6,251.3 762.8,251.3 763.0,251.4 763.3,251.3 763.5,250.8 763.7,251.2 763.9,251.4 764.1,251.2 764.3,250.8 764.5,251.1 764.7,251.2 764.9,251.5 765.1,251.4 765.3,250.8 765.5,251.2 765.7,251.2 765.9,250.8 766.1,250.7 766.3,251.1 766.5,251.0 766.7,251.1 766.9,251.3 767.1,251.1 767.3,251.2 767.5,251.1 767.7,250.9 767.9,250.9 768.1,251.1 768.3,251.1 768.6,251.3 768.8,251.2 769.0,251.2 769.2,250.8 769.4,250.5 769.6,251.3 769.8,251.4 770.0,251.0 770.2,251.1 770.4,250.6 770.6,251.0 770.8,250.7 771.0,251.4 771.2,250.8 771.4,251.0 771.6,250.9 771.8,251.2 772.0,253.6 772.2,250.9 772.4,251.0 772.6,251.4 772.8,250.8 773.0,251.1 773.2,251.2 773.4,251.2 773.6,251.0 773.9,251.2 774.1,251.1 774.3,250.9 774.5,251.1 774.7,251.2 774.9,251.2 775.1,251.1 775.3,251.4 775.5,251.2 775.7,251.3 775.9,251.6 776.1,250.9 776.3,250.7 776.5,251.6 776.7,250.7 776.9,251.2 777.1,251.0 777.3,251.3 777.5,251.1 777.7,250.6 777.9,250.7 778.1,250.9 778.3,250.7 778.5,251.2 778.7,251.5 778.9,251.3 779.1,251.2 779.4,251.1 779.6,250.9 779.8,251.0 780.0,251.0 780.2,250.8 780.4,251.0 780.6,250.9 780.8,251.6 781.0,251.0 781.2,250.6 781.4,251.1 781.6,250.8 781.8,250.9 782.0,250.9 782.2,251.1 782.4,251.2 782.6,251.7 782.8,251.4 783.0,251.0 783.2,251.2 783.4,251.3 783.6,251.0 783.8,251.1 784.0,251.3 784.2,251.0 784.4,251.4 784.7,251.0 784.9,251.2 785.1,251.3 785.3,251.1 785.5,251.0 785.7,250.6 785.9,251.2 786.1,251.2 786.3,251.2 786.5,251.2 786.7,250.8 786.9,251.1 787.1,251.2 787.3,251.2 787.5,250.8 787.7,251.0 787.9,251.1 788.1,250.9 788.3,251.4 788.5,251.0 788.7,251.5 788.9,251.1 789.1,251.3 789.3,251.1 789.5,251.3 789.7,251.3 790.0,251.4 790.2,250.9 790.4,251.2 790.6,251.1 790.8,251.1 791.0,251.1 791.2,251.5 791.4,251.0 791.6,251.0 791.8,251.6 792.0,251.5 792.2,251.0 792.4,251.4 792.6,251.0 792.8,250.9 793.0,251.5 793.2,251.3 793.4,251.1 793.6,251.4 793.8,251.2 794.0,250.9 794.2,251.2 794.4,251.1 794.6,251.4 794.8,251.1 795.0,251.0 795.3,251.2 795.5,251.3 795.7,251.4 795.9,251.3 796.1,251.3 796.3,251.0 796.5,251.2 796.7,251.2 796.9,251.2 797.1,251.0 797.3,251.0 797.5,251.0 797.7,251.4 797.9,251.0 798.1,250.9 798.3,251.1 798.5,251.4 798.7,251.4 798.9,250.8 799.1,251.2 799.3,251.4 799.5,251.0 799.7,251.4 799.9,251.0 800.1,251.3 800.3,251.1 800.6,250.9 800.8,251.0 801.0,250.9 801.2,251.2 801.4,251.3 801.6,251.0 801.8,251.1 802.0,250.9 802.2,251.1 802.4,251.0 802.6,251.0 802.8,251.1 803.0,251.6 803.2,251.0 803.4,251.2 803.6,251.0 803.8,250.9 804.0,250.9 804.2,251.3 804.4,251.0 804.6,251.1 804.8,251.2 805.0,252.7 805.2,252.5 805.4,252.6 805.6,252.6 805.9,252.2 806.1,252.5 806.3,252.6 806.5,252.7 806.7,252.4 806.9,252.9 807.1,252.4 807.3,252.4 807.5,252.6 807.7,252.8 807.9,252.4 808.1,252.7 808.3,252.7 808.5,252.5 808.7,252.4 808.9,252.5 809.1,252.9 809.3,252.7 809.5,252.9 809.7,253.4 809.9,252.6 810.1,252.5 810.3,252.7 810.5,252.4 810.7,252.5 810.9,253.0 811.2,252.9 811.4,252.8 811.6,252.6 811.8,252.6 812.0,252.8 812.2,252.7 812.4,252.8 812.6,252.5 812.8,252.7 813.0,252.6 813.2,252.5 813.4,252.5 813.6,252.9 813.8,252.7 814.0,252.7 814.2,252.5 814.4,252.8 814.6,252.7 814.8,252.8 815.0,252.3 815.2,252.5 815.4,252.7 815.6,252.7 815.8,252.9 816.0,252.6 816.2,252.6 816.5,252.7 816.7,252.8 816.9,252.8 817.1,252.7 817.3,253.1 817.5,252.5 817.7,253.0 817.9,252.6 818.1,252.7 818.3,252.8 818.5,252.7 818.7,252.8 818.9,252.4 819.1,252.9 819.3,252.8 819.5,252.5 819.7,252.5 819.9,252.9 820.1,252.6 820.3,252.5 820.5,252.9 820.7,252.6 820.9,252.9 821.1,252.4 821.3,252.9 821.5,253.4 821.8,252.8 822.0,252.4 822.2,252.6 822.4,252.7 822.6,252.2 822.8,252.8 823.0,252.6 823.2,252.9 823.4,252.7 823.6,253.0 823.8,252.5 824.0,252.8 824.2,252.6 824.4,252.4 824.6,252.8 824.8,252.4 825.0,252.5 825.2,252.4 825.4,253.0 825.6,252.4 825.8,252.1 826.0,252.7 826.2,252.9 826.4,252.6 826.6,252.5 826.8,252.4 827.1,252.4 827.3,252.8 827.5,252.5 827.7,252.5 827.9,252.6 828.1,252.8 828.3,252.7 828.5,253.0 828.7,252.7 828.9,252.2 829.1,252.8 829.3,252.3 829.5,253.1 829.7,252.7 829.9,252.8 830.1,252.6 830.3,252.7 830.5,252.5 830.7,252.5 830.9,252.1 831.1,252.6 831.3,252.1 831.5,252.4 831.7,252.5 831.9,252.7 832.1,252.8 832.4,252.8 832.6,252.5 832.8,252.1 833.0,252.8 833.2,252.8 833.4,252.6 833.6,253.0 833.8,252.9 834.0,252.3 834.2,252.5 834.4,252.9 834.6,252.7 834.8,252.4 835.0,252.7" fill="none" stroke="#eeeeee" stroke-width="1.05"/><polyline points="223.5,299.3 223.7,298.7 223.9,299.2 224.1,298.2 224.3,296.9 224.5,298.9 224.7,298.7 224.9,298.0 225.1,298.8 225.3,298.8 225.5,298.3 225.7,298.1 225.9,299.1 226.1,298.1 226.4,297.1 226.6,299.6 226.8,299.3 227.0,298.3 227.2,298.3 227.4,298.4 227.6,298.5 227.8,299.2 228.0,299.5 228.2,298.0 228.4,298.8 228.6,299.0 228.8,297.8 229.0,298.2 229.2,299.6 229.4,297.5 229.6,298.8 229.8,298.9 230.0,299.1 230.2,298.7 230.4,298.2 230.6,296.6 230.8,298.2 231.0,298.1 231.2,298.3 231.4,298.1 231.7,299.1 231.9,298.2 232.1,299.3 232.3,297.4 232.5,299.1 232.7,299.6 232.9,299.2 233.1,299.0 233.3,299.0 233.5,297.4 233.7,298.5 233.9,299.7 234.1,297.0 234.3,298.0 234.5,299.4 234.7,298.4 234.9,299.6 235.1,298.2 235.3,298.5 235.5,299.5 235.7,298.0 235.9,297.7 236.1,298.4 236.3,298.7 236.5,297.9 236.7,298.4 237.0,298.3 237.2,298.5 237.4,297.6 237.6,297.7 237.8,299.8 238.0,299.5 238.2,298.2 238.4,298.8 238.6,298.3 238.8,299.7 239.0,296.2 239.2,298.1 239.4,298.0 239.6,298.6 239.8,298.2 240.0,298.4 240.2,298.6 240.4,299.1 240.6,299.4 240.8,298.2 241.0,299.5 241.2,298.2 241.4,298.0 241.6,298.2 241.8,298.6 242.0,299.1 242.3,298.8 242.5,298.6 242.7,296.8 242.9,299.4 243.1,297.4 243.3,298.4 243.5,298.4 243.7,298.7 243.9,299.3 244.1,298.0 244.3,297.9 244.5,298.0 244.7,298.5 244.9,299.1 245.1,299.1 245.3,298.5 245.5,298.5 245.7,297.0 245.9,298.3 246.1,298.9 246.3,299.1 246.5,298.5 246.7,298.0 246.9,298.7 247.1,297.5 247.3,297.7 247.6,297.6 247.8,298.3 248.0,298.4 248.2,296.5 248.4,298.6 248.6,298.3 248.8,298.4 249.0,298.7 249.2,297.7 249.4,298.6 249.6,299.3 249.8,296.7 250.0,298.7 250.2,299.2 250.4,299.4 250.6,300.1 250.8,297.9 251.0,299.0 251.2,298.7 251.4,298.0 251.6,299.5 251.8,299.1 252.0,298.1 252.2,299.1 252.4,299.5 252.6,297.3 252.9,298.4 253.1,297.4 253.3,297.8 253.5,299.7 253.7,297.8 253.9,298.9 254.1,300.6 254.3,298.6 254.5,298.5 254.7,297.8 254.9,298.0 255.1,298.7 255.3,298.8 255.5,299.1 255.7,298.6 255.9,298.7 256.1,299.8 256.3,296.9 256.5,297.8 256.7,297.4 256.9,298.6 257.1,298.0 257.3,298.4 257.5,298.9 257.7,299.1 257.9,299.0 258.2,298.5 258.4,297.9 258.6,298.4 258.8,298.3 259.0,298.9 259.2,297.6 259.4,298.6 259.6,297.9 259.8,297.5 260.0,298.4 260.2,298.8 260.4,299.5 260.6,298.3 260.8,298.0 261.0,298.3 261.2,298.5 261.4,298.7 261.6,297.2 261.8,298.9 262.0,299.7 262.2,298.7 262.4,299.1 262.6,298.2 262.8,298.1 263.0,299.4 263.2,298.4 263.5,298.1 263.7,298.9 263.9,299.1 264.1,298.1 264.3,298.9 264.5,298.8 264.7,300.2 264.9,298.8 265.1,298.6 265.3,297.7 265.5,298.8 265.7,298.2 265.9,299.4 266.1,298.2 266.3,298.9 266.5,298.5 266.7,299.1 266.9,298.8 267.1,299.0 267.3,299.8 267.5,298.6 267.7,298.9 267.9,299.2 268.1,298.1 268.3,298.8 268.5,299.1 268.8,298.0 269.0,300.2 269.2,300.2 269.4,298.9 269.6,297.3 269.8,299.4 270.0,297.5 270.2,299.1 270.4,296.8 270.6,299.1 270.8,300.4 271.0,298.5 271.2,298.7 271.4,298.0 271.6,298.7 271.8,298.4 272.0,299.4 272.2,298.3 272.4,298.1 272.6,299.0 272.8,299.5 273.0,298.5 273.2,298.1 273.4,299.1 273.6,298.3 273.8,297.2 274.1,298.9 274.3,296.5 274.5,296.6 274.7,298.3 274.9,298.5 275.1,298.1 275.3,298.7 275.5,298.5 275.7,297.8 275.9,299.6 276.1,299.2 276.3,297.8 276.5,298.7 276.7,298.4 276.9,298.5 277.1,298.0 277.3,298.5 277.5,298.6 277.7,298.9 277.9,298.4 278.1,297.6 278.3,299.5 278.5,298.7 278.7,297.3 278.9,297.9 279.1,297.9 279.4,299.4 279.6,298.8 279.8,298.9 280.0,299.5 280.2,298.3 280.4,299.0 280.6,298.5 280.8,297.7 281.0,297.9 281.2,297.1 281.4,298.7 281.6,299.6 281.8,298.5 282.0,296.7 282.2,298.6 282.4,297.7 282.6,298.0 282.8,299.0 283.0,300.0 283.2,298.6 283.4,298.7 283.6,297.5 283.8,297.6 284.0,297.1 284.2,298.9 284.4,298.6 284.6,298.1 284.9,298.7 285.1,299.1 285.3,299.7 285.5,299.1 285.7,298.6 285.9,298.0 286.1,298.3 286.3,298.7 286.5,298.5 286.7,297.7 286.9,300.3 287.1,299.3 287.3,299.1 287.5,297.9 287.7,298.3 287.9,299.2 288.1,299.6 288.3,298.5 288.5,299.0 288.7,298.9 288.9,297.5 289.1,298.7 289.3,297.1 289.5,298.1 289.7,298.9 289.9,299.1 290.2,298.4 290.4,298.9 290.6,298.6 290.8,297.9 291.0,299.3 291.2,297.4 291.4,298.8 291.6,299.2 291.8,297.9 292.0,298.7 292.2,298.1 292.4,297.7 292.6,299.5 292.8,299.4 293.0,299.6 293.2,297.3 293.4,298.4 293.6,298.8 293.8,299.3 294.0,298.4 294.2,298.6 294.4,298.7 294.6,298.2 294.8,299.4 295.0,297.5 295.2,297.9 295.5,297.2 295.7,298.9 295.9,298.0 296.1,299.7 296.3,299.1 296.5,298.1 296.7,297.9 296.9,299.4 297.1,298.4 297.3,298.8 297.5,297.8 297.7,299.3 297.9,297.4 298.1,298.2 298.3,297.7 298.5,299.1 298.7,298.8 298.9,298.6 299.1,297.8 299.3,296.8 299.5,299.0 299.7,299.1 299.9,298.4 300.1,298.0 300.3,298.0 300.5,297.8 300.8,298.0 301.0,298.4 301.2,298.3 301.4,297.6 301.6,298.3 301.8,298.5 302.0,300.1 302.2,297.7 302.4,297.7 302.6,297.3 302.8,298.8 303.0,297.6 303.2,297.6 303.4,297.5 303.6,298.4 303.8,297.0 304.0,298.5 304.2,297.7 304.4,299.1 304.6,299.9 304.8,299.3 305.0,298.5 305.2,298.9 305.4,297.7 305.6,298.9 305.8,297.7 306.1,298.8 306.3,299.2 306.5,298.1 306.7,297.9 306.9,298.9 307.1,298.4 307.3,298.3 307.5,299.0 307.7,299.2 307.9,299.6 308.1,298.5 308.3,298.7 308.5,297.3 308.7,298.9 308.9,298.1 309.1,298.5 309.3,299.5 309.5,298.5 309.7,298.6 309.9,299.7 310.1,298.4 310.3,298.3 310.5,298.2 310.7,298.3 310.9,297.5 311.1,298.7 311.4,298.4 311.6,296.9 311.8,297.1 312.0,298.6 312.2,298.8 312.4,299.4 312.6,298.7 312.8,299.6 313.0,299.0 313.2,299.1 313.4,299.8 313.6,298.2 313.8,298.5 314.0,298.2 314.2,298.1 314.4,298.8 314.6,299.4 314.8,299.0 315.0,297.9 315.2,299.8 315.4,297.9 315.6,298.8 315.8,298.9 316.0,298.1 316.2,299.9 316.4,298.8 316.7,298.5 316.9,298.4 317.1,299.2 317.3,298.1 317.5,298.9 317.7,298.3 317.9,298.5 318.1,298.7 318.3,298.9 318.5,299.4 318.7,298.5 318.9,298.1 319.1,299.0 319.3,297.8 319.5,297.8 319.7,298.5 319.9,297.9 320.1,297.6 320.3,299.3 320.5,297.6 320.7,299.1 320.9,298.4 321.1,298.4 321.3,298.8 321.5,298.0 321.7,298.4 322.0,297.6 322.2,298.4 322.4,298.7 322.6,298.5 322.8,296.9 323.0,297.1 323.2,297.8 323.4,299.1 323.6,297.2 323.8,298.5 324.0,298.0 324.2,298.9 324.4,298.3 324.6,298.6 324.8,298.0 325.0,298.1 325.2,298.4 325.4,299.2 325.6,298.3 325.8,298.8 326.0,299.2 326.2,299.1 326.4,298.0 326.6,297.9 326.8,299.0 327.0,299.2 327.3,298.1 327.5,298.1 327.7,298.7 327.9,297.4 328.1,298.8 328.3,297.8 328.5,297.5 328.7,298.6 328.9,297.4 329.1,297.7 329.3,298.3 329.5,297.9 329.7,298.8 329.9,297.9 330.1,297.8 330.3,297.6 330.5,299.4 330.7,298.7 330.9,298.4 331.1,298.6 331.3,298.5 331.5,297.9 331.7,298.1 331.9,297.6 332.1,297.2 332.3,298.0 332.6,298.1 332.8,299.7 333.0,297.2 333.2,298.3 333.4,298.5 333.6,299.6 333.8,298.7 334.0,299.0 334.2,298.1 334.4,296.0 334.6,298.2 334.8,298.9 335.0,298.3 335.2,298.6 335.4,297.8 335.6,297.9 335.8,298.7 336.0,297.5 336.2,298.7 336.4,298.8 336.6,297.4 336.8,298.4 337.0,299.9 337.2,298.2 337.4,298.4 337.6,298.3 337.9,299.5 338.1,298.5 338.3,297.9 338.5,298.7 338.7,299.0 338.9,297.1 339.1,300.3 339.3,298.3 339.5,297.9 339.7,298.8 339.9,298.4 340.1,297.9 340.3,298.7 340.5,299.2 340.7,299.2 340.9,299.3 341.1,299.2 341.3,298.9 341.5,298.7 341.7,298.3 341.9,297.9 342.1,298.4 342.3,298.6 342.5,299.1 342.7,298.1 342.9,297.5 343.2,298.5 343.4,299.1 343.6,298.7 343.8,298.5 344.0,297.8 344.2,299.2 344.4,298.0 344.6,299.6 344.8,298.9 345.0,298.1 345.2,299.4 345.4,299.2 345.6,298.8 345.8,298.5 346.0,298.4 346.2,299.1 346.4,299.7 346.6,297.8 346.8,297.1 347.0,299.1 347.2,299.6 347.4,298.2 347.6,298.5 347.8,299.5 348.0,299.0 348.2,297.9 348.4,298.1 348.7,298.7 348.9,299.0 349.1,298.8 349.3,297.8 349.5,297.8 349.7,298.0 349.9,298.1 350.1,298.2 350.3,299.5 350.5,299.2 350.7,298.9 350.9,298.5 351.1,298.0 351.3,298.8 351.5,298.8 351.7,298.8 351.9,296.6 352.1,297.7 352.3,299.5 352.5,298.1 352.7,298.3 352.9,298.4 353.1,298.1 353.3,298.1 353.5,299.2 353.7,298.5 354.0,298.0 354.2,298.2 354.4,299.1 354.6,299.7 354.8,299.4 355.0,298.5 355.2,298.6 355.4,297.4 355.6,299.1 355.8,298.7 356.0,298.5 356.2,298.6 356.4,298.8 356.6,298.9 356.8,298.2 357.0,297.4 357.2,299.0 357.4,299.0 357.6,298.9 357.8,298.8 358.0,298.0 358.2,299.5 358.4,298.7 358.6,298.4 358.8,300.8 359.0,299.4 359.3,298.2 359.5,298.1 359.7,297.9 359.9,297.5 360.1,298.6 360.3,297.7 360.5,299.1 360.7,299.1 360.9,296.6 361.1,298.7 361.3,298.5 361.5,298.6 361.7,298.2 361.9,299.7 362.1,298.9 362.3,298.7 362.5,298.2 362.7,298.1 362.9,300.2 363.1,298.4 363.3,298.5 363.5,297.7 363.7,298.5 363.9,298.0 364.1,296.7 364.3,297.8 364.6,298.5 364.8,298.1 365.0,299.0 365.2,298.6 365.4,298.8 365.6,298.5 365.8,299.4 366.0,298.1 366.2,298.6 366.4,299.0 366.6,298.9 366.8,298.1 367.0,297.8 367.2,299.0 367.4,300.1 367.6,298.6 367.8,298.9 368.0,299.5 368.2,298.8 368.4,298.2 368.6,298.8 368.8,299.0 369.0,299.0 369.2,298.9 369.4,298.8 369.6,297.7 369.9,298.0 370.1,299.3 370.3,299.2 370.5,298.6 370.7,297.9 370.9,299.2 371.1,298.0 371.3,299.7 371.5,299.0 371.7,298.3 371.9,298.0 372.1,298.3 372.3,298.0 372.5,297.6 372.7,298.9 372.9,298.7 373.1,298.8 373.3,298.8 373.5,299.7 373.7,298.5 373.9,298.6 374.1,298.3 374.3,298.2 374.5,298.8 374.7,298.3 374.9,298.3 375.2,297.8 375.4,298.3 375.6,297.8 375.8,299.5 376.0,297.8 376.2,297.1 376.4,299.6 376.6,298.9 376.8,299.6 377.0,298.3 377.2,296.2 377.4,298.0 377.6,298.4 377.8,297.7 378.0,299.0 378.2,297.9 378.4,298.7 378.6,297.7 378.8,298.7 379.0,296.8 379.2,298.3 379.4,299.2 379.6,298.0 379.8,299.5 380.0,299.2 380.2,298.3 380.5,298.4 380.7,299.4 380.9,299.1 381.1,298.2 381.3,298.4 381.5,299.7 381.7,298.3 381.9,299.2 382.1,298.8 382.3,298.7 382.5,297.5 382.7,298.0 382.9,298.4 383.1,298.7 383.3,299.4 383.5,297.7 383.7,297.8 383.9,299.8 384.1,299.1 384.3,298.2 384.5,298.6 384.7,297.2 384.9,298.5 385.1,297.9 385.3,298.6 385.5,296.8 385.8,298.8 386.0,300.3 386.2,298.4 386.4,298.7 386.6,298.7 386.8,298.5 387.0,298.6 387.2,299.6 387.4,300.0 387.6,297.8 387.8,297.9 388.0,299.8 388.2,298.8 388.4,298.0 388.6,297.8 388.8,298.9 389.0,299.4 389.2,297.6 389.4,297.6 389.6,298.3 389.8,298.4 390.0,299.2 390.2,299.1 390.4,299.0 390.6,299.0 390.8,298.5 391.1,297.8 391.3,299.4 391.5,297.9 391.7,299.2 391.9,298.1 392.1,298.3 392.3,300.0 392.5,299.2 392.7,298.5 392.9,297.7 393.1,298.2 393.3,299.1 393.5,298.8 393.7,299.1 393.9,298.7 394.1,298.2 394.3,299.1 394.5,299.1 394.7,298.5 394.9,298.4 395.1,298.1 395.3,297.9 395.5,299.4 395.7,298.6 395.9,297.7 396.1,298.5 396.4,299.1 396.6,298.8 396.8,297.0 397.0,298.0 397.2,299.2 397.4,299.5 397.6,299.3 397.8,299.4 398.0,298.6 398.2,297.8 398.4,299.6 398.6,297.2 398.8,298.7 399.0,298.8 399.2,298.3 399.4,298.3 399.6,297.8 399.8,299.9 400.0,299.3 400.2,298.3 400.4,298.4 400.6,298.9 400.8,297.9 401.0,298.3 401.2,298.3 401.4,296.9 401.7,297.5 401.9,298.8 402.1,299.6 402.3,299.2 402.5,300.1 402.7,297.4 402.9,298.6 403.1,299.9 403.3,298.2 403.5,297.4 403.7,298.2 403.9,297.5 404.1,299.6 404.3,297.9 404.5,298.1 404.7,299.0 404.9,297.7 405.1,298.6 405.3,298.7 405.5,298.5 405.7,299.7 405.9,298.1 406.1,300.0 406.3,297.8 406.5,298.3 406.7,298.8 406.9,298.2 407.2,299.5 407.4,298.1 407.6,299.8 407.8,298.1 408.0,297.7 408.2,299.7 408.4,299.0 408.6,297.4 408.8,298.3 409.0,299.7 409.2,298.4 409.4,299.8 409.6,299.5 409.8,298.1 410.0,299.0 410.2,297.1 410.4,298.1 410.6,299.0 410.8,298.5 411.0,298.6 411.2,297.9 411.4,297.9 411.6,298.7 411.8,298.6 412.0,299.0 412.2,299.1 412.5,297.7 412.7,298.8 412.9,298.5 413.1,300.0 413.3,298.7 413.5,299.7 413.7,298.6 413.9,298.2 414.1,298.6 414.3,299.2 414.5,297.6 414.7,299.0 414.9,297.0 415.1,298.8 415.3,299.1 415.5,298.2 415.7,298.1 415.9,298.8 416.1,298.7 416.3,297.9 416.5,298.0 416.7,299.8 416.9,297.3 417.1,298.9 417.3,300.1 417.5,298.6 417.8,298.4 418.0,299.4 418.2,299.7 418.4,297.9 418.6,298.8 418.8,298.7 419.0,297.0 419.2,299.2 419.4,296.7 419.6,298.6 419.8,299.3 420.0,300.4 420.2,299.2 420.4,299.7 420.6,298.4 420.8,298.9 421.0,297.1 421.2,298.7 421.4,299.3 421.6,297.1 421.8,298.8 422.0,298.6 422.2,297.1 422.4,297.5 422.6,297.3 422.8,297.4 423.1,299.0 423.3,299.1 423.5,298.4 423.7,298.7 423.9,298.2 424.1,300.2 424.3,298.7 424.5,298.1 424.7,298.5 424.9,299.0 425.1,298.2 425.3,297.6 425.5,298.9 425.7,298.6 425.9,299.1 426.1,297.6 426.3,298.4 426.5,297.6 426.7,297.3 426.9,298.8 427.1,298.4 427.3,298.5 427.5,298.0 427.7,299.2 427.9,298.7 428.1,297.7 428.4,298.0 428.6,298.1 428.8,298.4 429.0,297.2 429.2,298.9 429.4,298.8 429.6,298.2 429.8,298.1 430.0,299.7 430.2,299.1 430.4,298.7 430.6,298.0 430.8,298.1 431.0,297.9 431.2,298.7 431.4,298.5 431.6,299.2 431.8,298.4 432.0,299.2 432.2,298.6 432.4,298.2 432.6,299.1 432.8,297.5 433.0,298.7 433.2,298.0 433.4,299.0 433.7,300.1 433.9,298.7 434.1,299.0 434.3,298.1 434.5,298.9 434.7,298.4 434.9,296.7 435.1,298.1 435.3,299.2 435.5,299.4 435.7,298.9 435.9,298.0 436.1,297.3 436.3,297.8 436.5,297.8 436.7,298.0 436.9,298.9 437.1,298.1 437.3,299.7 437.5,298.4 437.7,297.4 437.9,299.2 438.1,299.4 438.3,299.9 438.5,299.1 438.7,298.7 439.0,298.2 439.2,298.9 439.4,299.6 439.6,299.3 439.8,297.4 440.0,298.8 440.2,299.3 440.4,297.7 440.6,298.7 440.8,299.9 441.0,297.8 441.2,297.7 441.4,298.2 441.6,297.2 441.8,297.6 442.0,298.3 442.2,297.7 442.4,298.1 442.6,299.2 442.8,298.1 443.0,299.4 443.2,297.5 443.4,299.2 443.6,297.8 443.8,297.7 444.0,298.5 444.3,298.5 444.5,299.4 444.7,298.5 444.9,297.9 445.1,298.2 445.3,299.1 445.5,299.2 445.7,297.9 445.9,298.4 446.1,298.8 446.3,297.7 446.5,298.4 446.7,298.8 446.9,299.0 447.1,297.8 447.3,298.8 447.5,298.4 447.7,297.3 447.9,297.9 448.1,298.4 448.3,298.2 448.5,298.2 448.7,298.6 448.9,299.3 449.1,296.8 449.3,297.8 449.6,298.5 449.8,299.0 450.0,298.7 450.2,298.4 450.4,298.5 450.6,299.7 450.8,298.8 451.0,298.1 451.2,299.8 451.4,297.5 451.6,299.7 451.8,298.2 452.0,299.2 452.2,298.4 452.4,299.7 452.6,298.9 452.8,297.4 453.0,298.7 453.2,298.0 453.4,299.6 453.6,298.8 453.8,298.4 454.0,297.5 454.2,298.0 454.4,298.0 454.6,298.9 454.9,299.6 455.1,299.6 455.3,297.9 455.5,298.4 455.7,297.0 455.9,298.1 456.1,298.4 456.3,297.9 456.5,299.2 456.7,298.0 456.9,301.0 457.1,298.9 457.3,297.0 457.5,298.6 457.7,299.4 457.9,298.1 458.1,299.3 458.3,299.3 458.5,298.3 458.7,300.0 458.9,298.8 459.1,298.9 459.3,299.0 459.5,297.9 459.7,299.0 459.9,299.5 460.2,297.1 460.4,298.1 460.6,298.7 460.8,298.7 461.0,298.1 461.2,298.0 461.4,299.2 461.6,298.3 461.8,297.8 462.0,298.1 462.2,299.2 462.4,299.3 462.6,298.6 462.8,298.3 463.0,297.8 463.2,298.4 463.4,299.1 463.6,298.5 463.8,299.0 464.0,299.8 464.2,297.8 464.4,298.3 464.6,299.5 464.8,298.9 465.0,299.5 465.2,298.1 465.5,298.5 465.7,298.9 465.9,297.6 466.1,299.0 466.3,298.5 466.5,298.0 466.7,298.6 466.9,297.3 467.1,298.6 467.3,298.8 467.5,296.7 467.7,298.9 467.9,298.1 468.1,298.6 468.3,299.3 468.5,298.8 468.7,298.1 468.9,298.2 469.1,298.6 469.3,296.3 469.5,297.6 469.7,298.7 469.9,299.2 470.1,298.5 470.3,299.8 470.5,298.6 470.7,296.7 471.0,298.8 471.2,297.5 471.4,299.4 471.6,298.4 471.8,299.2 472.0,298.4 472.2,299.3 472.4,297.8 472.6,297.0 472.8,298.0 473.0,298.4 473.2,298.6 473.4,298.5 473.6,298.3 473.8,297.2 474.0,298.1 474.2,299.2 474.4,297.8 474.6,299.2 474.8,298.7 475.0,297.5 475.2,300.4 475.4,298.3 475.6,299.5 475.8,297.6 476.0,299.7 476.3,297.9 476.5,298.8 476.7,297.8 476.9,299.0 477.1,298.8 477.3,298.5 477.5,299.0 477.7,298.2 477.9,298.6 478.1,299.0 478.3,298.0 478.5,297.8 478.7,298.9 478.9,300.1 479.1,300.0 479.3,298.9 479.5,299.8 479.7,298.6 479.9,297.1 480.1,298.4 480.3,299.4 480.5,299.1 480.7,298.9 480.9,298.9 481.1,298.5 481.3,298.0 481.6,298.3 481.8,298.0 482.0,299.1 482.2,298.0 482.4,299.4 482.6,298.7 482.8,297.9 483.0,298.0 483.2,298.5 483.4,298.4 483.6,299.3 483.8,299.1 484.0,298.2 484.2,298.7 484.4,299.3 484.6,296.6 484.8,297.5 485.0,299.7 485.2,299.9 485.4,299.1 485.6,297.5 485.8,298.4 486.0,298.7 486.2,298.3 486.4,297.7 486.6,298.2 486.9,297.4 487.1,297.4 487.3,299.4 487.5,299.1 487.7,297.1 487.9,298.9 488.1,299.2 488.3,299.0 488.5,299.2 488.7,299.5 488.9,298.7 489.1,298.6 489.3,299.6 489.5,298.5 489.7,298.0 489.9,299.4 490.1,299.9 490.3,297.6 490.5,298.8 490.7,299.0 490.9,298.9 491.1,297.7 491.3,298.4 491.5,297.7 491.7,299.8 491.9,298.1 492.2,298.5 492.4,298.5 492.6,297.2 492.8,299.2 493.0,299.1 493.2,298.9 493.4,298.5 493.6,298.6 493.8,297.7 494.0,299.4 494.2,298.8 494.4,297.2 494.6,299.1 494.8,297.1 495.0,298.8 495.2,297.5 495.4,298.6 495.6,297.8 495.8,298.4 496.0,299.3 496.2,299.8 496.4,298.5 496.6,298.4 496.8,297.7 497.0,299.1 497.2,298.8 497.5,299.5 497.7,298.7 497.9,299.0 498.1,299.0 498.3,299.3 498.5,299.3 498.7,298.2 498.9,299.0 499.1,298.4 499.3,298.8 499.5,298.7 499.7,298.0 499.9,299.9 500.1,297.7 500.3,298.2 500.5,298.3 500.7,299.2 500.9,298.3 501.1,297.7 501.3,298.4 501.5,299.3 501.7,299.0 501.9,297.6 502.1,298.2 502.3,298.1 502.5,298.4 502.8,298.2 503.0,299.2 503.2,299.0 503.4,297.7 503.6,298.5 503.8,297.1 504.0,299.7 504.2,298.4 504.4,298.6 504.6,298.3 504.8,299.3 505.0,298.4 505.2,298.0 505.4,299.3 505.6,298.6 505.8,298.6 506.0,298.6 506.2,298.0 506.4,300.1 506.6,298.2 506.8,297.6 507.0,298.1 507.2,297.6 507.4,298.9 507.6,300.0 507.8,299.5 508.1,297.0 508.3,298.4 508.5,297.6 508.7,299.1 508.9,300.1 509.1,299.4 509.3,298.8 509.5,299.2 509.7,297.4 509.9,297.6 510.1,298.5 510.3,298.8 510.5,298.8 510.7,297.7 510.9,298.6 511.1,297.9 511.3,298.7 511.5,297.3 511.7,298.4 511.9,299.7 512.1,298.2 512.3,298.0 512.5,298.0 512.7,299.3 512.9,298.1 513.1,297.4 513.4,298.5 513.6,299.6 513.8,298.0 514.0,298.0 514.2,297.5 514.4,298.0 514.6,298.1 514.8,298.4 515.0,298.3 515.2,299.1 515.4,298.8 515.6,298.8 515.8,299.6 516.0,298.5 516.2,297.5 516.4,299.6 516.6,299.8 516.8,299.1 517.0,299.1 517.2,298.6 517.4,298.2 517.6,298.2 517.8,298.8 518.0,298.7 518.2,298.2 518.4,299.0 518.7,298.6 518.9,298.7 519.1,298.1 519.3,298.6 519.5,300.0 519.7,299.3 519.9,297.9 520.1,298.6 520.3,299.4 520.5,298.2 520.7,297.6 520.9,298.3 521.1,298.8 521.3,299.6 521.5,297.3 521.7,298.8 521.9,298.0 522.1,298.9 522.3,299.6 522.5,299.9 522.7,298.0 522.9,296.5 523.1,298.9 523.3,297.7 523.5,299.2 523.7,298.6 524.0,299.1 524.2,297.6 524.4,298.5 524.6,299.7 524.8,298.8 525.0,298.3 525.2,297.5 525.4,299.1 525.6,298.8 525.8,297.7 526.0,300.4 526.2,298.2 526.4,298.4 526.6,298.3 526.8,297.9 527.0,299.4 527.2,300.0 527.4,298.6 527.6,299.8 527.8,298.6 528.0,298.5 528.2,297.4 528.4,298.1 528.6,298.2 528.8,298.9 529.0,299.4 529.2,298.8 529.5,299.1 529.7,297.3 529.9,299.2 530.1,299.0 530.3,298.5 530.5,298.1 530.7,298.7 530.9,298.1 531.1,297.6 531.3,297.6 531.5,298.2 531.7,297.8 531.9,298.9 532.1,298.5 532.3,299.0 532.5,298.7 532.7,298.6 532.9,297.5 533.1,299.1 533.3,299.6 533.5,296.8 533.7,299.5 533.9,298.8 534.1,297.3 534.3,300.2 534.5,299.4 534.8,299.4 535.0,299.2 535.2,298.8 535.4,297.3 535.6,297.4 535.8,298.7 536.0,299.7 536.2,298.9 536.4,296.9 536.6,298.5 536.8,299.2 537.0,298.8 537.2,298.6 537.4,298.0 537.6,297.1 537.8,298.4 538.0,298.4 538.2,298.6 538.4,298.3 538.6,299.6 538.8,298.8 539.0,297.3 539.2,298.3 539.4,297.5 539.6,297.9 539.8,298.5 540.1,297.6 540.3,299.1 540.5,299.7 540.7,299.0 540.9,299.7 541.1,299.3 541.3,298.5 541.5,297.2 541.7,299.5 541.9,299.2 542.1,299.6 542.3,299.1 542.5,298.2 542.7,298.1 542.9,298.6 543.1,298.2 543.3,297.6 543.5,298.3 543.7,298.1 543.9,298.6 544.1,299.2 544.3,299.5 544.5,297.0 544.7,298.9 544.9,298.5 545.1,298.6 545.4,298.5 545.6,298.3 545.8,297.8 546.0,298.7 546.2,298.5 546.4,297.7 546.6,297.9 546.8,299.1 547.0,298.0 547.2,298.2 547.4,298.9 547.6,298.7 547.8,299.1 548.0,298.2 548.2,298.9 548.4,296.5 548.6,300.4 548.8,298.8 549.0,298.5 549.2,297.7 549.4,298.8 549.6,298.4 549.8,299.9 550.0,298.6 550.2,298.1 550.4,298.2 550.7,298.1 550.9,298.8 551.1,297.8 551.3,298.2 551.5,298.6 551.7,297.5 551.9,298.2 552.1,298.4 552.3,298.3 552.5,297.4 552.7,297.2 552.9,299.1 553.1,298.2 553.3,297.5 553.5,298.7 553.7,298.8 553.9,297.6 554.1,299.0 554.3,298.0 554.5,297.4 554.7,298.6 554.9,298.2 555.1,297.8 555.3,300.4 555.5,297.2 555.7,299.7 556.0,296.6 556.2,298.6 556.4,297.9 556.6,297.9 556.8,299.4 557.0,299.0 557.2,297.7 557.4,299.5 557.6,298.6 557.8,299.0 558.0,299.0 558.2,298.7 558.4,298.1 558.6,298.1 558.8,297.9 559.0,298.7 559.2,299.3 559.4,298.5 559.6,299.2 559.8,299.3 560.0,298.2 560.2,300.2 560.4,298.3 560.6,298.4 560.8,298.5 561.0,298.3 561.3,300.0 561.5,299.9 561.7,297.8 561.9,299.7 562.1,298.3 562.3,298.7 562.5,300.2 562.7,298.4 562.9,298.9 563.1,298.0 563.3,298.1 563.5,298.1 563.7,298.8 563.9,298.1 564.1,298.5 564.3,297.5 564.5,296.7 564.7,298.8 564.9,299.2 565.1,299.3 565.3,298.6 565.5,299.1 565.7,298.2 565.9,299.2 566.1,297.9 566.3,299.3 566.6,298.2 566.8,297.6 567.0,299.2 567.2,297.3 567.4,298.2 567.6,297.4 567.8,299.3 568.0,298.7 568.2,299.2 568.4,297.9 568.6,297.8 568.8,298.5 569.0,298.6 569.2,298.4 569.4,298.4 569.6,298.7 569.8,298.3 570.0,298.5 570.2,299.6 570.4,298.5 570.6,298.6 570.8,298.5 571.0,298.7 571.2,298.5 571.4,296.6 571.6,296.8 571.9,298.2 572.1,298.5 572.3,298.2 572.5,297.8 572.7,298.0 572.9,297.5 573.1,298.4 573.3,298.9 573.5,299.0 573.7,299.5 573.9,297.3 574.1,299.0 574.3,296.9 574.5,298.0 574.7,298.6 574.9,298.8 575.1,299.1 575.3,298.8 575.5,298.1 575.7,298.7 575.9,299.2 576.1,299.8 576.3,299.0 576.5,297.7 576.7,299.9 576.9,297.3 577.2,299.0 577.4,297.2 577.6,298.2 577.8,298.7 578.0,297.8 578.2,298.3 578.4,298.5 578.6,298.8 578.8,297.7 579.0,298.6 579.2,298.6 579.4,298.4 579.6,299.7 579.8,297.6 580.0,298.5 580.2,298.2 580.4,297.7 580.6,297.3 580.8,298.1 581.0,298.2 581.2,298.4 581.4,298.5 581.6,297.8 581.8,298.6 582.0,298.0 582.2,298.6 582.5,297.0 582.7,298.9 582.9,298.4 583.1,298.3 583.3,298.1 583.5,298.1 583.7,296.4 583.9,298.8 584.1,298.2 584.3,299.6 584.5,297.9 584.7,299.2 584.9,298.8 585.1,298.6 585.3,297.5 585.5,297.1 585.7,298.5 585.9,298.4 586.1,297.9 586.3,297.0 586.5,298.0 586.7,296.9 586.9,298.2 587.1,298.7 587.3,299.5 587.5,299.2 587.8,298.5 588.0,298.7 588.2,299.4 588.4,298.4 588.6,298.4 588.8,298.7 589.0,298.8 589.2,297.3 589.4,298.6 589.6,297.8 589.8,298.5 590.0,298.2 590.2,299.5 590.4,297.7 590.6,298.8 590.8,299.8 591.0,298.6 591.2,297.9 591.4,298.9 591.6,299.3 591.8,297.4 592.0,298.7 592.2,298.7 592.4,298.5 592.6,298.5 592.8,298.4 593.0,298.3 593.3,299.5 593.5,298.5 593.7,297.7 593.9,297.9 594.1,298.9 594.3,297.9 594.5,298.8 594.7,297.6 594.9,298.5 595.1,299.7 595.3,298.4 595.5,298.6 595.7,298.8 595.9,298.8 596.1,297.8 596.3,298.8 596.5,299.2 596.7,298.5 596.9,297.8 597.1,299.5 597.3,298.1 597.5,297.9 597.7,299.1 597.9,299.0 598.1,298.4 598.3,299.4 598.6,298.8 598.8,299.0 599.0,299.0 599.2,297.8 599.4,298.4 599.6,298.2 599.8,298.0 600.0,298.3 600.2,298.2 600.4,299.9 600.6,297.7 600.8,298.1 601.0,298.5 601.2,300.1 601.4,299.4 601.6,299.7 601.8,299.0 602.0,300.2 602.2,297.9 602.4,299.0 602.6,298.6 602.8,299.1 603.0,298.8 603.2,298.5 603.4,296.5 603.6,297.2 603.9,297.5 604.1,299.3 604.3,300.8 604.5,299.2 604.7,299.5 604.9,299.1 605.1,298.4 605.3,298.3 605.5,298.3 605.7,298.4 605.9,297.7 606.1,299.0 606.3,299.2 606.5,297.4 606.7,299.3 606.9,297.5 607.1,299.3 607.3,298.8 607.5,298.9 607.7,298.6 607.9,298.9 608.1,298.1 608.3,297.8 608.5,297.8 608.7,299.2 608.9,298.5 609.2,299.3 609.4,299.8 609.6,298.6 609.8,297.8 610.0,299.2 610.2,298.9 610.4,298.2 610.6,298.4 610.8,298.6 611.0,298.7 611.2,298.4 611.4,296.7 611.6,299.1 611.8,297.9 612.0,299.0 612.2,298.0 612.4,298.8 612.6,299.1 612.8,297.0 613.0,297.0 613.2,298.9 613.4,298.0 613.6,298.1 613.8,298.2 614.0,299.5 614.2,300.2 614.5,298.3 614.7,297.8 614.9,297.5 615.1,298.2 615.3,298.2 615.5,298.2 615.7,298.0 615.9,297.5 616.1,299.2 616.3,298.8 616.5,298.1 616.7,297.0 616.9,299.1 617.1,299.0 617.3,298.8 617.5,298.4 617.7,298.4 617.9,298.6 618.1,297.8 618.3,297.9 618.5,298.7 618.7,299.3 618.9,299.7 619.1,299.0 619.3,298.2 619.5,297.3 619.8,297.9 620.0,298.3 620.2,298.1 620.4,298.7 620.6,298.4 620.8,298.9 621.0,298.7 621.2,299.9 621.4,300.0 621.6,298.3 621.8,299.5 622.0,299.7 622.2,298.4 622.4,298.1 622.6,299.7 622.8,298.1 623.0,298.7 623.2,298.5 623.4,300.1 623.6,298.4 623.8,298.1 624.0,298.1 624.2,298.3 624.4,299.5 624.6,299.1 624.8,299.6 625.1,298.4 625.3,297.6 625.5,299.1 625.7,297.5 625.9,298.4 626.1,299.0 626.3,298.3 626.5,299.2 626.7,299.1 626.9,299.6 627.1,300.4 627.3,298.2 627.5,297.4 627.7,297.9 627.9,298.3 628.1,298.1 628.3,298.2 628.5,299.5 628.7,299.8 628.9,298.1 629.1,297.7 629.3,298.7 629.5,297.7 629.7,298.4 629.9,299.0 630.1,298.4 630.4,299.4 630.6,299.9 630.8,298.5 631.0,298.5 631.2,298.1 631.4,299.6 631.6,298.3 631.8,298.6 632.0,299.0 632.2,299.4 632.4,299.4 632.6,299.2 632.8,297.5 633.0,297.8 633.2,297.6 633.4,299.3 633.6,299.4 633.8,298.4 634.0,298.2 634.2,298.5 634.4,296.9 634.6,299.6 634.8,297.8 635.0,297.5 635.2,298.5 635.4,299.3 635.7,298.6 635.9,299.1 636.1,297.7 636.3,299.3 636.5,298.0 636.7,298.7 636.9,300.4 637.1,298.2 637.3,298.7 637.5,299.1 637.7,299.5 637.9,297.4 638.1,298.4 638.3,298.4 638.5,297.6 638.7,298.8 638.9,298.9 639.1,297.8 639.3,297.9 639.5,297.8 639.7,300.4 639.9,299.1 640.1,298.6 640.3,298.4 640.5,299.0 640.7,298.1 641.0,298.9 641.2,298.1 641.4,298.5 641.6,299.4 641.8,297.8 642.0,298.6 642.2,299.1 642.4,298.1 642.6,298.4 642.8,298.5 643.0,298.0 643.2,299.1 643.4,299.5 643.6,298.2 643.8,297.5 644.0,297.8 644.2,299.9 644.4,298.9 644.6,299.9 644.8,297.5 645.0,298.2 645.2,299.2 645.4,300.0 645.6,299.8 645.8,297.7 646.0,298.7 646.3,298.6 646.5,297.2 646.7,298.6 646.9,298.5 647.1,298.5 647.3,298.6 647.5,299.0 647.7,299.8 647.9,299.0 648.1,298.6 648.3,297.1 648.5,298.6 648.7,298.3 648.9,297.7 649.1,299.0 649.3,297.6 649.5,298.8 649.7,297.6 649.9,298.3 650.1,299.2 650.3,297.7 650.5,297.7 650.7,300.0 650.9,298.8 651.1,298.1 651.3,297.3 651.5,299.6 651.8,298.7 652.0,298.8 652.2,299.4 652.4,298.4 652.6,298.1 652.8,297.6 653.0,299.4 653.2,298.2 653.4,298.8 653.6,297.7 653.8,299.2 654.0,299.2 654.2,298.5 654.4,298.4 654.6,298.6 654.8,298.6 655.0,297.5 655.2,298.2 655.4,298.5 655.6,298.9 655.8,300.2 656.0,299.8 656.2,299.2 656.4,298.6 656.6,298.8 656.8,299.0 657.1,298.2 657.3,298.2 657.5,297.9 657.7,299.0 657.9,301.0 658.1,296.4 658.3,299.1 658.5,297.0 658.7,298.5 658.9,300.1 659.1,297.7 659.3,298.0 659.5,297.3 659.7,297.9 659.9,299.0 660.1,298.0 660.3,297.3 660.5,297.3 660.7,298.4 660.9,297.0 661.1,299.2 661.3,297.9 661.5,298.5 661.7,297.1 661.9,297.1 662.1,299.1 662.4,297.6 662.6,298.0 662.8,297.6 663.0,298.5 663.2,299.0 663.4,297.8 663.6,297.6 663.8,298.0 664.0,298.6 664.2,299.6 664.4,298.9 664.6,299.2 664.8,298.7 665.0,298.8 665.2,298.6 665.4,297.4 665.6,298.5 665.8,296.8 666.0,299.2 666.2,299.5 666.4,299.5 666.6,299.1 666.8,299.0 667.0,298.9 667.2,298.5 667.4,297.3 667.7,299.0 667.9,298.9 668.1,297.7 668.3,298.0 668.5,297.4 668.7,298.2 668.9,297.7 669.1,298.4 669.3,298.7 669.5,298.7 669.7,298.6 669.9,299.5 670.1,298.4 670.3,298.2 670.5,297.8 670.7,298.7 670.9,299.2 671.1,298.9 671.3,298.4 671.5,298.2 671.7,297.9 671.9,297.4 672.1,298.7 672.3,299.8 672.5,299.0 672.7,298.7 673.0,297.5 673.2,298.2 673.4,298.3 673.6,300.0 673.8,297.7 674.0,298.2 674.2,297.2 674.4,298.3 674.6,298.6 674.8,298.1 675.0,298.3 675.2,298.2 675.4,299.2 675.6,298.0 675.8,298.1 676.0,299.3 676.2,299.8 676.4,298.5 676.6,298.6 676.8,298.8 677.0,298.4 677.2,299.3 677.4,299.3 677.6,299.0 677.8,298.1 678.0,299.3 678.3,298.7 678.5,299.6 678.7,297.3 678.9,299.6 679.1,300.2 679.3,297.8 679.5,299.3 679.7,299.0 679.9,297.6 680.1,298.6 680.3,299.3 680.5,298.3 680.7,299.3 680.9,297.6 681.1,297.7 681.3,298.7 681.5,298.6 681.7,298.5 681.9,298.9 682.1,298.5 682.3,298.7 682.5,298.2 682.7,298.3 682.9,297.4 683.1,297.8 683.3,297.6 683.6,297.0 683.8,298.0 684.0,299.7 684.2,299.0 684.4,298.6 684.6,297.6 684.8,299.0 685.0,299.2 685.2,297.6 685.4,299.2 685.6,298.0 685.8,297.7 686.0,297.8 686.2,297.6 686.4,299.4 686.6,299.9 686.8,298.6 687.0,299.3 687.2,298.2 687.4,297.2 687.6,297.6 687.8,298.4 688.0,297.5 688.2,297.8 688.4,297.6 688.6,298.8 688.9,298.0 689.1,298.7 689.3,298.7 689.5,297.7 689.7,298.9 689.9,299.7 690.1,297.7 690.3,297.7 690.5,299.5 690.7,299.2 690.9,298.4 691.1,298.3 691.3,298.2 691.5,297.0 691.7,298.8 691.9,298.8 692.1,299.2 692.3,298.4 692.5,298.7 692.7,299.8 692.9,297.3 693.1,298.0 693.3,298.4 693.5,298.6 693.7,298.4 693.9,298.6 694.2,298.4 694.4,298.4 694.6,298.6 694.8,299.3 695.0,297.6 695.2,298.3 695.4,299.3 695.6,298.3 695.8,298.7 696.0,298.3 696.2,298.4 696.4,297.3 696.6,298.1 696.8,298.1 697.0,298.6 697.2,299.3 697.4,298.9 697.6,298.1 697.8,297.7 698.0,298.5 698.2,298.1 698.4,299.3 698.6,298.3 698.8,297.4 699.0,298.8 699.2,298.5 699.5,298.7 699.7,297.8 699.9,299.3 700.1,299.4 700.3,298.0 700.5,298.1 700.7,298.0 700.9,299.2 701.1,299.0 701.3,299.5 701.5,299.1 701.7,299.0 701.9,300.2 702.1,299.5 702.3,297.0 702.5,297.8 702.7,298.0 702.9,299.0 703.1,297.7 703.3,297.8 703.5,298.9 703.7,298.8 703.9,298.9 704.1,298.1 704.3,298.9 704.5,299.7 704.8,298.3 705.0,299.4 705.2,298.3 705.4,299.0 705.6,299.2 705.8,298.4 706.0,296.9 706.2,297.9 706.4,297.9 706.6,297.5 706.8,297.4 707.0,299.4 707.2,297.7 707.4,298.9 707.6,298.3 707.8,298.6 708.0,298.7 708.2,297.2 708.4,300.3 708.6,297.1 708.8,298.7 709.0,299.0 709.2,297.6 709.4,298.9 709.6,297.8 709.8,298.5 710.1,298.9 710.3,298.8 710.5,298.4 710.7,298.2 710.9,300.0 711.1,298.7 711.3,297.5 711.5,298.3 711.7,300.1 711.9,299.4 712.1,298.4 712.3,299.0 712.5,298.8 712.7,298.3 712.9,298.0 713.1,299.3 713.3,297.9 713.5,300.3 713.7,299.2 713.9,297.6 714.1,298.5 714.3,297.3 714.5,299.4 714.7,297.8 714.9,297.5 715.1,299.3 715.3,299.0 715.6,297.6 715.8,299.1 716.0,298.7 716.2,298.8 716.4,298.5 716.6,297.9 716.8,298.4 717.0,298.9 717.2,298.7 717.4,298.9 717.6,299.0 717.8,298.5 718.0,299.3 718.2,298.7 718.4,297.1 718.6,298.5 718.8,297.9 719.0,297.9 719.2,297.6 719.4,297.6 719.6,298.9 719.8,298.9 720.0,297.5 720.2,299.2 720.4,297.4 720.6,299.0 720.9,299.5 721.1,298.7 721.3,299.0 721.5,297.3 721.7,298.9 721.9,298.2 722.1,299.3 722.3,298.7 722.5,299.3 722.7,298.7 722.9,299.2 723.1,299.3 723.3,299.6 723.5,298.3 723.7,300.9 723.9,298.0 724.1,298.7 724.3,299.4 724.5,300.7 724.7,297.7 724.9,298.9 725.1,299.1 725.3,298.8 725.5,298.0 725.7,297.5 725.9,298.5 726.2,297.8 726.4,299.1 726.6,298.0 726.8,298.5 727.0,299.3 727.2,299.1 727.4,298.1 727.6,298.0 727.8,299.7 728.0,298.7 728.2,299.3 728.4,297.7 728.6,298.5 728.8,298.7 729.0,296.9 729.2,299.7 729.4,298.0 729.6,298.3 729.8,298.2 730.0,299.9 730.2,298.6 730.4,298.1 730.6,298.4 730.8,299.0 731.0,298.3 731.2,298.8 731.5,298.0 731.7,298.1 731.9,299.0 732.1,297.6 732.3,297.4 732.5,299.1 732.7,299.1 732.9,298.9 733.1,298.1 733.3,298.4 733.5,298.2 733.7,297.1 733.9,298.4 734.1,298.4 734.3,299.4 734.5,299.5 734.7,296.6 734.9,298.0 735.1,298.6 735.3,299.0 735.5,298.3 735.7,298.0 735.9,299.2 736.1,297.6 736.3,297.6 736.5,298.5 736.8,297.6 737.0,299.1 737.2,299.1 737.4,299.3 737.6,298.8 737.8,299.3 738.0,298.8 738.2,298.8 738.4,298.0 738.6,299.2 738.8,297.9 739.0,297.5 739.2,298.1 739.4,298.4 739.6,298.4 739.8,298.5 740.0,299.2 740.2,298.3 740.4,297.6 740.6,299.0 740.8,299.0 741.0,298.5 741.2,299.5 741.4,297.7 741.6,298.1 741.8,298.1 742.1,298.4 742.3,299.4 742.5,300.0 742.7,298.4 742.9,298.8 743.1,299.6 743.3,298.5 743.5,297.8 743.7,298.5 743.9,298.3 744.1,296.1 744.3,298.3 744.5,298.2 744.7,299.7 744.9,298.6 745.1,298.4 745.3,299.0 745.5,298.8 745.7,298.4 745.9,297.7 746.1,299.1 746.3,298.1 746.5,298.8 746.7,299.5 746.9,299.2 747.1,299.2 747.4,297.1 747.6,298.3 747.8,298.8 748.0,299.6 748.2,297.9 748.4,297.5 748.6,298.9 748.8,297.5 749.0,297.5 749.2,297.4 749.4,298.9 749.6,297.5 749.8,298.3 750.0,298.5 750.2,300.0 750.4,296.9 750.6,298.4 750.8,298.7 751.0,299.2 751.2,298.9 751.4,298.1 751.6,298.7 751.8,299.0 752.0,298.4 752.2,298.4 752.4,298.4 752.7,298.5 752.9,298.0 753.1,299.1 753.3,298.2 753.5,299.1 753.7,298.3 753.9,298.3 754.1,298.1 754.3,299.2 754.5,299.7 754.7,298.0 754.9,298.8 755.1,298.5 755.3,300.0 755.5,299.0 755.7,298.6 755.9,298.9 756.1,297.7 756.3,298.6 756.5,300.5 756.7,298.8 756.9,298.7 757.1,299.5 757.3,298.9 757.5,298.4 757.7,299.8 758.0,299.4 758.2,298.9 758.4,298.7 758.6,298.2 758.8,297.4 759.0,298.1 759.2,298.2 759.4,299.4 759.6,298.7 759.8,298.0 760.0,297.7 760.2,297.1 760.4,298.1 760.6,298.8 760.8,298.8 761.0,297.6 761.2,298.6 761.4,298.5 761.6,300.0 761.8,299.0 762.0,299.4 762.2,298.4 762.4,297.9 762.6,299.0 762.8,297.9 763.0,297.9 763.3,299.1 763.5,298.2 763.7,298.5 763.9,298.4 764.1,299.1 764.3,299.2 764.5,298.9 764.7,299.3 764.9,298.1 765.1,299.4 765.3,297.1 765.5,297.5 765.7,299.1 765.9,299.2 766.1,298.5 766.3,298.8 766.5,299.0 766.7,298.0 766.9,297.4 767.1,298.9 767.3,298.7 767.5,297.4 767.7,299.3 767.9,298.7 768.1,299.2 768.3,299.0 768.6,298.8 768.8,297.9 769.0,297.7 769.2,298.3 769.4,298.0 769.6,297.1 769.8,298.7 770.0,299.2 770.2,298.3 770.4,298.7 770.6,298.8 770.8,297.8 771.0,298.1 771.2,298.2 771.4,298.2 771.6,299.6 771.8,298.7 772.0,299.1 772.2,296.7 772.4,297.8 772.6,298.4 772.8,297.2 773.0,299.0 773.2,298.3 773.4,298.0 773.6,298.0 773.9,298.6 774.1,298.3 774.3,297.9 774.5,298.7 774.7,299.3 774.9,299.4 775.1,298.0 775.3,298.8 775.5,299.2 775.7,297.3 775.9,297.1 776.1,298.7 776.3,298.5 776.5,298.7 776.7,299.1 776.9,299.0 777.1,299.1 777.3,298.1 777.5,298.8 777.7,298.4 777.9,298.1 778.1,298.8 778.3,298.1 778.5,298.1 778.7,298.9 778.9,299.3 779.1,297.9 779.4,299.2 779.6,298.0 779.8,299.6 780.0,298.9 780.2,299.3 780.4,298.9 780.6,298.1 780.8,298.0 781.0,299.7 781.2,298.7 781.4,298.0 781.6,297.8 781.8,298.6 782.0,298.9 782.2,299.6 782.4,298.3 782.6,297.6 782.8,298.8 783.0,299.0 783.2,298.0 783.4,298.7 783.6,297.2 783.8,298.7 784.0,298.7 784.2,297.2 784.4,298.9 784.7,298.1 784.9,297.1 785.1,298.5 785.3,299.6 785.5,297.6 785.7,298.9 785.9,299.5 786.1,298.8 786.3,298.5 786.5,299.3 786.7,298.1 786.9,299.4 787.1,298.2 787.3,298.0 787.5,297.0 787.7,298.5 787.9,299.7 788.1,298.7 788.3,298.5 788.5,297.8 788.7,297.6 788.9,299.1 789.1,298.6 789.3,297.9 789.5,298.7 789.7,297.3 790.0,298.6 790.2,298.2 790.4,297.3 790.6,297.9 790.8,298.1 791.0,298.7 791.2,299.7 791.4,298.5 791.6,297.6 791.8,299.1 792.0,298.3 792.2,297.9 792.4,297.4 792.6,299.1 792.8,300.8 793.0,298.5 793.2,298.6 793.4,298.1 793.6,298.1 793.8,299.0 794.0,298.5 794.2,298.2 794.4,298.9 794.6,297.8 794.8,298.7 795.0,298.0 795.3,297.0 795.5,299.0 795.7,300.4 795.9,299.3 796.1,298.9 796.3,297.7 796.5,298.2 796.7,297.8 796.9,299.1 797.1,299.4 797.3,298.8 797.5,298.3 797.7,298.8 797.9,298.3 798.1,298.4 798.3,299.2 798.5,298.1 798.7,298.3 798.9,297.8 799.1,299.6 799.3,298.0 799.5,297.9 799.7,297.8 799.9,298.3 800.1,299.1 800.3,298.3 800.6,298.2 800.8,299.2 801.0,298.4 801.2,298.4 801.4,298.6 801.6,298.8 801.8,298.4 802.0,298.6 802.2,298.9 802.4,298.2 802.6,299.6 802.8,298.9 803.0,297.5 803.2,298.4 803.4,298.8 803.6,298.5 803.8,298.3 804.0,297.8 804.2,299.1 804.4,298.4 804.6,299.0 804.8,298.0 805.0,299.9 805.2,298.0 805.4,299.7 805.6,297.5 805.9,297.6 806.1,299.2 806.3,298.5 806.5,298.8 806.7,298.0 806.9,298.2 807.1,297.8 807.3,297.8 807.5,297.7 807.7,297.6 807.9,299.0 808.1,298.2 808.3,298.2 808.5,298.4 808.7,299.2 808.9,297.7 809.1,299.6 809.3,298.9 809.5,298.9 809.7,298.3 809.9,299.1 810.1,300.1 810.3,298.3 810.5,298.4 810.7,298.2 810.9,298.9 811.2,298.1 811.4,298.3 811.6,298.4 811.8,298.8 812.0,299.8 812.2,298.9 812.4,298.4 812.6,299.0 812.8,298.9 813.0,298.0 813.2,299.1 813.4,298.5 813.6,298.3 813.8,298.6 814.0,298.0 814.2,298.8 814.4,299.2 814.6,298.2 814.8,299.0 815.0,297.4 815.2,299.2 815.4,299.7 815.6,298.0 815.8,298.3 816.0,297.9 816.2,299.3 816.5,297.3 816.7,296.5 816.9,299.5 817.1,298.8 817.3,297.2 817.5,298.9 817.7,298.0 817.9,297.6 818.1,298.5 818.3,298.1 818.5,299.3 818.7,298.0 818.9,298.3 819.1,299.1 819.3,299.3 819.5,298.8 819.7,296.8 819.9,298.9 820.1,298.4 820.3,298.5 820.5,299.2 820.7,299.4 820.9,299.9 821.1,299.0 821.3,298.5 821.5,298.0 821.8,297.8 822.0,299.2 822.2,298.2 822.4,298.6 822.6,299.8 822.8,298.4 823.0,297.8 823.2,299.3 823.4,297.3 823.6,297.2 823.8,298.7 824.0,298.0 824.2,298.4 824.4,296.9 824.6,298.7 824.8,298.4 825.0,298.1 825.2,298.4 825.4,299.0 825.6,297.7 825.8,298.1 826.0,297.3 826.2,298.0 826.4,299.0 826.6,298.6 826.8,298.2 827.1,298.9 827.3,297.4 827.5,298.5 827.7,298.5 827.9,297.5 828.1,299.8 828.3,297.6 828.5,297.6 828.7,298.5 828.9,299.7 829.1,299.7 829.3,298.6 829.5,299.0 829.7,298.2 829.9,297.8 830.1,298.3 830.3,299.0 830.5,298.5 830.7,298.2 830.9,298.5 831.1,298.5 831.3,298.6 831.5,298.9 831.7,299.2 831.9,298.9 832.1,299.4 832.4,299.2 832.6,299.4 832.8,298.0 833.0,298.3 833.2,298.5 833.4,299.1 833.6,298.1 833.8,298.6 834.0,299.0 834.2,298.7 834.4,298.6 834.6,298.7 834.8,299.0 835.0,298.3" fill="none" stroke="#f4f4f4" stroke-width="1.7"/></svg>
<div class="t" style="left:34.8px;top:385.42px;font-size:12.5px;line-height:12.5px;font-weight:normal;color:#141414;-webkit-text-stroke:0.25px #141414;transform:scaleY(0.92);transform-origin:0 10.58px;">Input File</div>
<div class="pc" style="left:90.7px;top:381px;width:442.30px;height:18.50px"><div class="pw"></div><svg style="position:absolute;left:2px;top:3px" width="7" height="13" viewBox="0 0 7 13"><circle cx="3.2" cy="4.6" r="1.2" fill="none" stroke="#303030" stroke-width="1"/><path d="M2 6.5 L5.2 7.2" stroke="#555" stroke-width="0.7"/><circle cx="4" cy="9" r="1.6" fill="#404040" stroke="#252525" stroke-width="0.9"/></svg></div>
<div class="t" style="left:100.5px;top:385.82px;font-size:12.5px;line-height:12.5px;font-weight:normal;color:#141414;-webkit-text-stroke:0.25px #141414;transform:scaleY(1);transform-origin:0 10.58px;letter-spacing:0.5px">C:\Projects\ZStim\ZStim_1.7_dev\input_files\</div>
<div class="fb" style="left:537.7px;top:379.5px;width:33.00px;height:22.20px"><svg width="27" height="18" viewBox="0 0 30 20" style="position:absolute;left:0.5px;top:1.1px"><path d="M6.5 15.5 V5.5 Q6.5 3.6 8.5 3.6 H11 Q13 3.6 13.8 6.3 H21 V10 H10.5 L6.5 15.5 Z" fill="#f4f400" stroke="#404040" stroke-width="0.7"/><path d="M6.5 15.8 L10.2 9.6 H25.5 L21 15.8 Z" fill="#4e4e4e" stroke="#2a2a2a" stroke-width="0.6"/></svg></div>
<div class="t" style="left:23.5px;top:405.92px;font-size:12.5px;line-height:12.5px;font-weight:normal;color:#141414;-webkit-text-stroke:0.25px #141414;transform:scaleY(0.92);transform-origin:0 10.58px;">File Header</div>
<div class="fr" style="left:90.8px;top:404.2px;width:479.20px;height:37.80px;border-width:2.5px 3.0px 3.0px 2.5px;background:#d0d0d0"></div>
<div class="t" style="left:93.6px;top:408.42px;font-size:12.5px;line-height:12.5px;font-weight:normal;color:#141414;-webkit-text-stroke:0.25px #141414;transform:scaleY(0.92);transform-origin:0 10.58px;">BG array file exists. BG speed and direction vary during presentation</div>
<div class="t" style="left:90.5px;top:443.92px;font-size:12.5px;line-height:12.5px;font-weight:normal;color:#141414;-webkit-text-stroke:0.25px #141414;transform:scaleY(0.92);transform-origin:0 10.58px;">Movies</div>
<div class="t" style="left:19.2px;top:446.22px;font-size:12.5px;line-height:12.5px;font-weight:normal;color:#141414;-webkit-text-stroke:0.25px #141414;transform:scaleY(0.92);transform-origin:0 10.58px;">Play Movie</div>
<svg class="r" style="left:27px;top:460.5px" width="47.5" height="17.5" viewBox="-1 -1 47.5 17.5"><defs><linearGradient id="tg28_461" x1="0" y1="0" x2="0" y2="1"><stop offset="0" stop-color="#dadada"/><stop offset="0.55" stop-color="#b8b8b8"/><stop offset="1" stop-color="#a0a0a0"/></linearGradient></defs><ellipse cx="22.75" cy="8.05" rx="21.75" ry="6.75" fill="#7c7c7c" opacity="0.8"/><ellipse cx="21.75" cy="6.75" rx="21.25" ry="6.25" fill="url(#tg28_461)" stroke="#2e2e2e" stroke-width="1.1"/><path d="M6.96 5.67 Q13.049999999999999 1.8900000000000001 21.75 2.7" stroke="#f0f0f0" stroke-width="1" fill="none" opacity="0.8"/><path d="M27.6225 4.05 L36.975 6.75 L27.6225 9.719999999999999 Z" fill="#1d5a1d" stroke="#1d5a1d" stroke-width="1.6" stroke-linejoin="round"/></svg>
<div class="pc" style="left:91.4px;top:457.5px;width:441.60px;height:19.00px"><div class="pw"></div><svg style="position:absolute;left:2px;top:3px" width="7" height="13" viewBox="0 0 7 13"><circle cx="3.2" cy="4.6" r="1.2" fill="none" stroke="#303030" stroke-width="1"/><path d="M2 6.5 L5.2 7.2" stroke="#555" stroke-width="0.7"/><circle cx="4" cy="9" r="1.6" fill="#404040" stroke="#252525" stroke-width="0.9"/></svg></div>
<div class="fb" style="left:537.7px;top:456.0px;width:33.00px;height:22.70px"><svg width="27" height="18" viewBox="0 0 30 20" style="position:absolute;left:0.5px;top:1.3px"><path d="M6.5 15.5 V5.5 Q6.5 3.6 8.5 3.6 H11 Q13 3.6 13.8 6.3 H21 V10 H10.5 L6.5 15.5 Z" fill="#f4f400" stroke="#404040" stroke-width="0.7"/><path d="M6.5 15.8 L10.2 9.6 H25.5 L21 15.8 Z" fill="#4e4e4e" stroke="#2a2a2a" stroke-width="0.6"/></svg></div>
<div class="r" style="left:10px;top:483.2px;width:569.00px;height:50.60px;background:#a9a9a9;border-top:1.8px solid #c6c6c6;border-left:1.8px solid #c6c6c6;border-right:1.5px solid #767676;border-bottom:1.8px solid #767676;box-sizing:border-box"></div>
<div class="t" style="left:50px;top:491.62px;font-size:12.5px;line-height:12.5px;font-weight:normal;color:#141414;-webkit-text-stroke:0.25px #141414;transform:scaleY(0.92);transform-origin:0 10.58px;">Output</div>
<div class="pc" style="left:92px;top:487.5px;width:441.00px;height:19.00px"><div class="pw"></div><svg style="position:absolute;left:2px;top:3px" width="7" height="13" viewBox="0 0 7 13"><circle cx="3.2" cy="4.6" r="1.2" fill="none" stroke="#303030" stroke-width="1"/><path d="M2 6.5 L5.2 7.2" stroke="#555" stroke-width="0.7"/><circle cx="4" cy="9" r="1.6" fill="#404040" stroke="#252525" stroke-width="0.9"/></svg></div>
<div class="t" style="left:101.8px;top:492.32px;font-size:12.5px;line-height:12.5px;font-weight:normal;color:#141414;-webkit-text-stroke:0.25px #141414;transform:scaleY(1);transform-origin:0 10.58px;letter-spacing:0.5px">C:\Projects\Main\record\trial_h</div>
<div class="fb" style="left:537px;top:486.0px;width:33.00px;height:22.70px"><svg width="27" height="18" viewBox="0 0 30 20" style="position:absolute;left:0.5px;top:1.3px"><path d="M6.5 15.5 V5.5 Q6.5 3.6 8.5 3.6 H11 Q13 3.6 13.8 6.3 H21 V10 H10.5 L6.5 15.5 Z" fill="#f4f400" stroke="#404040" stroke-width="0.7"/><path d="M6.5 15.8 L10.2 9.6 H25.5 L21 15.8 Z" fill="#4e4e4e" stroke="#2a2a2a" stroke-width="0.6"/></svg></div>
<div class="t" style="left:35px;top:514.22px;font-size:12.5px;line-height:12.5px;font-weight:normal;color:#141414;-webkit-text-stroke:0.25px #141414;transform:scaleY(0.92);transform-origin:0 10.58px;">Duplicate</div>
<div class="pc" style="left:92px;top:511px;width:441.00px;height:19.00px"><div class="pw"></div><svg style="position:absolute;left:2px;top:3px" width="7" height="13" viewBox="0 0 7 13"><circle cx="3.2" cy="4.6" r="1.2" fill="none" stroke="#303030" stroke-width="1"/><path d="M2 6.5 L5.2 7.2" stroke="#555" stroke-width="0.7"/><circle cx="4" cy="9" r="1.6" fill="#404040" stroke="#252525" stroke-width="0.9"/></svg></div>
<div class="fb" style="left:537px;top:509.5px;width:33.00px;height:22.70px"><svg width="27" height="18" viewBox="0 0 30 20" style="position:absolute;left:0.5px;top:1.4px"><path d="M6.5 15.5 V5.5 Q6.5 3.6 8.5 3.6 H11 Q13 3.6 13.8 6.3 H21 V10 H10.5 L6.5 15.5 Z" fill="#f4f400" stroke="#404040" stroke-width="0.7"/><path d="M6.5 15.8 L10.2 9.6 H25.5 L21 15.8 Z" fill="#4e4e4e" stroke="#2a2a2a" stroke-width="0.6"/></svg></div>
<div class="btn" style="left:10.5px;top:536.7px;width:86.80px;height:24.60px;background:linear-gradient(#cdcdcd,#b6b6b6);color:#c42436;font-size:11px;line-height:24.59999999999991px;font-weight:bold;-webkit-text-stroke:0px #c42436">START</div>
<div class="btn" style="left:100.3px;top:536.7px;width:87.80px;height:24.60px;background:linear-gradient(#cdcdcd,#b6b6b6);color:#c42436;font-size:11px;line-height:24.59999999999991px;font-weight:bold;-webkit-text-stroke:0px #c42436">STOP</div>
<svg class="r" style="left:213px;top:539.5px" width="22" height="22" viewBox="0 0 22 22"><defs><radialGradient id="lg" cx="0.38" cy="0.32" r="0.7"><stop offset="0" stop-color="#5a8a5a"/><stop offset="0.25" stop-color="#2a5a2a"/><stop offset="1" stop-color="#103010"/></radialGradient></defs><circle cx="10.6" cy="10.6" r="9.6" fill="none" stroke="#dcdcdc" stroke-width="1.2"/><circle cx="10.3" cy="10.3" r="9.4" fill="none" stroke="#8a8a8a" stroke-width="1"/><circle cx="10.5" cy="10.5" r="8.6" fill="url(#lg)"/></svg>
<div class="t" style="left:236.8px;top:548.26px;font-size:9.5px;line-height:9.5px;font-weight:bold;color:#141414;-webkit-text-stroke:0.3px #141414;">Running</div>
<div class="btn" style="left:402px;top:537.5px;width:87.00px;height:24.50px;background:linear-gradient(#8f8f8f,#7a7a7a);color:#141414;font-size:9.8px;line-height:24.5px;font-weight:bold;-webkit-text-stroke:0.2px #141414">Duplicate</div>
<div class="btn" style="left:492px;top:537.5px;width:87.50px;height:24.50px;background:linear-gradient(#8f8f8f,#7a7a7a);color:#141414;font-size:9.8px;line-height:24.5px;font-weight:bold;-webkit-text-stroke:0.2px #141414">Save Data</div>
<div class="r" style="left:588.5px;top:389.5px;width:258.00px;height:70.00px;border:1.5px solid #4a4a4a;box-sizing:border-box;box-shadow:inset 1px 1px 0 #bdbdbd"></div>
<div class="r" style="left:589px;top:380px;width:73.00px;height:12.00px;background:#a9a9a9"></div>
<div class="t" style="left:589.6px;top:380.92px;font-size:12.5px;line-height:12.5px;font-weight:normal;color:#141414;-webkit-text-stroke:0.25px #141414;transform:scaleY(1);transform-origin:0 10.58px;-webkit-text-stroke:0.35px #141414">Runtime Info</div>
<div class="t" style="left:602.3px;top:396.84px;font-size:10px;line-height:10px;font-weight:bold;color:#141414;-webkit-text-stroke:0.3px #141414;letter-spacing:0.1px">Presentation #</div>
<div class="fr" style="left:602.3px;top:408px;width:39.00px;height:17.00px;border-width:2px 2.5px 2.5px 2px;background:#d2d2d2"></div>
<div class="t" style="left:605.5px;top:412.74px;font-size:10px;line-height:10px;font-weight:bold;color:#141414;letter-spacing:0.2px;-webkit-text-stroke:0.3px #141414;">0</div>
<div class="t" style="left:602.3px;top:426.84px;font-size:10px;line-height:10px;font-weight:bold;color:#141414;-webkit-text-stroke:0.3px #141414;letter-spacing:-0.15px">Trial #</div>
<div class="fr" style="left:602.3px;top:438.5px;width:39.00px;height:17.00px;border-width:2px 2.5px 2.5px 2px;background:#d2d2d2"></div>
<div class="t" style="left:605.5px;top:443.24px;font-size:10px;line-height:10px;font-weight:bold;color:#141414;letter-spacing:0.2px;-webkit-text-stroke:0.3px #141414;">0</div>
<div class="t" style="left:682.3px;top:396.84px;font-size:10px;line-height:10px;font-weight:bold;color:#141414;-webkit-text-stroke:0.3px #141414;letter-spacing:0.1px">Repeat</div>
<div class="fr" style="left:682.3px;top:408px;width:39.00px;height:17.00px;border-width:2px 2.5px 2.5px 2px;background:#d2d2d2"></div>
<div class="t" style="left:685.5px;top:412.74px;font-size:10px;line-height:10px;font-weight:bold;color:#141414;letter-spacing:0.2px;-webkit-text-stroke:0.3px #141414;">0</div>
<div class="t" style="left:682.3px;top:426.84px;font-size:10px;line-height:10px;font-weight:bold;color:#141414;-webkit-text-stroke:0.3px #141414;letter-spacing:-0.15px">Case</div>
<div class="fr" style="left:682.3px;top:438.5px;width:39.00px;height:17.00px;border-width:2px 2.5px 2.5px 2px;background:#d2d2d2"></div>
<div class="t" style="left:685.5px;top:443.24px;font-size:10px;line-height:10px;font-weight:bold;color:#141414;letter-spacing:0.2px;-webkit-text-stroke:0.3px #141414;">0</div>
<div class="t" style="left:762.8px;top:396.84px;font-size:10px;line-height:10px;font-weight:bold;color:#141414;-webkit-text-stroke:0.3px #141414;letter-spacing:0.1px">Samples</div>
<div class="fr" style="left:762.8px;top:408px;width:39.00px;height:17.00px;border-width:2px 2.5px 2.5px 2px;background:#d2d2d2"></div>
<div class="t" style="left:766.0px;top:412.74px;font-size:10px;line-height:10px;font-weight:bold;color:#141414;letter-spacing:0.2px;-webkit-text-stroke:0.3px #141414;">0</div>
<div class="t" style="left:762.8px;top:426.84px;font-size:10px;line-height:10px;font-weight:bold;color:#141414;-webkit-text-stroke:0.3px #141414;letter-spacing:-0.15px">Skipped frames</div>
<div class="fr" style="left:762.8px;top:438.5px;width:39.00px;height:17.00px;border-width:2px 2.5px 2.5px 2px;background:#d2d2d2"></div>
<div class="t" style="left:766.0px;top:443.24px;font-size:10px;line-height:10px;font-weight:bold;color:#141414;letter-spacing:0.2px;-webkit-text-stroke:0.3px #141414;">0</div>
<div class="btn" style="left:588.7px;top:466.3px;width:71.00px;height:24.20px;background:linear-gradient(#c8c8c8,#adadad);color:#141414;font-size:10.8px;line-height:24.19999999999999px;font-weight:normal;-webkit-text-stroke:0.45px #141414">TEST</div>
<div class="fr" style="left:589px;top:494.3px;width:258.00px;height:69.70px;border-width:2.5px 3.0px 3.0px 2.5px;background:#c9c9c9"></div></body></html>
